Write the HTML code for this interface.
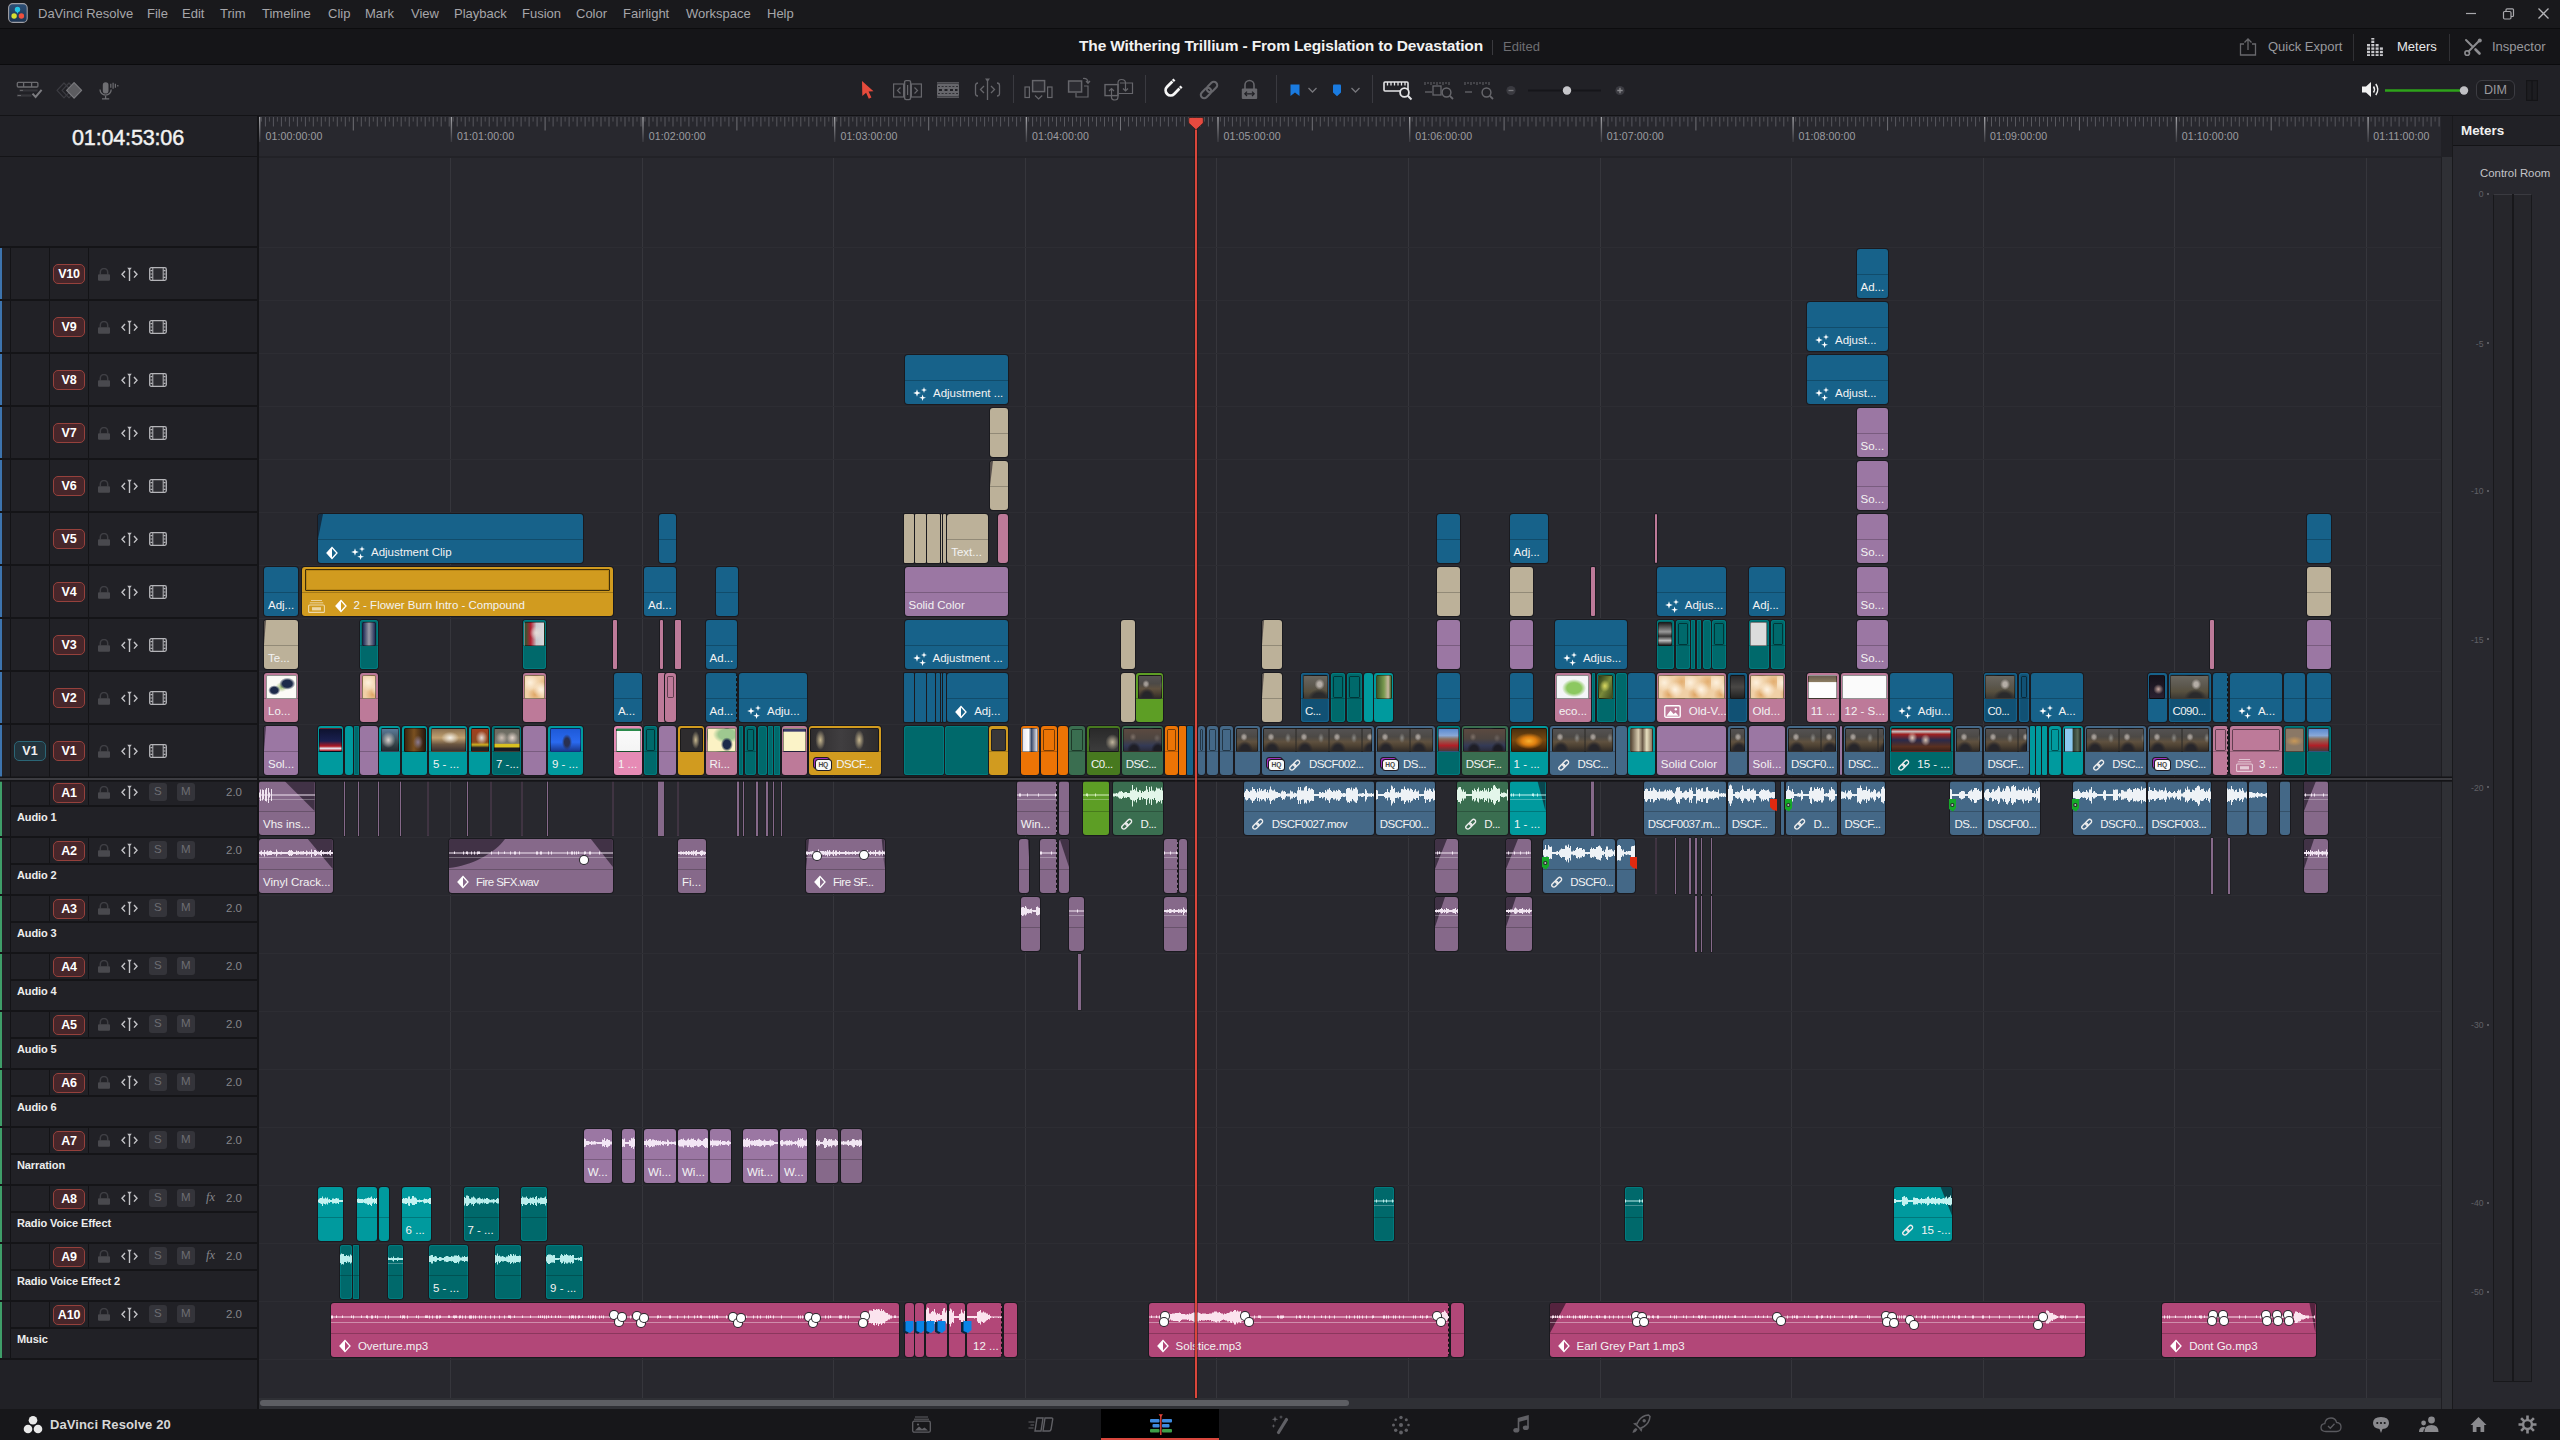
<!DOCTYPE html><html><head><meta charset="utf-8"><title>DaVinci Resolve</title><style>
*{box-sizing:border-box;margin:0;padding:0}
html,body{width:2560px;height:1440px;overflow:hidden}
body{background:#28282e;font-family:"Liberation Sans",sans-serif;position:relative;color:#d0d0d0;font-size:12px}
i{display:block;position:absolute;font-style:normal}
svg{position:absolute;overflow:visible}
#mb{position:absolute;left:0;top:0;width:2560px;height:29px;background:#19191c;border-bottom:1.5px solid #0c0c0e}
#mb span{position:absolute;top:5.5px;font-size:13px;color:#a6a6aa;white-space:nowrap}
#tb{position:absolute;left:0;top:29px;width:2560px;height:36px;background:#151518;border-bottom:1px solid #0b0b0d}
#tb span{position:absolute;white-space:nowrap}
#tool{position:absolute;left:0;top:65px;width:2560px;height:51px;background:#212126;border-bottom:1px solid #131316}
#tool .sep{position:absolute;top:10px;width:1px;height:28px;background:#3a3a40}
#rul{position:absolute;left:259px;top:116px;width:2182px;height:42px;background:#28282e;border-bottom:2px solid #222227;overflow:hidden}
#rul span{position:absolute;top:13.5px;font-size:10.6px;color:#9c9ca0;letter-spacing:0.1px}
#tc{position:absolute;left:0;top:116px;width:258px;height:42px;background:#212126;border-bottom:2px solid #141417;color:#f2f2f2;font-size:21.6px;line-height:43px;text-align:center;letter-spacing:-0.2px;padding-right:2px;-webkit-text-stroke:.45px #f2f2f2}
#hd{position:absolute;left:0;top:157px;width:258px;height:1252px;background:#212126}
#hdr{position:absolute;left:257px;top:116px;width:2px;height:1293px;background:#141417;z-index:6}
#tl{position:absolute;left:0;top:0;width:2441px;height:1398px;overflow:hidden;clip-path:inset(158px 0 0 259px)}
.gv{top:157px;width:1px;height:1241px;background:#36363c}
.gh{left:259px;width:2182px;height:1px;background:#2d2d33}
.c{position:absolute;border-radius:3px;overflow:hidden;box-shadow:0 0 0 1px #1a1a1f}
.c.dteal{box-shadow:0 0 0 1px #1a1a1f,inset 0 0 0 1px #007b7e}.c.dblue{box-shadow:0 0 0 1px #1a1a1f,inset 0 0 0 1.2px #17628a}
.v{height:49px}.a{height:54px}
.thin{border-radius:1px}.sq{border-radius:1px}
.ln{left:0;right:0;height:1px;background:rgba(0,0,0,.22)}
.v .ln{top:25px}.a .ln{top:30px}
.lb{position:absolute;left:0;right:0;white-space:nowrap;overflow:hidden;color:#f3f3f3;font-size:11.5px;padding-left:4px;line-height:17.5px;display:flex;align-items:center}
.v .lb{top:30px}.a .lb{top:34.5px}
.lb.wi{padding-left:8px}
.ic{position:static;flex:none;height:14px;margin-right:6px}
.xf{width:15px;margin-right:5px}.xk{width:12px;margin-right:7px}.xl{width:11.5px;height:12.5px;margin-right:8px}.xi{width:17px;height:13px;margin:0 8px 0 -1px}
.xc{width:17px;margin:0 6px 0 -2px}
.xk+.xf{margin-left:6px}.xc+.xk{margin-left:4px}.hq+.xl{margin-left:0px}
.lb .ic{position:static}
.hq{flex:none;position:relative;width:15px;height:10px;margin:-3px 7.5px 0 -3px;background:#a030bd;border-radius:2.5px;box-shadow:0 0 0 1px #1e1a22}
.hq b{position:absolute;left:2px;top:2.2px;width:15px;height:10px;background:#f8f8f8;border-radius:2.5px;color:#444;font-size:6.6px;line-height:10.5px;text-align:center;font-weight:bold;box-shadow:0 0 0 1px #1e1a22;letter-spacing:-0.1px}
.cx{letter-spacing:-0.55px}
.th{left:1.5px;right:1.5px;top:2px;height:23.5px;border:1.3px solid rgba(0,0,0,.42);border-radius:1.5px}
.in1{background:transparent;border:1.6px solid rgba(0,0,0,.48);left:2px;right:2px;top:2.5px;height:22.5px;border-radius:1.5px}
.in2{background:#39373a;border-color:rgba(0,0,0,.4);left:2px;right:2px;top:3px;height:21.5px}
.cmp{left:3px;right:3px;top:2px;height:22px;border:1px solid rgba(0,0,0,.7);border-radius:1px;box-shadow:inset 0 0 0 1px rgba(120,80,0,.25)}
.fd{left:0;top:0}.fd *{fill:rgba(15,10,20,.58)}
.wv{left:0;top:0}
.ds{right:0;top:0;bottom:0;width:0;border-right:1.5px dashed #111}
.dot{width:8px;height:8px;border-radius:50%;background:#fff;box-shadow:0 0 0 1px #2a2a2e;z-index:3}
.mk{z-index:4}
.tlp{height:56px;background:#86698a;box-shadow:0 0 0 .5px #1a1a1f}
.tld{height:56px;background:#1a181c;box-shadow:inset 0 0 0 .6px #5a485d;border-radius:1px}
#ph{left:1195px;top:122px;width:2px;height:1276px;background:#da463b;z-index:9;box-shadow:0 0 0 .6px rgba(30,20,20,.75)}
#phh{left:1188px;top:117px;z-index:10}
/* thumbnails */
.t-int{background:radial-gradient(ellipse 3.6px 4px at 7px 8px,#a39c96 0,#a39c96 35%,#a39c9600 100%) 0 0/33px 100%,radial-gradient(ellipse 8px 9px at 8px 21px,#26252a 0,#26252a 55%,#26252a00 100%) 0 0/33px 100%,radial-gradient(ellipse 3px 5px at 24px 9px,#8a8884 0,#8a888400 100%) 0 0/33px 100%,linear-gradient(90deg,#0000 0,#0000 94%,#2a2826 97%,#0000 100%) 0 0/33px 100%,linear-gradient(#545252 0,#4c4946 35%,#5f513f 58%,#4f4334 75%,#322c28 100%)}
.t-int2{background:radial-gradient(ellipse 5px 5.5px at 68% 38%,#b4ada6 0,#b4ada6 40%,#b4ada600 100%),radial-gradient(ellipse 11px 9px at 66% 100%,#2a2a2c 0,#2a2a2c 55%,#2a2a2c00 100%),linear-gradient(#6a675f 0,#5d5950 40%,#57503f 70%,#3d3a34 100%)}
.t-int3{background:radial-gradient(ellipse 3.4px 4px at 9px 8px,#7d7068 0,#7d706800 100%) 0 0/47px 100%,radial-gradient(ellipse 3.4px 4px at 33px 9px,#6b625d 0,#6b625d00 100%) 0 0/47px 100%,radial-gradient(ellipse 7px 8px at 10px 21px,#1e1e26 0,#1e1e26 55%,#1e1e2600 100%) 0 0/47px 100%,radial-gradient(ellipse 7px 8px at 34px 21px,#1c1c24 0,#1c1c24 55%,#1c1c2400 100%) 0 0/47px 100%,linear-gradient(#5b4a40 0,#4d4540 45%,#343a55 75%,#2a2c3c 100%)}
.t-news{background:linear-gradient(#0e1330 0,#1a2050 55%,#b01822 78%,#e8e8f0 88%,#b01822 100%)}
.t-suit{background:linear-gradient(90deg,#1c2a55,#9a9aa5 50%,#20305a)}
.t-man2{background:radial-gradient(ellipse 7px 7px at 60% 45%,#e6dcd6 0,#e6dcd600 100%),linear-gradient(90deg,#2a5a30,#b02030 30%,#c8c8cc 60%,#d8d8dc)}
.t-bw{background:linear-gradient(#222,#999 40%,#333 60%,#bbb 80%,#222)}
.t-paper{background:#dcdcdc}
.t-logo{background:radial-gradient(ellipse 8px 6px at 70% 35%,#1d2a4a 0,#1d2a4a 60%,#1d2a4a00 100%),radial-gradient(ellipse 6px 5px at 25% 65%,#1d2a4a 0,#1d2a4a 60%,#1d2a4a00 100%),radial-gradient(ellipse 6px 5px at 50% 50%,#9ab86a 0,#9ab86a00 100%),#fbfbf6}
.t-parch{background:radial-gradient(circle at 20% 30%,#fdf0dc 0,#fdf0dc00 34%) 0 0/26px 100%,radial-gradient(circle at 62% 62%,#fff3e2 0,#fff3e200 38%) 0 0/26px 100%,radial-gradient(circle at 88% 25%,#e3ae70 0,#e3ae7000 32%) 0 0/26px 100%,radial-gradient(circle at 38% 85%,#dfa666 0,#dfa66600 30%) 0 0/26px 100%,#f0d0a6}
.t-leaf{background:linear-gradient(90deg,#3a5a2a,#7a9a50 50%,#c8b8a0 80%,#4a6a30)}
.t-map{background:radial-gradient(ellipse 12px 9px at 55% 55%,#8cc860 0,#8cc860 60%,#8cc86000 100%),#f4f6f8}
.t-flower{background:radial-gradient(ellipse 5px 6px at 45% 45%,#d8d860 0,#d8d86000 100%),linear-gradient(120deg,#2a3a18,#7a8a3a 50%,#3a4a20)}
.t-dark{background:linear-gradient(#2a2a2c,#4a4846 50%,#222)}
.t-doc{background:linear-gradient(#6a5f50 0,#8a7a60 25%,#fdfdfd 30%,#fdfdfd 100%)}
.t-white{background:#fbfbfb}
.t-hands{background:radial-gradient(ellipse 5px 5px at 60% 60%,#c8a8a0 0,#c8a8a000 100%),linear-gradient(#15121a,#2a2030)}
.t-man1{background:radial-gradient(ellipse 7px 8px at 40% 50%,#d8d0cc 0,#d8d0cc00 100%),linear-gradient(#5a7a98,#3a4a50 60%,#222a30)}
.t-hall{background:radial-gradient(ellipse 5px 7px at 65% 60%,#8a7a90 0,#8a7a9000 100%),linear-gradient(90deg,#3a2410,#7a5020 45%,#2a1a10)}
.t-corr{background:radial-gradient(ellipse 9px 6px at 55% 40%,#f4f0e8 0,#f4f0e800 100%),linear-gradient(#8a7050,#c0a070 40%,#6a5540 70%,#3a3030)}
.t-podium{background:radial-gradient(ellipse 6px 7px at 60% 40%,#e8dcd6 0,#e8dcd600 100%),linear-gradient(#a04020 0,#8a4a20 60%,#d0b020 72%,#222 85%)}
.t-news2{background:radial-gradient(ellipse 6px 6px at 28% 40%,#cdbfb4 0,#cdbfb400 100%),radial-gradient(ellipse 6px 6px at 72% 40%,#e6d6cc 0,#e6d6cc00 100%),linear-gradient(#6a6a60 0,#7a7870 65%,#d8c020 70%,#d8c020 82%,#1a1a20 86%)}
.t-bluestage{background:radial-gradient(ellipse 5px 8px at 55% 60%,#2a3050 0,#2a3050 50%,#2a305000 100%),linear-gradient(#1e5ad8,#2a6af0 60%,#1a3a90)}
.t-web{background:linear-gradient(#2a8a4a 0,#2a8a4a 8%,#fafafa 10%,#f4f4f4 100%)}
.t-darkfl{background:radial-gradient(ellipse 4px 9px at 70% 50%,#c8b890 0,#c8b89000 100%),#2e2c2e}
.t-darkfl2{background:radial-gradient(ellipse 5px 10px at 14% 50%,#c8b890 0,#c8b89000 100%),radial-gradient(ellipse 5px 10px at 72% 50%,#c8b890 0,#c8b89000 100%),linear-gradient(90deg,#2e2c2e,#403e40 45%,#2e2c2e)}
.t-cmap{background:radial-gradient(ellipse 6px 7px at 70% 70%,#1d2a4a 0,#1d2a4a 60%,#1d2a4a00 100%),radial-gradient(ellipse 14px 9px at 70% 25%,#9ec890 0,#9ec890 60%,#9ec89000 100%),#fbf2c4}
.t-cream{background:linear-gradient(#3a3a6a 0,#3a3a6a 10%,#fbf3c8 14%)}
.t-whiteb{background:linear-gradient(90deg,#e8e8f0,#fff 40%,#3a4a6a 60%,#e0e0e8)}
.t-dark2{background:radial-gradient(ellipse 7px 8px at 80% 60%,#c0b49c 0,#c0b49c00 100%),linear-gradient(#2a2a2a,#3c3c3c)}
.t-crowd{background:linear-gradient(#5a8ad0 0,#88a8d8 30%,#8a7060 45%,#b02028 75%,#4a3a3a)}
.t-fire{background:radial-gradient(ellipse 14px 8px at 50% 55%,#f8b030 0,#e08010 50%,#e0801000 100%),linear-gradient(#4a3010,#7a4a10 50%,#3a2008)}
.t-bark{background:linear-gradient(90deg,#5a4a38,#d8ccb0 35%,#6a5a48 55%,#e8e0c0 75%,#8a7a60)}
.t-congress{background:radial-gradient(ellipse 5px 6px at 35% 40%,#e0c8b8 0,#e0c8b800 100%),radial-gradient(ellipse 5px 6px at 58% 50%,#d8c0b0 0,#d8c0b000 100%),linear-gradient(#a02020 0,#c8c0c0 12%,#a02020 24%,#2a2a4a 50%,#5a3020 80%,#3a2018)}
.t-lblue{background:linear-gradient(90deg,#8cc8f0 0,#8cc8f0 45%,#2a3a30 50%,#5a6a58 80%,#1a2018)}
.t-tan{background:radial-gradient(ellipse 9px 5px at 50% 55%,#c89858 0,#c8985800 100%),#8a7866}
/* headers */
.hr{position:absolute;left:0;width:258px;border-top:2px solid #141417;margin-top:-1px}
.hr .strip{left:0;top:0;bottom:0;width:2px}
.hr .c1{left:10px;top:0;bottom:0;width:1px;background:#131316}
.hr .c2{left:49px;top:0;width:1px;background:#131316}
.hr .c3{left:88px;top:0;width:1px;background:#131316}
.bd{position:absolute;left:53px;width:32px;height:20px;border:1px solid #96413c;background:#47262a;border-radius:5px;color:#fff;font-weight:bold;font-size:12.5px;text-align:center;line-height:18px;letter-spacing:-0.2px}
.bs{position:absolute;left:14px;width:32px;height:20px;border:1px solid #2b6676;background:#22333c;border-radius:5px;color:#f0f0f0;font-weight:bold;font-size:12.5px;text-align:center;line-height:18px}
.sm{position:absolute;width:17.5px;height:17.5px;background:#34343a;border-radius:3px;color:#6d6d72;font-size:11.5px;text-align:center;line-height:17.5px}
.vol{position:absolute;left:226px;font-size:11.5px;color:#85858a}
.fx{position:absolute;left:206px;font-size:12.5px;color:#85858a;font-style:italic;font-family:"Liberation Serif",serif}
.nm{position:absolute;left:17px;font-size:11px;font-weight:bold;color:#ededed;white-space:nowrap;letter-spacing:-0.1px}
.sub{left:11px;right:0;height:2px;background:#141417}
/* meters */
#mt{position:absolute;left:2452px;top:116px;width:108px;height:1293px;background:#28282e;border-left:1px solid #19191c}
#mth{position:absolute;left:0;top:0;width:108px;height:30px;background:#212126;border-bottom:1px solid #131316;color:#f0f0f0;font-size:13.4px;font-weight:bold;line-height:29px;padding-left:8px}
#mt .sc{position:absolute;right:71.5px;font-size:8.6px;color:#606066;white-space:nowrap}
#vs{position:absolute;left:2441px;top:157px;width:11px;height:1252px;background:#2f3035;border-left:1px solid #1e1e22}
#vs0{position:absolute;left:2441px;top:116px;width:11px;height:41px;background:#212126}
#hs{position:absolute;left:259px;top:1398px;width:2182px;height:11px;background:#2f3035}
#hs i{left:1px;top:2px;width:1089px;height:6px;border-radius:3px;background:#5d5e63}
#bb{position:absolute;left:0;top:1409px;width:2560px;height:31px;background:#17171a}
#bb span{position:absolute;left:50px;top:7.5px;font-size:13px;font-weight:bold;color:#d8d8d8;letter-spacing:0.1px}
.blue{background:#17628a}.dblue{background:#115174}.teal{background:#009a9e}.dteal{background:#00696b}.lav{background:#9b77a3}.pink{background:#bd7a99}.bpink{background:#e68bb5}.beige{background:#bcb199}.gold{background:#d19b1f}.orange{background:#ec7405}.lime{background:#5d9e25}.olive{background:#47791f}.sgreen{background:#3a6e50}.sblue{background:#446887}.apurp{background:#86698a}.mag{background:#b24778}</style></head><body><svg width="0" height="0" style="position:absolute"><defs>
<symbol id="sf" viewBox="0 0 15 14"><path d="M4,2.2 4.9,5.1 7.8,6 4.9,6.9 4,9.8 3.1,6.9 0.2,6 3.1,5.1Z M11,0 11.7,2.3 14,3 11.7,3.7 11,6 10.3,3.7 8,3 10.3,2.3Z M9.6,7.4 10.4,10 13,10.8 10.4,11.6 9.6,14 8.8,11.6 6.2,10.8 8.8,10Z" fill="#fff"/></symbol>
<symbol id="sk" viewBox="0 0 12 14"><path d="M6,1.5 11,7 6,12.5 1,7Z" fill="none" stroke="#fff" stroke-width="1.3"/><path d="M6,1.5V12.5L1,7Z" fill="#fff"/></symbol>
<symbol id="sl" viewBox="0 0 13 14"><g fill="none" stroke="#ececec" stroke-width="1.6" transform="rotate(-45 6.5 7)"><rect x="-0.4" y="4.7" width="7.8" height="4.6" rx="2.3"/><rect x="5.6" y="4.7" width="7.8" height="4.6" rx="2.3"/></g></symbol>
<symbol id="sc" viewBox="0 0 17 14"><path d="M3,1.5H14M1.8,3.8H15.2" stroke="rgba(255,255,255,.55)" stroke-width="1" fill="none"/><rect x="0.6" y="6" width="15.8" height="7.4" rx="1" fill="none" stroke="rgba(255,255,255,.62)" stroke-width="1.1"/><rect x="4" y="8.2" width="9" height="3.2" fill="rgba(255,255,255,.6)"/></symbol>
<symbol id="si" viewBox="0 0 17 13"><rect x="0.8" y="0.8" width="15.4" height="11.4" rx="1.2" fill="none" stroke="#fff" stroke-width="1.4"/><path d="M2.5,10.8 6.5,5.5 9.6,9 11.6,7.4 14.6,10.8Z" fill="#fff"/><circle cx="11.8" cy="4.2" r="1.2" fill="#fff"/></symbol>
<symbol id="lock" viewBox="0 0 12 13"><path d="M2.3,6.5V4.2 a3.7,3.7 0 0 1 7.4,0 V6.5" fill="none" stroke="#3f3f44" stroke-width="1.5"/><rect x="0" y="6.3" width="12" height="6.4" rx="1" fill="#49494e"/></symbol>
<symbol id="asel" viewBox="0 0 17 14"><path d="M4,4 1,7.3 4,10.6 M13,4 16,7.3 13,10.6" fill="none" stroke="#c4c4c8" stroke-width="1.4"/><path d="M8.5,2V14" stroke="#c4c4c8" stroke-width="1.4"/><path d="M6.2,0.8H10.8L8.5,3.5Z" fill="#c4c4c8"/></symbol>
<symbol id="film" viewBox="0 0 18 14"><rect x="0.7" y="0.7" width="16.6" height="12.6" rx="1.5" fill="#2c2c31" stroke="#b4b4b8" stroke-width="1.3"/><path d="M3.8,1V13M14.2,1V13" stroke="#b4b4b8" stroke-width="1"/><path d="M1.5,3.6H3.5M1.5,7H3.5M1.5,10.4H3.5M14.5,3.6H16.5M14.5,7H16.5M14.5,10.4H16.5" stroke="#b4b4b8" stroke-width="1.2"/></symbol>
</defs></svg><div id="mb"><svg style="left:8px;top:3px" width="20" height="20"><defs><linearGradient id="lg" x1="0" y1="0" x2="0" y2="1"><stop offset="0" stop-color="#2d5078"/><stop offset="1" stop-color="#1c3350"/></linearGradient></defs><rect x="0.6" y="0.6" width="18.6" height="18.8" rx="4.2" fill="url(#lg)" stroke="#a0a0a6" stroke-width="1.1"/><circle cx="9.5" cy="6.5" r="2.7" fill="#25c6e6"/><path d="M8.4,8.6 9.5,10.8 10.6,8.6Z" fill="#25c6e6"/><circle cx="6.1" cy="13" r="2.7" fill="#d6de32"/><circle cx="13.4" cy="13" r="2.7" fill="#f0503e"/></svg><span style="left:38px">DaVinci Resolve</span><span style="left:147px">File</span><span style="left:182px">Edit</span><span style="left:220px">Trim</span><span style="left:262px">Timeline</span><span style="left:328px">Clip</span><span style="left:365px">Mark</span><span style="left:411px">View</span><span style="left:454px">Playback</span><span style="left:522px">Fusion</span><span style="left:576px">Color</span><span style="left:623px">Fairlight</span><span style="left:686px">Workspace</span><span style="left:767px">Help</span><svg style="left:2464px;top:6px" width="90" height="16"><path d="M2,7.5H12" stroke="#a8a8ac" stroke-width="1.2"/><rect x="39.5" y="5.5" width="7.5" height="7.5" rx="1.2" fill="none" stroke="#a8a8ac" stroke-width="1.2"/><path d="M42,5.5V3.8 a1,1 0 0 1 1,-1 H48.5 a1,1 0 0 1 1,1 V9.5 a1,1 0 0 1 -1,1 H47" fill="none" stroke="#a8a8ac" stroke-width="1.2"/><path d="M74.5,2.5 84.5,12.5M84.5,2.5 74.5,12.5" stroke="#b4b4b8" stroke-width="1.3"/></svg></div><div id="tb"><span id="ttl" style="left:1079px;top:8px;font-size:15.5px;font-weight:bold;color:#f2f2f2;letter-spacing:-0.15px">The Withering Trillium - From Legislation to Devastation</span><i style="left:1492px;top:11px;width:1px;height:15px;background:#3a3a3e"></i><span style="left:1503px;top:10px;font-size:13px;color:#6e6e72">Edited</span><svg style="left:2238px;top:8px" width="20" height="20"><path d="M6,7H2.5V18H17.5V7H14" fill="none" stroke="#68686c" stroke-width="1.3"/><path d="M10,13V2.5M6.5,5.5 10,2 13.5,5.5" fill="none" stroke="#68686c" stroke-width="1.3"/></svg><span style="left:2268px;top:10px;font-size:13px;color:#98989c">Quick Export</span><i style="left:2353px;top:5px;width:1px;height:27px;background:#303034"></i><svg style="left:2367px;top:9px" width="18" height="18"><g fill="#c8c8cc"><rect x="0" y="6" width="3" height="2.4"/><rect x="0" y="9.4" width="3" height="2.4"/><rect x="0" y="12.8" width="3" height="2.4"/><rect x="0" y="16.2" width="3" height="1.8"/><rect x="4.3" y="0" width="3" height="1.6"/><rect x="4.3" y="2.6" width="3" height="2.4"/><rect x="4.3" y="6" width="3" height="2.4"/><rect x="4.3" y="9.4" width="3" height="2.4"/><rect x="4.3" y="12.8" width="3" height="2.4"/><rect x="4.3" y="16.2" width="3" height="1.8"/><rect x="8.6" y="6" width="3" height="2.4"/><rect x="8.6" y="9.4" width="3" height="2.4"/><rect x="8.6" y="12.8" width="3" height="2.4"/><rect x="8.6" y="16.2" width="3" height="1.8"/><rect x="12.9" y="9.4" width="3" height="2.4"/><rect x="12.9" y="12.8" width="3" height="2.4"/><rect x="12.9" y="16.2" width="3" height="1.8"/></g></svg><span style="left:2397px;top:10px;font-size:13px;color:#e8e8e8">Meters</span><i style="left:2449px;top:5px;width:1px;height:27px;background:#303034"></i><svg style="left:2464px;top:9px" width="19" height="18"><g stroke="#8c8c90" stroke-width="2" stroke-linecap="round" fill="none"><path d="M2,2 8,8M16,2 4.5,13.5"/><path d="M11.5,11.5 15.5,15.5" stroke-width="2.6"/></g><circle cx="3.2" cy="15" r="2.3" fill="none" stroke="#8c8c90" stroke-width="1.6"/><circle cx="15.8" cy="2.6" r="2" fill="#8c8c90"/></svg><span style="left:2492px;top:10px;font-size:13px;color:#98989c">Inspector</span></div><div id="tool"><svg style="left:0;top:0" width="130" height="50"><g fill="none" stroke="#6c6c70" stroke-width="1.3"><rect x="17.3" y="17.4" width="20.6" height="4.6" rx="1"/><path d="M23.6,17.4V22M31.6,17.4V22"/></g><rect x="19.3" y="24.4" width="18.3" height="2.1" fill="#35353a"/><rect x="17" y="29.4" width="14.5" height="2.3" fill="#35353a"/><path d="M20,25.4H23M17.6,30.5H21" stroke="#66666a" stroke-width="1"/><path d="M32.5,28.6 35.6,32 41.6,24.9" fill="none" stroke="#7c7c80" stroke-width="2"/><g fill="none" stroke="#3c3c42" stroke-width="1.2" stroke-linejoin="round"><path d="M64,18 71,25.4 64,32.8 57,25.4Z"/><path d="M69,18 76,25.4 69,32.8 62,25.4Z"/></g><path d="M74.1,17.6 81.6,25.4 74.1,33.2 66.6,25.4Z" fill="#5c5c60" stroke="#7a7a7e" stroke-width="1.2" stroke-linejoin="round"/><rect x="102.8" y="17.2" width="5.7" height="11.4" rx="2.85" fill="#6e6e72"/><path d="M100,24.5 a5.6,5.6 0 0 0 11.2,0M105.6,31V33.4M102,33.8H109.2" fill="none" stroke="#6e6e72" stroke-width="1.3"/><path d="M110.8,18.8V22.8M113.1,17.8V23.8M115.4,18.8V22.8" stroke="#6e6e72" stroke-width="1.2"/><path d="M117.8,20V21.6" stroke="#6e6e72" stroke-width="1.2"/></svg><svg style="left:860px;top:14px" width="16" height="22"><path d="M2,2 13.5,12.2 8.6,12.6 11.4,18.6 8.8,19.8 6.1,13.8 2.3,17Z" fill="#e64b3c"/></svg><svg style="left:893px;top:14px" width="30" height="22"><g fill="none" stroke="#66666b" stroke-width="1.2"><rect x="0.6" y="5" width="10" height="13"/><rect x="18.4" y="5" width="10" height="13"/><rect x="11.6" y="1.6" width="6" height="19" rx="1.5" fill="#212126" stroke-width="1.4"/><path d="M14.6,6V16"/><path d="M7.5,8.5 4.5,11.5 7.5,14.5M21.5,8.5 24.5,11.5 21.5,14.5"/></g></svg><svg style="left:936px;top:17px" width="24" height="16"><rect x="1" y="2" width="22" height="12" rx="1" fill="#66666b"/><path d="M1,0.8H23M1,15.2H23" stroke="#66666b" stroke-width="1.2"/><path d="M3,8H6M8.5,8H11.5M14,8H17M19,8H21.5" stroke="#212126" stroke-width="2.2"/><path d="M2,4.5H22M2,11.5H22" stroke="#212126" stroke-width=".8" stroke-dasharray="2 1.6"/></svg><svg style="left:974px;top:12px" width="28" height="24"><g fill="none" stroke="#66666b" stroke-width="1.3"><path d="M13.5,2V23"/><path d="M4,6 Q1.5,6 1.5,8.5V16.5Q1.5,19 4,19M23,6Q25.5,6 25.5,8.5V16.5Q25.5,19 23,19"/><path d="M10,9 6.5,12.5 10,16M17,9 20.5,12.5 17,16"/></g><path d="M11,1.5H16L13.5,5Z" fill="#66666b"/></svg><i class="sep" style="left:1013px"></i><svg style="left:1024px;top:14px" width="30" height="24"><g fill="none" stroke="#66666b" stroke-width="1.2"><rect x="1" y="8" width="4.4" height="10.5"/><rect x="23.6" y="8" width="4.4" height="10.5"/><rect x="8.6" y="1.6" width="12" height="11" fill="#2c2c32" stroke-width="1.5"/><path d="M11,16.5 14.6,20 18.2,16.5"/></g></svg><svg style="left:1067px;top:12px" width="26" height="24"><g fill="none" stroke="#66666b" stroke-width="1.2"><path d="M9,16V20H21V9H17"/><rect x="1.6" y="4" width="13" height="11" fill="#2c2c32" stroke-width="1.5"/><path d="M16,1.5Q21,1 21,5.5M19,4 21,6.3 23,4"/></g></svg><svg style="left:1103px;top:13px" width="32" height="24"><g fill="none" stroke="#66666b" stroke-width="1.2"><rect x="2" y="6.6" width="13" height="11" stroke-width="1.4"/><path d="M17,5H29.5V15.5H16"/><path d="M8.5,20V11M6,13 8.5,10.5 11,13"/><path d="M8.5,20Q9,22 12,22 15,22 15,19V5Q15,1.5 18.5,1.5 22.5,1.5 22.5,5V12.5M20,10.5 22.5,13 25,10.5"/></g></svg><i class="sep" style="left:1145px"></i><svg style="left:1159px;top:13px" width="24" height="24"><g transform="rotate(45 12 12)"><path d="M7,5V12.5 a5,5 0 0 0 10,0V5" fill="none" stroke="#f6f6f6" stroke-width="2.8"/><path d="M5.6,3.2H8.4M15.6,3.2H18.4" stroke="#f6f6f6" stroke-width="2.2"/></g></svg><svg style="left:1198px;top:14px" width="22" height="22"><g fill="none" stroke="#66666b" stroke-width="2.1" transform="rotate(-45 11 11)"><rect x="0.8" y="7.6" width="12" height="6.8" rx="3.4"/><rect x="9.2" y="7.6" width="12" height="6.8" rx="3.4"/></g></svg><svg style="left:1241px;top:14px" width="17" height="22"><path d="M4,10V6 a4.5,4.5 0 0 1 9,0V10" fill="none" stroke="#66666b" stroke-width="1.6"/><rect x="0.8" y="9.6" width="15.4" height="10.4" rx="1" fill="#66666b"/><path d="M4,14.8H13M6,12.6 3.8,14.8 6,17M11,12.6 13.2,14.8 11,17" fill="none" stroke="#212126" stroke-width="1.2"/></svg><i class="sep" style="left:1276px"></i><svg style="left:1289px;top:19px" width="30" height="13"><path d="M1.5,0.5H10.5V12L6,8.6 1.5,12Z" fill="#1a7be0"/><path d="M19.5,4 23.5,8 27.5,4" fill="none" stroke="#77777c" stroke-width="1.3"/></svg><svg style="left:1332px;top:19px" width="30" height="13"><path d="M1,1.5Q1,0.5 2,0.5H8Q9,0.5 9,1.5V8.5L5,12.2 1,8.5Z" fill="#1a7be0"/><path d="M19.5,4 23.5,8 27.5,4" fill="none" stroke="#77777c" stroke-width="1.3"/></svg><i class="sep" style="left:1372px"></i><svg style="left:1383px;top:14px" width="32" height="22"><g fill="none" stroke="#e4e4e6" stroke-width="1.3"><rect x="1" y="3" width="24" height="9" rx="1" stroke-width="1.6"/><path d="M4.5,3V6.5M8,3V6.5M11.5,3V6.5M15,3V6.5M18.5,3V6.5M22,3V6.5"/><circle cx="21.5" cy="13.5" r="4.4" fill="#212126" stroke-width="1.8"/><path d="M24.8,16.8 28.5,20.5" stroke-width="2"/></g></svg><svg style="left:1424px;top:14px" width="32" height="22"><g fill="none" stroke="#66666b" stroke-width="1.3"><path d="M1,3V6M4,3V5M7,3V6M10,3V5M13,3V6M16,3V5M19,3V6M22,3V5M25,3V6" stroke-width="1"/><path d="M1,13H8"/><rect x="9" y="7" width="8" height="9"/><circle cx="22.5" cy="13.5" r="4.4" stroke-width="1.5"/><path d="M25.8,16.8 29,20" stroke-width="1.8"/></g></svg><svg style="left:1464px;top:14px" width="32" height="22"><g fill="none" stroke="#66666b" stroke-width="1.3"><path d="M1,3V6M4,3V5M7,3V6M10,3V5M13,3V6M16,3V5M19,3V6M22,3V5M25,3V6" stroke-width="1"/><path d="M1,13H8"/><circle cx="22.5" cy="13.5" r="4.4" stroke-width="1.5"/><path d="M25.8,16.8 29,20" stroke-width="1.8"/></g></svg><svg style="left:1505px;top:19px" width="122" height="13"><circle cx="6" cy="6.5" r="4.6" fill="#3a3a40"/><path d="M3.5,6.5H8.5" stroke="#77777c" stroke-width="1.3"/><path d="M23,6.5H96" stroke="#16161a" stroke-width="2"/><circle cx="62" cy="6.5" r="4.2" fill="#c6c6ca"/><circle cx="115" cy="6.5" r="4.6" fill="#3a3a40"/><path d="M112.3,6.5H117.7M115,3.8V9.2" stroke="#88888c" stroke-width="1.3"/></svg><svg style="left:2361px;top:16px" width="20" height="17"><path d="M1,5.5H5L10,1V16L5,11.5H1Z" fill="#f0f0f0"/><path d="M12.5,5.5Q14.5,8.5 12.5,11.5M14.8,3Q18.8,8.5 14.8,14" fill="none" stroke="#f0f0f0" stroke-width="1.5"/></svg><svg style="left:2384px;top:19px" width="88" height="13"><path d="M1,6.5H76" stroke="#2ea31a" stroke-width="2.4"/><circle cx="80" cy="6.5" r="4.2" fill="#c0c0c4"/></svg><i style="left:2476px;top:15px;width:39px;height:20px;border:1px solid #3c3c42;border-radius:6px;color:#9a9a9e;font-size:12.5px;text-align:center;line-height:18px;background:#1d1d21">DIM</i><svg style="left:2526px;top:15px" width="12" height="21"><rect x="0.6" y="0.6" width="10.8" height="19.8" fill="#1d1d21" stroke="#141417" stroke-width="1.2"/><path d="M6,1V20" stroke="#141417" stroke-width="1.2"/></svg></div><div id="tc">01:04:53:06</div><div id="rul"><svg style="left:0;top:0" width="2182" height="40"><defs><linearGradient id="mj" x1="0" y1="0" x2="0" y2="26" gradientUnits="userSpaceOnUse"><stop offset="0" stop-color="#a8a8ac"/><stop offset=".45" stop-color="#77777c"/><stop offset="1" stop-color="#3a3a40"/></linearGradient></defs><g stroke-width="1"><path d="M2.4,1V5.6" stroke="#505056"/><path d="M6.4,1V10.5" stroke="#58585e"/><path d="M10.4,1V5.6" stroke="#505056"/><path d="M14.4,1V10.5" stroke="#58585e"/><path d="M18.4,1V5.6" stroke="#505056"/><path d="M22.4,1V10.5" stroke="#58585e"/><path d="M26.4,1V5.6" stroke="#505056"/><path d="M30.4,1V10.5" stroke="#58585e"/><path d="M34.4,1V5.6" stroke="#505056"/><path d="M38.4,1V10.5" stroke="#58585e"/><path d="M42.4,1V5.6" stroke="#505056"/><path d="M46.4,1V10.5" stroke="#58585e"/><path d="M50.3,1V5.6" stroke="#505056"/><path d="M54.3,1V10.5" stroke="#58585e"/><path d="M58.3,1V5.6" stroke="#505056"/><path d="M62.3,1V10.5" stroke="#58585e"/><path d="M66.3,1V5.6" stroke="#505056"/><path d="M70.3,1V10.5" stroke="#58585e"/><path d="M74.3,1V5.6" stroke="#505056"/><path d="M78.3,1V10.5" stroke="#58585e"/><path d="M82.3,1V5.6" stroke="#505056"/><path d="M86.3,1V10.5" stroke="#58585e"/><path d="M90.3,1V5.6" stroke="#505056"/><path d="M94.3,1V14.5" stroke="#707076"/><path d="M98.3,1V5.6" stroke="#505056"/><path d="M102.3,1V10.5" stroke="#58585e"/><path d="M106.3,1V5.6" stroke="#505056"/><path d="M110.3,1V10.5" stroke="#58585e"/><path d="M114.3,1V5.6" stroke="#505056"/><path d="M118.3,1V10.5" stroke="#58585e"/><path d="M122.3,1V5.6" stroke="#505056"/><path d="M126.3,1V10.5" stroke="#58585e"/><path d="M130.3,1V5.6" stroke="#505056"/><path d="M134.3,1V10.5" stroke="#58585e"/><path d="M138.3,1V5.6" stroke="#505056"/><path d="M142.2,1V10.5" stroke="#58585e"/><path d="M146.2,1V5.6" stroke="#505056"/><path d="M150.2,1V10.5" stroke="#58585e"/><path d="M154.2,1V5.6" stroke="#505056"/><path d="M158.2,1V10.5" stroke="#58585e"/><path d="M162.2,1V5.6" stroke="#505056"/><path d="M166.2,1V10.5" stroke="#58585e"/><path d="M170.2,1V5.6" stroke="#505056"/><path d="M174.2,1V10.5" stroke="#58585e"/><path d="M178.2,1V5.6" stroke="#505056"/><path d="M182.2,1V10.5" stroke="#58585e"/><path d="M186.2,1V5.6" stroke="#505056"/><path d="M190.2,1V10.5" stroke="#58585e"/><path d="M194.2,1V5.6" stroke="#505056"/><path d="M198.2,1V10.5" stroke="#58585e"/><path d="M202.2,1V5.6" stroke="#505056"/><path d="M206.2,1V10.5" stroke="#58585e"/><path d="M210.2,1V5.6" stroke="#505056"/><path d="M214.2,1V10.5" stroke="#58585e"/><path d="M218.2,1V5.6" stroke="#505056"/><path d="M222.2,1V10.5" stroke="#58585e"/><path d="M226.2,1V5.6" stroke="#505056"/><path d="M230.2,1V10.5" stroke="#58585e"/><path d="M234.2,1V5.6" stroke="#505056"/><path d="M238.1,1V10.5" stroke="#58585e"/><path d="M242.1,1V5.6" stroke="#505056"/><path d="M246.1,1V10.5" stroke="#58585e"/><path d="M250.1,1V5.6" stroke="#505056"/><path d="M254.1,1V10.5" stroke="#58585e"/><path d="M258.1,1V5.6" stroke="#505056"/><path d="M262.1,1V10.5" stroke="#58585e"/><path d="M266.1,1V5.6" stroke="#505056"/><path d="M270.1,1V10.5" stroke="#58585e"/><path d="M274.1,1V5.6" stroke="#505056"/><path d="M278.1,1V10.5" stroke="#58585e"/><path d="M282.1,1V5.6" stroke="#505056"/><path d="M286.1,1V14.5" stroke="#707076"/><path d="M290.1,1V5.6" stroke="#505056"/><path d="M294.1,1V10.5" stroke="#58585e"/><path d="M298.1,1V5.6" stroke="#505056"/><path d="M302.1,1V10.5" stroke="#58585e"/><path d="M306.1,1V5.6" stroke="#505056"/><path d="M310.1,1V10.5" stroke="#58585e"/><path d="M314.1,1V5.6" stroke="#505056"/><path d="M318.1,1V10.5" stroke="#58585e"/><path d="M322.1,1V5.6" stroke="#505056"/><path d="M326.1,1V10.5" stroke="#58585e"/><path d="M330.0,1V5.6" stroke="#505056"/><path d="M334.0,1V10.5" stroke="#58585e"/><path d="M338.0,1V5.6" stroke="#505056"/><path d="M342.0,1V10.5" stroke="#58585e"/><path d="M346.0,1V5.6" stroke="#505056"/><path d="M350.0,1V10.5" stroke="#58585e"/><path d="M354.0,1V5.6" stroke="#505056"/><path d="M358.0,1V10.5" stroke="#58585e"/><path d="M362.0,1V5.6" stroke="#505056"/><path d="M366.0,1V10.5" stroke="#58585e"/><path d="M370.0,1V5.6" stroke="#505056"/><path d="M374.0,1V10.5" stroke="#58585e"/><path d="M378.0,1V5.6" stroke="#505056"/><path d="M382.0,1V10.5" stroke="#58585e"/><path d="M386.0,1V5.6" stroke="#505056"/><path d="M390.0,1V10.5" stroke="#58585e"/><path d="M394.0,1V5.6" stroke="#505056"/><path d="M398.0,1V10.5" stroke="#58585e"/><path d="M402.0,1V5.6" stroke="#505056"/><path d="M406.0,1V10.5" stroke="#58585e"/><path d="M410.0,1V5.6" stroke="#505056"/><path d="M414.0,1V10.5" stroke="#58585e"/><path d="M418.0,1V5.6" stroke="#505056"/><path d="M421.9,1V10.5" stroke="#58585e"/><path d="M425.9,1V5.6" stroke="#505056"/><path d="M429.9,1V10.5" stroke="#58585e"/><path d="M433.9,1V5.6" stroke="#505056"/><path d="M437.9,1V10.5" stroke="#58585e"/><path d="M441.9,1V5.6" stroke="#505056"/><path d="M445.9,1V10.5" stroke="#58585e"/><path d="M449.9,1V5.6" stroke="#505056"/><path d="M453.9,1V10.5" stroke="#58585e"/><path d="M457.9,1V5.6" stroke="#505056"/><path d="M461.9,1V10.5" stroke="#58585e"/><path d="M465.9,1V5.6" stroke="#505056"/><path d="M469.9,1V10.5" stroke="#58585e"/><path d="M473.9,1V5.6" stroke="#505056"/><path d="M477.9,1V14.5" stroke="#707076"/><path d="M481.9,1V5.6" stroke="#505056"/><path d="M485.9,1V10.5" stroke="#58585e"/><path d="M489.9,1V5.6" stroke="#505056"/><path d="M493.9,1V10.5" stroke="#58585e"/><path d="M497.9,1V5.6" stroke="#505056"/><path d="M501.9,1V10.5" stroke="#58585e"/><path d="M505.9,1V5.6" stroke="#505056"/><path d="M509.9,1V10.5" stroke="#58585e"/><path d="M513.8,1V5.6" stroke="#505056"/><path d="M517.8,1V10.5" stroke="#58585e"/><path d="M521.8,1V5.6" stroke="#505056"/><path d="M525.8,1V10.5" stroke="#58585e"/><path d="M529.8,1V5.6" stroke="#505056"/><path d="M533.8,1V10.5" stroke="#58585e"/><path d="M537.8,1V5.6" stroke="#505056"/><path d="M541.8,1V10.5" stroke="#58585e"/><path d="M545.8,1V5.6" stroke="#505056"/><path d="M549.8,1V10.5" stroke="#58585e"/><path d="M553.8,1V5.6" stroke="#505056"/><path d="M557.8,1V10.5" stroke="#58585e"/><path d="M561.8,1V5.6" stroke="#505056"/><path d="M565.8,1V10.5" stroke="#58585e"/><path d="M569.8,1V5.6" stroke="#505056"/><path d="M573.8,1V10.5" stroke="#58585e"/><path d="M577.8,1V5.6" stroke="#505056"/><path d="M581.8,1V10.5" stroke="#58585e"/><path d="M585.8,1V5.6" stroke="#505056"/><path d="M589.8,1V10.5" stroke="#58585e"/><path d="M593.8,1V5.6" stroke="#505056"/><path d="M597.8,1V10.5" stroke="#58585e"/><path d="M601.8,1V5.6" stroke="#505056"/><path d="M605.8,1V10.5" stroke="#58585e"/><path d="M609.7,1V5.6" stroke="#505056"/><path d="M613.7,1V10.5" stroke="#58585e"/><path d="M617.7,1V5.6" stroke="#505056"/><path d="M621.7,1V10.5" stroke="#58585e"/><path d="M625.7,1V5.6" stroke="#505056"/><path d="M629.7,1V10.5" stroke="#58585e"/><path d="M633.7,1V5.6" stroke="#505056"/><path d="M637.7,1V10.5" stroke="#58585e"/><path d="M641.7,1V5.6" stroke="#505056"/><path d="M645.7,1V10.5" stroke="#58585e"/><path d="M649.7,1V5.6" stroke="#505056"/><path d="M653.7,1V10.5" stroke="#58585e"/><path d="M657.7,1V5.6" stroke="#505056"/><path d="M661.7,1V10.5" stroke="#58585e"/><path d="M665.7,1V5.6" stroke="#505056"/><path d="M669.7,1V14.5" stroke="#707076"/><path d="M673.7,1V5.6" stroke="#505056"/><path d="M677.7,1V10.5" stroke="#58585e"/><path d="M681.7,1V5.6" stroke="#505056"/><path d="M685.7,1V10.5" stroke="#58585e"/><path d="M689.7,1V5.6" stroke="#505056"/><path d="M693.7,1V10.5" stroke="#58585e"/><path d="M697.7,1V5.6" stroke="#505056"/><path d="M701.6,1V10.5" stroke="#58585e"/><path d="M705.6,1V5.6" stroke="#505056"/><path d="M709.6,1V10.5" stroke="#58585e"/><path d="M713.6,1V5.6" stroke="#505056"/><path d="M717.6,1V10.5" stroke="#58585e"/><path d="M721.6,1V5.6" stroke="#505056"/><path d="M725.6,1V10.5" stroke="#58585e"/><path d="M729.6,1V5.6" stroke="#505056"/><path d="M733.6,1V10.5" stroke="#58585e"/><path d="M737.6,1V5.6" stroke="#505056"/><path d="M741.6,1V10.5" stroke="#58585e"/><path d="M745.6,1V5.6" stroke="#505056"/><path d="M749.6,1V10.5" stroke="#58585e"/><path d="M753.6,1V5.6" stroke="#505056"/><path d="M757.6,1V10.5" stroke="#58585e"/><path d="M761.6,1V5.6" stroke="#505056"/><path d="M769.6,1V5.6" stroke="#505056"/><path d="M773.6,1V10.5" stroke="#58585e"/><path d="M777.6,1V5.6" stroke="#505056"/><path d="M781.6,1V10.5" stroke="#58585e"/><path d="M785.6,1V5.6" stroke="#505056"/><path d="M789.6,1V10.5" stroke="#58585e"/><path d="M793.5,1V5.6" stroke="#505056"/><path d="M797.5,1V10.5" stroke="#58585e"/><path d="M801.5,1V5.6" stroke="#505056"/><path d="M805.5,1V10.5" stroke="#58585e"/><path d="M809.5,1V5.6" stroke="#505056"/><path d="M813.5,1V10.5" stroke="#58585e"/><path d="M817.5,1V5.6" stroke="#505056"/><path d="M821.5,1V10.5" stroke="#58585e"/><path d="M825.5,1V5.6" stroke="#505056"/><path d="M829.5,1V10.5" stroke="#58585e"/><path d="M833.5,1V5.6" stroke="#505056"/><path d="M837.5,1V10.5" stroke="#58585e"/><path d="M841.5,1V5.6" stroke="#505056"/><path d="M845.5,1V10.5" stroke="#58585e"/><path d="M849.5,1V5.6" stroke="#505056"/><path d="M853.5,1V10.5" stroke="#58585e"/><path d="M857.5,1V5.6" stroke="#505056"/><path d="M861.5,1V14.5" stroke="#707076"/><path d="M865.5,1V5.6" stroke="#505056"/><path d="M869.5,1V10.5" stroke="#58585e"/><path d="M873.5,1V5.6" stroke="#505056"/><path d="M877.5,1V10.5" stroke="#58585e"/><path d="M881.5,1V5.6" stroke="#505056"/><path d="M885.4,1V10.5" stroke="#58585e"/><path d="M889.4,1V5.6" stroke="#505056"/><path d="M893.4,1V10.5" stroke="#58585e"/><path d="M897.4,1V5.6" stroke="#505056"/><path d="M901.4,1V10.5" stroke="#58585e"/><path d="M905.4,1V5.6" stroke="#505056"/><path d="M909.4,1V10.5" stroke="#58585e"/><path d="M913.4,1V5.6" stroke="#505056"/><path d="M917.4,1V10.5" stroke="#58585e"/><path d="M921.4,1V5.6" stroke="#505056"/><path d="M925.4,1V10.5" stroke="#58585e"/><path d="M929.4,1V5.6" stroke="#505056"/><path d="M933.4,1V10.5" stroke="#58585e"/><path d="M937.4,1V5.6" stroke="#505056"/><path d="M941.4,1V10.5" stroke="#58585e"/><path d="M945.4,1V5.6" stroke="#505056"/><path d="M949.4,1V10.5" stroke="#58585e"/><path d="M953.4,1V5.6" stroke="#505056"/><path d="M961.4,1V5.6" stroke="#505056"/><path d="M965.4,1V10.5" stroke="#58585e"/><path d="M969.4,1V5.6" stroke="#505056"/><path d="M973.4,1V10.5" stroke="#58585e"/><path d="M977.4,1V5.6" stroke="#505056"/><path d="M981.3,1V10.5" stroke="#58585e"/><path d="M985.3,1V5.6" stroke="#505056"/><path d="M989.3,1V10.5" stroke="#58585e"/><path d="M993.3,1V5.6" stroke="#505056"/><path d="M997.3,1V10.5" stroke="#58585e"/><path d="M1001.3,1V5.6" stroke="#505056"/><path d="M1005.3,1V10.5" stroke="#58585e"/><path d="M1009.3,1V5.6" stroke="#505056"/><path d="M1013.3,1V10.5" stroke="#58585e"/><path d="M1017.3,1V5.6" stroke="#505056"/><path d="M1021.3,1V10.5" stroke="#58585e"/><path d="M1025.3,1V5.6" stroke="#505056"/><path d="M1029.3,1V10.5" stroke="#58585e"/><path d="M1033.3,1V5.6" stroke="#505056"/><path d="M1037.3,1V10.5" stroke="#58585e"/><path d="M1041.3,1V5.6" stroke="#505056"/><path d="M1045.3,1V10.5" stroke="#58585e"/><path d="M1049.3,1V5.6" stroke="#505056"/><path d="M1053.3,1V14.5" stroke="#707076"/><path d="M1057.3,1V5.6" stroke="#505056"/><path d="M1061.3,1V10.5" stroke="#58585e"/><path d="M1065.3,1V5.6" stroke="#505056"/><path d="M1069.3,1V10.5" stroke="#58585e"/><path d="M1073.2,1V5.6" stroke="#505056"/><path d="M1077.2,1V10.5" stroke="#58585e"/><path d="M1081.2,1V5.6" stroke="#505056"/><path d="M1085.2,1V10.5" stroke="#58585e"/><path d="M1089.2,1V5.6" stroke="#505056"/><path d="M1093.2,1V10.5" stroke="#58585e"/><path d="M1097.2,1V5.6" stroke="#505056"/><path d="M1101.2,1V10.5" stroke="#58585e"/><path d="M1105.2,1V5.6" stroke="#505056"/><path d="M1109.2,1V10.5" stroke="#58585e"/><path d="M1113.2,1V5.6" stroke="#505056"/><path d="M1117.2,1V10.5" stroke="#58585e"/><path d="M1121.2,1V5.6" stroke="#505056"/><path d="M1125.2,1V10.5" stroke="#58585e"/><path d="M1129.2,1V5.6" stroke="#505056"/><path d="M1133.2,1V10.5" stroke="#58585e"/><path d="M1137.2,1V5.6" stroke="#505056"/><path d="M1141.2,1V10.5" stroke="#58585e"/><path d="M1145.2,1V5.6" stroke="#505056"/><path d="M1153.2,1V5.6" stroke="#505056"/><path d="M1157.2,1V10.5" stroke="#58585e"/><path d="M1161.2,1V5.6" stroke="#505056"/><path d="M1165.1,1V10.5" stroke="#58585e"/><path d="M1169.1,1V5.6" stroke="#505056"/><path d="M1173.1,1V10.5" stroke="#58585e"/><path d="M1177.1,1V5.6" stroke="#505056"/><path d="M1181.1,1V10.5" stroke="#58585e"/><path d="M1185.1,1V5.6" stroke="#505056"/><path d="M1189.1,1V10.5" stroke="#58585e"/><path d="M1193.1,1V5.6" stroke="#505056"/><path d="M1197.1,1V10.5" stroke="#58585e"/><path d="M1201.1,1V5.6" stroke="#505056"/><path d="M1205.1,1V10.5" stroke="#58585e"/><path d="M1209.1,1V5.6" stroke="#505056"/><path d="M1213.1,1V10.5" stroke="#58585e"/><path d="M1217.1,1V5.6" stroke="#505056"/><path d="M1221.1,1V10.5" stroke="#58585e"/><path d="M1225.1,1V5.6" stroke="#505056"/><path d="M1229.1,1V10.5" stroke="#58585e"/><path d="M1233.1,1V5.6" stroke="#505056"/><path d="M1237.1,1V10.5" stroke="#58585e"/><path d="M1241.1,1V5.6" stroke="#505056"/><path d="M1245.1,1V14.5" stroke="#707076"/><path d="M1249.1,1V5.6" stroke="#505056"/><path d="M1253.1,1V10.5" stroke="#58585e"/><path d="M1257.0,1V5.6" stroke="#505056"/><path d="M1261.0,1V10.5" stroke="#58585e"/><path d="M1265.0,1V5.6" stroke="#505056"/><path d="M1269.0,1V10.5" stroke="#58585e"/><path d="M1273.0,1V5.6" stroke="#505056"/><path d="M1277.0,1V10.5" stroke="#58585e"/><path d="M1281.0,1V5.6" stroke="#505056"/><path d="M1285.0,1V10.5" stroke="#58585e"/><path d="M1289.0,1V5.6" stroke="#505056"/><path d="M1293.0,1V10.5" stroke="#58585e"/><path d="M1297.0,1V5.6" stroke="#505056"/><path d="M1301.0,1V10.5" stroke="#58585e"/><path d="M1305.0,1V5.6" stroke="#505056"/><path d="M1309.0,1V10.5" stroke="#58585e"/><path d="M1313.0,1V5.6" stroke="#505056"/><path d="M1317.0,1V10.5" stroke="#58585e"/><path d="M1321.0,1V5.6" stroke="#505056"/><path d="M1325.0,1V10.5" stroke="#58585e"/><path d="M1329.0,1V5.6" stroke="#505056"/><path d="M1333.0,1V10.5" stroke="#58585e"/><path d="M1337.0,1V5.6" stroke="#505056"/><path d="M1345.0,1V5.6" stroke="#505056"/><path d="M1349.0,1V10.5" stroke="#58585e"/><path d="M1352.9,1V5.6" stroke="#505056"/><path d="M1356.9,1V10.5" stroke="#58585e"/><path d="M1360.9,1V5.6" stroke="#505056"/><path d="M1364.9,1V10.5" stroke="#58585e"/><path d="M1368.9,1V5.6" stroke="#505056"/><path d="M1372.9,1V10.5" stroke="#58585e"/><path d="M1376.9,1V5.6" stroke="#505056"/><path d="M1380.9,1V10.5" stroke="#58585e"/><path d="M1384.9,1V5.6" stroke="#505056"/><path d="M1388.9,1V10.5" stroke="#58585e"/><path d="M1392.9,1V5.6" stroke="#505056"/><path d="M1396.9,1V10.5" stroke="#58585e"/><path d="M1400.9,1V5.6" stroke="#505056"/><path d="M1404.9,1V10.5" stroke="#58585e"/><path d="M1408.9,1V5.6" stroke="#505056"/><path d="M1412.9,1V10.5" stroke="#58585e"/><path d="M1416.9,1V5.6" stroke="#505056"/><path d="M1420.9,1V10.5" stroke="#58585e"/><path d="M1424.9,1V5.6" stroke="#505056"/><path d="M1428.9,1V10.5" stroke="#58585e"/><path d="M1432.9,1V5.6" stroke="#505056"/><path d="M1436.9,1V14.5" stroke="#707076"/><path d="M1440.9,1V5.6" stroke="#505056"/><path d="M1444.8,1V10.5" stroke="#58585e"/><path d="M1448.8,1V5.6" stroke="#505056"/><path d="M1452.8,1V10.5" stroke="#58585e"/><path d="M1456.8,1V5.6" stroke="#505056"/><path d="M1460.8,1V10.5" stroke="#58585e"/><path d="M1464.8,1V5.6" stroke="#505056"/><path d="M1468.8,1V10.5" stroke="#58585e"/><path d="M1472.8,1V5.6" stroke="#505056"/><path d="M1476.8,1V10.5" stroke="#58585e"/><path d="M1480.8,1V5.6" stroke="#505056"/><path d="M1484.8,1V10.5" stroke="#58585e"/><path d="M1488.8,1V5.6" stroke="#505056"/><path d="M1492.8,1V10.5" stroke="#58585e"/><path d="M1496.8,1V5.6" stroke="#505056"/><path d="M1500.8,1V10.5" stroke="#58585e"/><path d="M1504.8,1V5.6" stroke="#505056"/><path d="M1508.8,1V10.5" stroke="#58585e"/><path d="M1512.8,1V5.6" stroke="#505056"/><path d="M1516.8,1V10.5" stroke="#58585e"/><path d="M1520.8,1V5.6" stroke="#505056"/><path d="M1524.8,1V10.5" stroke="#58585e"/><path d="M1528.8,1V5.6" stroke="#505056"/><path d="M1536.7,1V5.6" stroke="#505056"/><path d="M1540.7,1V10.5" stroke="#58585e"/><path d="M1544.7,1V5.6" stroke="#505056"/><path d="M1548.7,1V10.5" stroke="#58585e"/><path d="M1552.7,1V5.6" stroke="#505056"/><path d="M1556.7,1V10.5" stroke="#58585e"/><path d="M1560.7,1V5.6" stroke="#505056"/><path d="M1564.7,1V10.5" stroke="#58585e"/><path d="M1568.7,1V5.6" stroke="#505056"/><path d="M1572.7,1V10.5" stroke="#58585e"/><path d="M1576.7,1V5.6" stroke="#505056"/><path d="M1580.7,1V10.5" stroke="#58585e"/><path d="M1584.7,1V5.6" stroke="#505056"/><path d="M1588.7,1V10.5" stroke="#58585e"/><path d="M1592.7,1V5.6" stroke="#505056"/><path d="M1596.7,1V10.5" stroke="#58585e"/><path d="M1600.7,1V5.6" stroke="#505056"/><path d="M1604.7,1V10.5" stroke="#58585e"/><path d="M1608.7,1V5.6" stroke="#505056"/><path d="M1612.7,1V10.5" stroke="#58585e"/><path d="M1616.7,1V5.6" stroke="#505056"/><path d="M1620.7,1V10.5" stroke="#58585e"/><path d="M1624.7,1V5.6" stroke="#505056"/><path d="M1628.6,1V14.5" stroke="#707076"/><path d="M1632.6,1V5.6" stroke="#505056"/><path d="M1636.6,1V10.5" stroke="#58585e"/><path d="M1640.6,1V5.6" stroke="#505056"/><path d="M1644.6,1V10.5" stroke="#58585e"/><path d="M1648.6,1V5.6" stroke="#505056"/><path d="M1652.6,1V10.5" stroke="#58585e"/><path d="M1656.6,1V5.6" stroke="#505056"/><path d="M1660.6,1V10.5" stroke="#58585e"/><path d="M1664.6,1V5.6" stroke="#505056"/><path d="M1668.6,1V10.5" stroke="#58585e"/><path d="M1672.6,1V5.6" stroke="#505056"/><path d="M1676.6,1V10.5" stroke="#58585e"/><path d="M1680.6,1V5.6" stroke="#505056"/><path d="M1684.6,1V10.5" stroke="#58585e"/><path d="M1688.6,1V5.6" stroke="#505056"/><path d="M1692.6,1V10.5" stroke="#58585e"/><path d="M1696.6,1V5.6" stroke="#505056"/><path d="M1700.6,1V10.5" stroke="#58585e"/><path d="M1704.6,1V5.6" stroke="#505056"/><path d="M1708.6,1V10.5" stroke="#58585e"/><path d="M1712.6,1V5.6" stroke="#505056"/><path d="M1716.6,1V10.5" stroke="#58585e"/><path d="M1720.6,1V5.6" stroke="#505056"/><path d="M1728.5,1V5.6" stroke="#505056"/><path d="M1732.5,1V10.5" stroke="#58585e"/><path d="M1736.5,1V5.6" stroke="#505056"/><path d="M1740.5,1V10.5" stroke="#58585e"/><path d="M1744.5,1V5.6" stroke="#505056"/><path d="M1748.5,1V10.5" stroke="#58585e"/><path d="M1752.5,1V5.6" stroke="#505056"/><path d="M1756.5,1V10.5" stroke="#58585e"/><path d="M1760.5,1V5.6" stroke="#505056"/><path d="M1764.5,1V10.5" stroke="#58585e"/><path d="M1768.5,1V5.6" stroke="#505056"/><path d="M1772.5,1V10.5" stroke="#58585e"/><path d="M1776.5,1V5.6" stroke="#505056"/><path d="M1780.5,1V10.5" stroke="#58585e"/><path d="M1784.5,1V5.6" stroke="#505056"/><path d="M1788.5,1V10.5" stroke="#58585e"/><path d="M1792.5,1V5.6" stroke="#505056"/><path d="M1796.5,1V10.5" stroke="#58585e"/><path d="M1800.5,1V5.6" stroke="#505056"/><path d="M1804.5,1V10.5" stroke="#58585e"/><path d="M1808.5,1V5.6" stroke="#505056"/><path d="M1812.5,1V10.5" stroke="#58585e"/><path d="M1816.4,1V5.6" stroke="#505056"/><path d="M1820.4,1V14.5" stroke="#707076"/><path d="M1824.4,1V5.6" stroke="#505056"/><path d="M1828.4,1V10.5" stroke="#58585e"/><path d="M1832.4,1V5.6" stroke="#505056"/><path d="M1836.4,1V10.5" stroke="#58585e"/><path d="M1840.4,1V5.6" stroke="#505056"/><path d="M1844.4,1V10.5" stroke="#58585e"/><path d="M1848.4,1V5.6" stroke="#505056"/><path d="M1852.4,1V10.5" stroke="#58585e"/><path d="M1856.4,1V5.6" stroke="#505056"/><path d="M1860.4,1V10.5" stroke="#58585e"/><path d="M1864.4,1V5.6" stroke="#505056"/><path d="M1868.4,1V10.5" stroke="#58585e"/><path d="M1872.4,1V5.6" stroke="#505056"/><path d="M1876.4,1V10.5" stroke="#58585e"/><path d="M1880.4,1V5.6" stroke="#505056"/><path d="M1884.4,1V10.5" stroke="#58585e"/><path d="M1888.4,1V5.6" stroke="#505056"/><path d="M1892.4,1V10.5" stroke="#58585e"/><path d="M1896.4,1V5.6" stroke="#505056"/><path d="M1900.4,1V10.5" stroke="#58585e"/><path d="M1904.4,1V5.6" stroke="#505056"/><path d="M1908.3,1V10.5" stroke="#58585e"/><path d="M1912.3,1V5.6" stroke="#505056"/><path d="M1920.3,1V5.6" stroke="#505056"/><path d="M1924.3,1V10.5" stroke="#58585e"/><path d="M1928.3,1V5.6" stroke="#505056"/><path d="M1932.3,1V10.5" stroke="#58585e"/><path d="M1936.3,1V5.6" stroke="#505056"/><path d="M1940.3,1V10.5" stroke="#58585e"/><path d="M1944.3,1V5.6" stroke="#505056"/><path d="M1948.3,1V10.5" stroke="#58585e"/><path d="M1952.3,1V5.6" stroke="#505056"/><path d="M1956.3,1V10.5" stroke="#58585e"/><path d="M1960.3,1V5.6" stroke="#505056"/><path d="M1964.3,1V10.5" stroke="#58585e"/><path d="M1968.3,1V5.6" stroke="#505056"/><path d="M1972.3,1V10.5" stroke="#58585e"/><path d="M1976.3,1V5.6" stroke="#505056"/><path d="M1980.3,1V10.5" stroke="#58585e"/><path d="M1984.3,1V5.6" stroke="#505056"/><path d="M1988.3,1V10.5" stroke="#58585e"/><path d="M1992.3,1V5.6" stroke="#505056"/><path d="M1996.3,1V10.5" stroke="#58585e"/><path d="M2000.2,1V5.6" stroke="#505056"/><path d="M2004.2,1V10.5" stroke="#58585e"/><path d="M2008.2,1V5.6" stroke="#505056"/><path d="M2012.2,1V14.5" stroke="#707076"/><path d="M2016.2,1V5.6" stroke="#505056"/><path d="M2020.2,1V10.5" stroke="#58585e"/><path d="M2024.2,1V5.6" stroke="#505056"/><path d="M2028.2,1V10.5" stroke="#58585e"/><path d="M2032.2,1V5.6" stroke="#505056"/><path d="M2036.2,1V10.5" stroke="#58585e"/><path d="M2040.2,1V5.6" stroke="#505056"/><path d="M2044.2,1V10.5" stroke="#58585e"/><path d="M2048.2,1V5.6" stroke="#505056"/><path d="M2052.2,1V10.5" stroke="#58585e"/><path d="M2056.2,1V5.6" stroke="#505056"/><path d="M2060.2,1V10.5" stroke="#58585e"/><path d="M2064.2,1V5.6" stroke="#505056"/><path d="M2068.2,1V10.5" stroke="#58585e"/><path d="M2072.2,1V5.6" stroke="#505056"/><path d="M2076.2,1V10.5" stroke="#58585e"/><path d="M2080.2,1V5.6" stroke="#505056"/><path d="M2084.2,1V10.5" stroke="#58585e"/><path d="M2088.2,1V5.6" stroke="#505056"/><path d="M2092.2,1V10.5" stroke="#58585e"/><path d="M2096.1,1V5.6" stroke="#505056"/><path d="M2100.1,1V10.5" stroke="#58585e"/><path d="M2104.1,1V5.6" stroke="#505056"/><path d="M2112.1,1V5.6" stroke="#505056"/><path d="M2116.1,1V10.5" stroke="#58585e"/><path d="M2120.1,1V5.6" stroke="#505056"/><path d="M2124.1,1V10.5" stroke="#58585e"/><path d="M2128.1,1V5.6" stroke="#505056"/><path d="M2132.1,1V10.5" stroke="#58585e"/><path d="M2136.1,1V5.6" stroke="#505056"/><path d="M2140.1,1V10.5" stroke="#58585e"/><path d="M2144.1,1V5.6" stroke="#505056"/><path d="M2148.1,1V10.5" stroke="#58585e"/><path d="M2152.1,1V5.6" stroke="#505056"/><path d="M2156.1,1V10.5" stroke="#58585e"/><path d="M2160.1,1V5.6" stroke="#505056"/><path d="M2164.1,1V10.5" stroke="#58585e"/><path d="M2168.1,1V5.6" stroke="#505056"/><path d="M2172.1,1V10.5" stroke="#58585e"/><path d="M2176.1,1V5.6" stroke="#505056"/><path d="M2180.1,1V10.5" stroke="#58585e"/><path d="M0.7,1V26" stroke="url(#mj)" stroke-width="1.4"/><path d="M192.4,1V26" stroke="url(#mj)" stroke-width="1.4"/><path d="M384.0,1V26" stroke="url(#mj)" stroke-width="1.4"/><path d="M575.7,1V26" stroke="url(#mj)" stroke-width="1.4"/><path d="M767.4,1V26" stroke="url(#mj)" stroke-width="1.4"/><path d="M959.0,1V26" stroke="url(#mj)" stroke-width="1.4"/><path d="M1150.7,1V26" stroke="url(#mj)" stroke-width="1.4"/><path d="M1342.4,1V26" stroke="url(#mj)" stroke-width="1.4"/><path d="M1534.1,1V26" stroke="url(#mj)" stroke-width="1.4"/><path d="M1725.7,1V26" stroke="url(#mj)" stroke-width="1.4"/><path d="M1917.4,1V26" stroke="url(#mj)" stroke-width="1.4"/><path d="M2109.1,1V26" stroke="url(#mj)" stroke-width="1.4"/></g></svg><span style="left:6.5px">01:00:00:00</span><span style="left:198.1px">01:01:00:00</span><span style="left:389.7px">01:02:00:00</span><span style="left:581.4px">01:03:00:00</span><span style="left:773.0px">01:04:00:00</span><span style="left:964.6px">01:05:00:00</span><span style="left:1156.2px">01:06:00:00</span><span style="left:1347.8px">01:07:00:00</span><span style="left:1539.5px">01:08:00:00</span><span style="left:1731.1px">01:09:00:00</span><span style="left:1922.7px">01:10:00:00</span><span style="left:2114.3px">01:11:00:00</span></div><div id="tl"><i class="gv" style="left:450px"></i><i class="gv" style="left:642px"></i><i class="gv" style="left:833px"></i><i class="gv" style="left:1025px"></i><i class="gv" style="left:1216px"></i><i class="gv" style="left:1408px"></i><i class="gv" style="left:1600px"></i><i class="gv" style="left:1791px"></i><i class="gv" style="left:1983px"></i><i class="gv" style="left:2174px"></i><i class="gv" style="left:2366px"></i><i class="gh" style="top:247px"></i><i class="gh" style="top:300px"></i><i class="gh" style="top:353px"></i><i class="gh" style="top:406px"></i><i class="gh" style="top:459px"></i><i class="gh" style="top:512px"></i><i class="gh" style="top:565px"></i><i class="gh" style="top:618px"></i><i class="gh" style="top:671px"></i><i class="gh" style="top:724px"></i><i class="gh" style="top:837px"></i><i class="gh" style="top:895px"></i><i class="gh" style="top:953px"></i><i class="gh" style="top:1011px"></i><i class="gh" style="top:1069px"></i><i class="gh" style="top:1127px"></i><i class="gh" style="top:1185px"></i><i class="gh" style="top:1243px"></i><i class="gh" style="top:1301px"></i><i class="gh" style="top:1359px"></i><div class="c v blue" style="left:1856.5px;top:249px;width:31.8px"><i class="ln"></i><span class="lb">Ad...</span></div><div class="c v blue" style="left:1807px;top:302px;width:81.3px"><i class="ln"></i><span class="lb wi"><svg class="ic xf"><use href="#sf"/></svg>Adjust...</span></div><div class="c v blue" style="left:905px;top:355px;width:102.6px"><i class="ln"></i><span class="lb wi"><svg class="ic xf"><use href="#sf"/></svg>Adjustment ...</span></div><div class="c v blue" style="left:1807px;top:355px;width:81.3px"><i class="ln"></i><span class="lb wi"><svg class="ic xf"><use href="#sf"/></svg>Adjust...</span></div><div class="c v beige" style="left:990px;top:408px;width:17.6px"><i class="ln"></i></div><div class="c v lav" style="left:1856.5px;top:408px;width:31.8px"><i class="ln"></i><span class="lb">So...</span></div><div class="c v beige" style="left:990px;top:461px;width:17.6px"><i class="ln"></i><svg class="fd" width="17.6" height="25"><polygon points="0,0 3,0 0,25"/></svg></div><div class="c v lav" style="left:1856.5px;top:461px;width:31.8px"><i class="ln"></i><span class="lb">So...</span></div><div class="c v blue" style="left:318px;top:514px;width:265px"><i class="ln"></i><svg class="fd" width="265" height="25"><polygon points="0,0 5,0 0,25"/></svg><span class="lb wi"><svg class="ic xk"><use href="#sk"/></svg><svg class="ic xf"><use href="#sf"/></svg>Adjustment Clip</span></div><div class="c v blue" style="left:659px;top:514px;width:17.4px"><i class="ln"></i></div><div class="c v beige sq" style="left:904px;top:514px;width:10px"></div><div class="c v beige sq" style="left:915px;top:514px;width:10.5px"></div><div class="c v beige sq" style="left:926.5px;top:514px;width:13.9px"></div><div class="c v beige sq" style="left:941.2px;top:514px;width:1.2px"></div><div class="c v beige sq" style="left:943.3px;top:514px;width:3px"></div><div class="c v beige" style="left:947.2px;top:514px;width:41.3px"><i class="ln"></i><span class="lb">Text...</span></div><div class="c v pink" style="left:998.2px;top:514px;width:9.8px"></div><div class="c v blue" style="left:1436.7px;top:514px;width:23.8px"><i class="ln"></i></div><div class="c v blue" style="left:1509.6px;top:514px;width:38.8px"><i class="ln"></i><span class="lb">Adj...</span></div><div class="c v pink thin" style="left:1654.5px;top:514px;width:2.9px"></div><div class="c v lav" style="left:1856.5px;top:514px;width:31.8px"><i class="ln"></i><span class="lb">So...</span></div><div class="c v blue" style="left:2306.5px;top:514px;width:24px"><i class="ln"></i></div><div class="c v blue" style="left:264px;top:567px;width:34px"><i class="ln"></i><span class="lb">Adj...</span></div><div class="c v gold" style="left:301.5px;top:567px;width:311px"><i class="ln"></i><i class="cmp"></i><span class="lb wi"><svg class="ic xc"><use href="#sc"/></svg><svg class="ic xk"><use href="#sk"/></svg>2 - Flower Burn Intro - Compound</span></div><div class="c v blue" style="left:644px;top:567px;width:32.4px"><i class="ln"></i><span class="lb">Ad...</span></div><div class="c v blue" style="left:716px;top:567px;width:21.5px"><i class="ln"></i></div><div class="c v lav" style="left:904.5px;top:567px;width:103.1px"><i class="ln"></i><span class="lb">Solid Color</span></div><div class="c v beige" style="left:1436.7px;top:567px;width:23.8px"><i class="ln"></i></div><div class="c v beige" style="left:1509.6px;top:567px;width:23.8px"><i class="ln"></i></div><div class="c v pink thin" style="left:1590.5px;top:567px;width:4px"></div><div class="c v blue" style="left:1656.8px;top:567px;width:69.4px"><i class="ln"></i><span class="lb wi"><svg class="ic xf"><use href="#sf"/></svg>Adjus...</span></div><div class="c v blue" style="left:1748.6px;top:567px;width:36.7px"><i class="ln"></i><span class="lb">Adj...</span></div><div class="c v lav" style="left:1856.5px;top:567px;width:31.8px"><i class="ln"></i><span class="lb">So...</span></div><div class="c v beige" style="left:2306.5px;top:567px;width:24px"><i class="ln"></i></div><div class="c v beige" style="left:264px;top:620px;width:34px"><i class="ln"></i><svg class="fd" width="34" height="25"><polygon points="0,0 2,0 0,25"/></svg><span class="lb">Te...</span></div><div class="c v dteal" style="left:360px;top:620px;width:17.5px"><i class="ln"></i><i class="th t-suit"></i></div><div class="c v dteal" style="left:522.6px;top:620px;width:23.9px"><i class="ln"></i><i class="th t-man2"></i></div><div class="c v pink thin" style="left:613px;top:620px;width:3.6px"></div><div class="c v pink thin" style="left:660.3px;top:620px;width:2.4px"></div><div class="c v pink thin" style="left:675px;top:620px;width:6px"></div><div class="c v blue" style="left:705.6px;top:620px;width:31.9px"><i class="ln"></i><span class="lb">Ad...</span></div><div class="c v blue" style="left:904.5px;top:620px;width:103.1px"><i class="ln"></i><span class="lb wi"><svg class="ic xf"><use href="#sf"/></svg>Adjustment ...</span></div><div class="c v beige" style="left:1121px;top:620px;width:14.3px"></div><div class="c v beige" style="left:1261.5px;top:620px;width:20.9px"><i class="ln"></i><svg class="fd" width="20.9" height="25"><polygon points="0,0 2,0 0,25"/></svg></div><div class="c v lav" style="left:1436.7px;top:620px;width:23.8px"><i class="ln"></i></div><div class="c v lav" style="left:1509.6px;top:620px;width:23.8px"><i class="ln"></i></div><div class="c v blue" style="left:1554.9px;top:620px;width:71.7px"><i class="ln"></i><span class="lb wi"><svg class="ic xf"><use href="#sf"/></svg>Adjus...</span></div><div class="c v dteal" style="left:1656.8px;top:620px;width:17.2px"><i class="ln"></i><i class="th t-bw"></i></div><div class="c v dteal" style="left:1675.6px;top:620px;width:14px"><i class="ln"></i><i class="th in1"></i></div><div class="c v dteal sq" style="left:1691.2px;top:620px;width:4.3px"></div><div class="c v dteal sq" style="left:1696.5px;top:620px;width:4.9px"></div><div class="c v dteal" style="left:1702.7px;top:620px;width:8px"></div><div class="c v dteal" style="left:1712px;top:620px;width:14.2px"><i class="ln"></i><i class="th in1"></i></div><div class="c v dteal" style="left:1748.6px;top:620px;width:20.1px"><i class="ln"></i><i class="th t-paper"></i></div><div class="c v dteal" style="left:1770.7px;top:620px;width:14.6px"><i class="ln"></i><i class="th in1"></i></div><div class="c v lav" style="left:1856.5px;top:620px;width:31.8px"><i class="ln"></i><span class="lb">So...</span></div><div class="c v pink thin" style="left:2210px;top:620px;width:3.5px"></div><div class="c v lav" style="left:2306.5px;top:620px;width:24px"><i class="ln"></i></div><div class="c v pink" style="left:264px;top:673px;width:34px"><i class="ln"></i><i class="th t-logo"></i><span class="lb">Lo...</span></div><div class="c v pink" style="left:360px;top:673px;width:17.5px"><i class="ln"></i><i class="th t-parch"></i></div><div class="c v pink" style="left:522.6px;top:673px;width:23.9px"><i class="ln"></i><i class="th t-parch"></i></div><div class="c v blue" style="left:613.9px;top:673px;width:28.5px"><i class="ln"></i><span class="lb">A...</span></div><div class="c v pink sq" style="left:658.4px;top:673px;width:6.2px"></div><div class="c v pink" style="left:665.2px;top:673px;width:11.2px"><i class="th in1"></i></div><div class="c v blue" style="left:705.6px;top:673px;width:31.9px"><i class="ln"></i><i class="ds"></i><span class="lb">Ad...</span></div><div class="c v blue" style="left:739px;top:673px;width:68.2px"><i class="ln"></i><span class="lb wi"><svg class="ic xf"><use href="#sf"/></svg>Adju...</span></div><div class="c v blue sq" style="left:904px;top:673px;width:10px"></div><div class="c v blue sq" style="left:915px;top:673px;width:10.5px"></div><div class="c v blue sq" style="left:926.5px;top:673px;width:8.9px"></div><div class="c v blue sq" style="left:936.4px;top:673px;width:4px"></div><div class="c v blue sq" style="left:941.2px;top:673px;width:1.2px"></div><div class="c v blue sq" style="left:943.3px;top:673px;width:3px"></div><div class="c v blue" style="left:947.2px;top:673px;width:60.4px"><i class="ln"></i><span class="lb wi"><svg class="ic xk"><use href="#sk"/></svg>Adj...</span></div><div class="c v beige" style="left:1121px;top:673px;width:14.3px"></div><div class="c v lime" style="left:1136.3px;top:673px;width:27px"><i class="ln"></i><i class="th t-int"></i></div><div class="c v beige" style="left:1261.5px;top:673px;width:20.9px"><i class="ln"></i><svg class="fd" width="20.9" height="25"><polygon points="0,0 2,0 0,25"/></svg></div><div class="c v dblue" style="left:1301px;top:673px;width:28px"><i class="ln"></i><i class="th t-int2"></i><span class="lb cx">C...</span></div><div class="c v dteal" style="left:1330.9px;top:673px;width:14.1px"><i class="ln"></i><i class="th in1"></i></div><div class="c v dteal" style="left:1346.9px;top:673px;width:15.1px"><i class="ln"></i><i class="th in1"></i></div><div class="c v teal" style="left:1363.5px;top:673px;width:9.3px"></div><div class="c v teal" style="left:1374.2px;top:673px;width:19px"><i class="ln"></i><i class="th t-leaf"></i></div><div class="c v blue" style="left:1436.7px;top:673px;width:23.8px"><i class="ln"></i></div><div class="c v blue" style="left:1509.6px;top:673px;width:23.8px"><i class="ln"></i></div><div class="c v pink" style="left:1554.9px;top:673px;width:36.1px"><i class="ln"></i><i class="th t-map"></i><span class="lb">eco...</span></div><div class="c v dteal sq" style="left:1592.4px;top:673px;width:2.9px"></div><div class="c v dteal" style="left:1596.9px;top:673px;width:17.9px"><i class="ln"></i><i class="th t-flower"></i></div><div class="c v dteal" style="left:1616.4px;top:673px;width:10.2px"></div><div class="c v blue" style="left:1628.1px;top:673px;width:26.8px"><i class="ln"></i></div><div class="c v pink" style="left:1656.8px;top:673px;width:69.4px"><i class="ln"></i><i class="th t-parch"></i><span class="lb wi"><svg class="ic xi"><use href="#si"/></svg>Old-V...</span></div><div class="c v dblue" style="left:1728px;top:673px;width:18.7px"><i class="ln"></i><i class="th t-dark"></i></div><div class="c v pink" style="left:1748.6px;top:673px;width:36.7px"><i class="ln"></i><i class="th t-parch"></i><span class="lb">Old...</span></div><div class="c v pink" style="left:1806.8px;top:673px;width:31.9px"><i class="ln"></i><i class="th t-doc"></i><span class="lb">11 ...</span></div><div class="c v pink" style="left:1840.6px;top:673px;width:47.7px"><i class="ln"></i><i class="th t-white"></i><span class="lb">12 - S...</span></div><div class="c v blue" style="left:1889.8px;top:673px;width:63.1px"><i class="ln"></i><span class="lb wi"><svg class="ic xf"><use href="#sf"/></svg>Adju...</span></div><div class="c v dblue" style="left:1983.6px;top:673px;width:33.2px"><i class="ln"></i><i class="th t-int2"></i><span class="lb cx">C0...</span></div><div class="c v dblue" style="left:2018.7px;top:673px;width:10.2px"><i class="ln"></i><i class="th in1"></i></div><div class="c v blue" style="left:2030.5px;top:673px;width:52.7px"><i class="ln"></i><span class="lb wi"><svg class="ic xf"><use href="#sf"/></svg>A...</span></div><div class="c v blue" style="left:2147.6px;top:673px;width:19px"><i class="ln"></i><i class="th t-hands"></i></div><div class="c v dblue" style="left:2168.5px;top:673px;width:42.2px"><i class="ln"></i><i class="th t-int2"></i><span class="lb cx">C090...</span></div><div class="c v blue" style="left:2212.7px;top:673px;width:15px"><i class="ln"></i><i class="ds"></i></div><div class="c v blue" style="left:2229.9px;top:673px;width:52.1px"><i class="ln"></i><span class="lb wi"><svg class="ic xf"><use href="#sf"/></svg>A...</span></div><div class="c v blue" style="left:2283.6px;top:673px;width:21.5px"><i class="ln"></i></div><div class="c v blue" style="left:2306.5px;top:673px;width:24px"><i class="ln"></i></div><div class="c v lav" style="left:264px;top:726px;width:34px"><i class="ln"></i><svg class="fd" width="34" height="25"><polygon points="0,0 2,0 0,25"/></svg><span class="lb">Sol...</span></div><div class="c v teal" style="left:317.6px;top:726px;width:25.8px"><i class="ln"></i><i class="th t-news"></i></div><div class="c v teal" style="left:344.5px;top:726px;width:8.5px"></div><div class="c v dteal sq" style="left:353.7px;top:726px;width:5.3px"></div><div class="c v lav" style="left:360px;top:726px;width:17.5px"><i class="ln"></i></div><div class="c v teal" style="left:379px;top:726px;width:21px"><i class="ln"></i><i class="th t-man1"></i></div><div class="c v teal" style="left:402px;top:726px;width:25px"><i class="ln"></i><i class="th t-hall"></i></div><div class="c v teal" style="left:429px;top:726px;width:38px"><i class="ln"></i><i class="th t-corr"></i><span class="lb">5 - ...</span></div><div class="c v teal" style="left:469px;top:726px;width:21.4px"><i class="ln"></i><i class="th t-podium"></i></div><div class="c v dteal" style="left:492px;top:726px;width:29.3px"><i class="ln"></i><i class="th t-news2"></i><span class="lb">7 -...</span></div><div class="c v lav" style="left:522.6px;top:726px;width:23.9px"><i class="ln"></i></div><div class="c v teal" style="left:548px;top:726px;width:34.6px"><i class="ln"></i><i class="th t-bluestage"></i><span class="lb">9 - ...</span></div><div class="c v bpink" style="left:614px;top:726px;width:28.4px"><i class="ln"></i><i class="th t-web"></i><span class="lb">1 ...</span></div><div class="c v dteal" style="left:644.3px;top:726px;width:12.5px"><i class="ln"></i><i class="th in1"></i></div><div class="c v lav" style="left:658.8px;top:726px;width:17.6px"><i class="ln"></i></div><div class="c v gold" style="left:678px;top:726px;width:26.3px"><i class="ln"></i><i class="th t-darkfl"></i></div><div class="c v pink" style="left:705.6px;top:726px;width:31.9px"><i class="ln"></i><i class="th t-cmap"></i><span class="lb">Ri...</span></div><div class="c v dteal sq" style="left:739px;top:726px;width:4.4px"></div><div class="c v dteal" style="left:744.7px;top:726px;width:11.8px"><i class="ln"></i><i class="th in1"></i></div><div class="c v dteal" style="left:758px;top:726px;width:8.8px"></div><div class="c v dteal sq" style="left:767.8px;top:726px;width:4.8px"></div><div class="c v dteal sq" style="left:773.6px;top:726px;width:6.9px"></div><div class="c v pink" style="left:781.8px;top:726px;width:25.4px"><i class="ln"></i><i class="th t-cream"></i></div><div class="c v gold" style="left:808.8px;top:726px;width:71.9px"><i class="ln"></i><i class="th t-darkfl2"></i><span class="lb wi cx"><span class="hq"><b>HQ</b></span>DSCF...</span></div><div class="c v dteal" style="left:903.5px;top:726px;width:40px"></div><div class="c v dteal" style="left:944.5px;top:726px;width:44px"></div><div class="c v gold" style="left:989px;top:726px;width:18.6px"><i class="ln"></i><i class="th in2"></i></div><div class="c v orange" style="left:1020.7px;top:726px;width:18.6px"><i class="ln"></i><i class="th t-whiteb"></i></div><div class="c v orange" style="left:1040.8px;top:726px;width:16.4px"><i class="ln"></i><i class="th in1"></i></div><div class="c v orange" style="left:1058.2px;top:726px;width:9.4px"></div><div class="c v sgreen" style="left:1069px;top:726px;width:16px"><i class="ln"></i><i class="th in1"></i></div><div class="c v olive" style="left:1087px;top:726px;width:33px"><i class="ln"></i><i class="th t-dark2"></i><span class="lb cx">C0...</span></div><div class="c v sgreen" style="left:1121.7px;top:726px;width:41.6px"><i class="ln"></i><i class="th t-int3"></i><span class="lb cx">DSC...</span></div><div class="c v orange" style="left:1164.6px;top:726px;width:13.4px"><i class="ln"></i><i class="th in1"></i></div><div class="c v orange sq" style="left:1179.3px;top:726px;width:6.4px"></div><div class="c v blue sq" style="left:1186.7px;top:726px;width:6.8px"></div><div class="c v sblue" style="left:1197.5px;top:726px;width:7.8px"><i class="ln"></i><i class="th in1"></i></div><div class="c v sblue" style="left:1206.8px;top:726px;width:11.2px"><i class="ln"></i><i class="th in1"></i></div><div class="c v sblue" style="left:1220px;top:726px;width:13px"><i class="ln"></i><i class="th in1"></i></div><div class="c v sblue" style="left:1234.6px;top:726px;width:25.4px"><i class="ln"></i><i class="th t-int"></i></div><div class="c v sblue" style="left:1261.9px;top:726px;width:111.7px"><i class="ln"></i><i class="th t-int"></i><span class="lb wi cx"><span class="hq"><b>HQ</b></span><svg class="ic xl"><use href="#sl"/></svg>DSCF002...</span></div><div class="c v sblue" style="left:1375.6px;top:726px;width:59.2px"><i class="ln"></i><i class="th t-int"></i><span class="lb wi cx"><span class="hq"><b>HQ</b></span>DS...</span></div><div class="c v dteal" style="left:1436.7px;top:726px;width:23.4px"><i class="ln"></i><i class="th t-crowd"></i></div><div class="c v sgreen" style="left:1461.7px;top:726px;width:46.3px"><i class="ln"></i><i class="th t-int3"></i><span class="lb cx">DSCF...</span></div><div class="c v teal" style="left:1509.6px;top:726px;width:38.8px"><i class="ln"></i><i class="th t-fire"></i><span class="lb">1 - ...</span></div><div class="c v sblue" style="left:1550px;top:726px;width:64.8px"><i class="ln"></i><i class="th t-int"></i><span class="lb wi cx"><svg class="ic xl"><use href="#sl"/></svg>DSC...</span></div><div class="c v sblue" style="left:1616.4px;top:726px;width:10.2px"></div><div class="c v teal" style="left:1628.1px;top:726px;width:26.8px"><i class="ln"></i><i class="th t-bark"></i></div><div class="c v lav" style="left:1656.8px;top:726px;width:69.4px"><i class="ln"></i><span class="lb">Solid Color</span></div><div class="c v sblue" style="left:1728px;top:726px;width:18.7px"><i class="ln"></i><i class="th t-int"></i></div><div class="c v lav" style="left:1748.6px;top:726px;width:36.7px"><i class="ln"></i><span class="lb">Soli...</span></div><div class="c v sblue" style="left:1786.9px;top:726px;width:50.2px"><i class="ln"></i><i class="th t-int"></i><span class="lb cx">DSCF0...</span></div><div class="c v lav thin" style="left:1840px;top:726px;width:2.4px"></div><div class="c v sblue" style="left:1843.9px;top:726px;width:41.4px"><i class="ln"></i><i class="th t-int"></i><span class="lb cx">DSC...</span></div><div class="c v dteal" style="left:1889.8px;top:726px;width:63.1px"><i class="ln"></i><i class="th t-congress"></i><span class="lb wi"><svg class="ic xl"><use href="#sl"/></svg>15 - ...</span></div><div class="c v sblue" style="left:1954.7px;top:726px;width:26.9px"><i class="ln"></i><i class="th t-int"></i></div><div class="c v sblue" style="left:1983.6px;top:726px;width:45.3px"><i class="ln"></i><i class="th t-int"></i><span class="lb cx">DSCF...</span></div><div class="c v teal sq" style="left:2030px;top:726px;width:5.3px"></div><div class="c v teal sq" style="left:2036.3px;top:726px;width:4.9px"></div><div class="c v teal sq" style="left:2042.2px;top:726px;width:4.8px"></div><div class="c v teal" style="left:2048.6px;top:726px;width:12.1px"><i class="ln"></i><i class="th in1"></i></div><div class="c v teal" style="left:2062.7px;top:726px;width:20.5px"><i class="ln"></i><i class="th t-lblue"></i></div><div class="c v sblue" style="left:2084.8px;top:726px;width:60.9px"><i class="ln"></i><i class="th t-int"></i><span class="lb wi cx"><svg class="ic xl"><use href="#sl"/></svg>DSC...</span></div><div class="c v sblue" style="left:2147.6px;top:726px;width:63.1px"><i class="ln"></i><i class="th t-int"></i><span class="lb wi cx"><span class="hq"><b>HQ</b></span>DSC...</span></div><div class="c v pink" style="left:2212.7px;top:726px;width:15px"><i class="ln"></i><i class="th in1"></i><i class="ds"></i></div><div class="c v pink" style="left:2229.9px;top:726px;width:52.1px"><i class="ln"></i><i class="th in1"></i><span class="lb wi"><svg class="ic xc"><use href="#sc"/></svg>3 ...</span></div><div class="c v dteal" style="left:2283.6px;top:726px;width:21.5px"><i class="ln"></i><i class="th t-tan"></i></div><div class="c v dteal" style="left:2306.5px;top:726px;width:24px"><i class="ln"></i><i class="th t-crowd"></i></div><i class="tlp" style="left:343.7px;top:780px;width:1.6px"></i><i class="tlp" style="left:357.8px;top:780px;width:1.6px"></i><i class="tlp" style="left:377.7px;top:780px;width:1.6px"></i><i class="tlp" style="left:399.8px;top:780px;width:1.6px"></i><i class="tld" style="left:427px;top:780px;width:2px"></i><i class="tlp" style="left:466.8px;top:780px;width:1.6px"></i><i class="tld" style="left:489.8px;top:780px;width:2px"></i><i class="tld" style="left:521px;top:780px;width:2px"></i><i class="tlp" style="left:546.8px;top:780px;width:1.6px"></i><i class="tld" style="left:611.9px;top:780px;width:2px"></i><i class="tlp" style="left:657.5px;top:780px;width:6.5px"></i><i class="tld" style="left:677px;top:780px;width:2px"></i><i class="tlp" style="left:737.1px;top:780px;width:1.6px"></i><i class="tlp" style="left:742.9px;top:780px;width:1.6px"></i><i class="tlp" style="left:756px;top:780px;width:1.6px"></i><i class="tlp" style="left:766.4px;top:780px;width:1.6px"></i><i class="tlp" style="left:772.8px;top:780px;width:1.6px"></i><i class="tlp" style="left:780.6px;top:780px;width:1.6px"></i><i class="tlp" style="left:1591.3px;top:780px;width:2.4px"></i><i class="tld" style="left:1654.8px;top:838px;width:2.4px"></i><i class="tlp" style="left:1674.6px;top:838px;width:1.6px"></i><i class="tlp" style="left:1689.4px;top:838px;width:1.6px"></i><i class="tlp" style="left:1695.3px;top:838px;width:1.6px"></i><i class="tlp" style="left:1700.6px;top:838px;width:1.6px"></i><i class="tlp" style="left:1710.7px;top:838px;width:1.6px"></i><i class="tlp" style="left:2210.9px;top:838px;width:2.6px"></i><i class="tlp" style="left:2228.2px;top:838px;width:2.2px"></i><i class="tlp" style="left:1695.3px;top:896px;width:1.6px"></i><i class="tlp" style="left:1700.6px;top:896px;width:1.6px"></i><i class="tlp" style="left:1710.7px;top:896px;width:1.6px"></i><i class="tlp" style="left:1078.2px;top:954px;width:2.6px"></i><div class="c a apurp" style="left:259px;top:781px;width:55.6px"><i class="ln"></i><svg class="fd" width="55.6" height="30"><polygon points="25.6,0 55.6,0 55.6,30"/></svg><svg class="wv" width="55.6" height="30"><path d="M0,11.5h1v-3h1v5h1v-5h1v0.5h1v4.5h1v-5h1v-1.5h1v6.5h1v-6.5h1v4.5h1v2h1v-5.5h1v5.5h43V14.5h-43v5.5h-1v-5.5h-1v2h-1v5.5h-1v-7.5h-1v6h-1v-0.5h-1v-5.5h-1v3.5h-1v1.5h-1v-5h-1v5.5h-1v-3.5h-1Z" fill="#f1e6f2"/><path d="M0,18.5H55.6" stroke="rgba(255,255,255,.28)" stroke-width="1" fill="none"/></svg><span class="lb">Vhs ins...</span></div><div class="c a apurp" style="left:1016.8px;top:781px;width:40px"><i class="ln"></i><svg class="wv" width="40" height="30"><path d="M0,13.5h2v-1h2v1h6v-1h1v1h10v-1h1v1h16v-1h1v1h1V14.5h-1v1h-1v-1h-16v1h-1v-1h-10v1h-1v-1h-6v1h-2v-1h-2Z" fill="#f1e6f2"/><path d="M0,18.5H40" stroke="rgba(255,255,255,.28)" stroke-width="1" fill="none"/></svg><i class="ds"></i><span class="lb">Win...</span></div><div class="c a apurp" style="left:1058.8px;top:781px;width:10.7px"><i class="ln"></i></div><div class="c a lime" style="left:1082.6px;top:781px;width:26px"><i class="ln"></i><svg class="wv" width="26" height="30"><path d="M0,13.5h3v-1h2v1h7v-1h1v1h13V14.5h-13v1h-1v-1h-7v1h-1v-0.5h-1v-0.5h-3Z" fill="#d8efc0"/><path d="M0,18.5H26" stroke="rgba(255,255,255,.28)" stroke-width="1" fill="none"/></svg></div><div class="c a sgreen" style="left:1112.9px;top:781px;width:50.4px"><i class="ln"></i><svg class="wv" width="50.4" height="30"><path d="M0,12.5h3v-0.5h1v0.5h1v-1h1v-1h2v-0.5h1v1h1v1h1v-0.5h1v-0.5h2v1h3v-2.5h2v-5.5h1v5h1v-1h1v1.5h1v-3h1v4h1v0.5h1v-2h1v0.5h1v2.5h1v-2h1v1h1v-1h1v-0.5h1v-4.5h1v3.5h1v2.5h1v-5h1v4h1v-4.5h1v4h2v1h1v-1h1v-3h1v1h3v1.5h1v-2.5h1v3h1V19h-1v3.5h-1v-3h-1v1.5h-1v-1h-1v1.5h-1v1h-1v-3.5h-1v-2h-1v2h-1v-1h-1v6h-1v-5.5h-1v4h-1v-5.5h-1v1.5h-1v5.5h-1v-6h-2v-1h-1v1.5h-1v-2.5h-1v3h-2v-2.5h-1v1.5h-1v3.5h-1v-2.5h-1v1.5h-1v-1h-1v6h-1v-6.5h-1v-0.5h-1v-2h-1v-0.5h-2v1h-1v-0.5h-1v0.5h-1v-1.5h-1v1.5h-1v1h-1v-0.5h-2v-1h-1v-1h-2v-0.5h-1v0.5h-2Z" fill="#e3f6ea"/></svg><span class="lb wi cx"><svg class="ic xl"><use href="#sl"/></svg>D...</span></div><div class="c a sblue" style="left:1244.3px;top:781px;width:129.9px"><i class="ln"></i><svg class="wv" width="129.9" height="30"><path d="M0,11.5h1v-1.5h1v-2h1v0.5h1v1.5h1v1h1v-1.5h2v-3.5h1v2h2v2h1v1.5h1v-3.5h1v2.5h1v-3.5h1v2.5h1v-1.5h1v2h1v-0.5h1v-1h1v-0.5h1v3h1v-2h1v2.5h1v-3h1v-3h1v3h1v1h2v-1h1v2h1v0.5h2v1h2v0.5h1v-2h1v-1h1v1h1v-0.5h1v1h1v2h1v-0.5h3v-3h1v1h2v2h1v-1h1v0.5h1v0.5h1v-3h1v-3.5h1v3h1v-3h1v3.5h3v-3h1v-1h1v-0.5h1v5h1v-2.5h1v-0.5h1v1.5h1v-1h1v0.5h1v1h1v4h5v-2h2v1h1v-1h1v0.5h1v0.5h1v-3h1v1.5h1v-2h2v-1.5h1v2h1v1h1v1h1v-1.5h2v1h1v-1.5h1v1h1v-1.5h1v0.5h1v1h1v2h1v0.5h1v-0.5h2v0.5h1v-4.5h1v-1h3v1.5h1v-2h1v3h1v-2h1v0.5h1v-1.5h2v2h1v4.5h1v-0.5h3v-0.5h2v1h1v-5h1v1.5h1v2.5h1v0.5h3v-0.5h1v1h1v-0.5h1V15.5h-1v-0.5h-1v1h-1v-0.5h-3v0.5h-1v2.5h-1v2h-1v-5.5h-1v0.5h-1v0.5h-2v-1h-1v0.5h-1v-0.5h-1v4.5h-1v2.5h-1v-0.5h-1v-1h-1v-1h-1v-1.5h-1v2.5h-1v-0.5h-1v2h-1v-1h-1v0.5h-1v-2h-1v-4h-1v0.5h-2v-0.5h-1v0.5h-1v2h-1v1.5h-1v0.5h-1v-1.5h-1v1h-1v-2h-1v1h-2v-1.5h-2v1.5h-1v3.5h-1v-2.5h-1v-0.5h-1v-1.5h-1v2h-1v-3.5h-1v0.5h-1v1h-1v-1.5h-1v1h-2v-2h-5v5h-2v-0.5h-1v0.5h-1v1.5h-1v-2h-1v-0.5h-1v3.5h-1v-1h-1v1h-1v-4h-2v0.5h-1v4h-1v-3.5h-1v3.5h-1v-4h-1v-3.5h-1v0.5h-1v1h-1v-1h-1v1.5h-2v1h-1v-3h-3v-0.5h-1v1.5h-1v2h-1v-0.5h-1v1h-1v-2h-1v-1.5h-1v0.5h-2v1h-2v0.5h-1v2h-1v-1h-1v0.5h-1v1h-1v3h-1v-3.5h-1v-2.5h-1v1.5h-1v-1.5h-1v3.5h-1v-1h-1v-1.5h-1v0.5h-1v1h-1v-1.5h-1v2.5h-1v-3.5h-1v3h-1v-3.5h-1v1.5h-1v1.5h-1v0.5h-1v2h-1v-2.5h-1v-1h-1v-1.5h-1v0.5h-1v1.5h-1v0.5h-1v-1h-1v-2.5h-1Z" fill="#eef2f6"/></svg><span class="lb wi cx"><svg class="ic xl"><use href="#sl"/></svg>DSCF0027.mov</span></div><div class="c a sblue" style="left:1375.8px;top:781px;width:59.5px"><i class="ln"></i><svg class="wv" width="59.5" height="30"><path d="M0,9h1v0.5h1v3.5h6v-1h1v-1h2v-3h1v3h1v0.5h1v-2.5h1v-4.5h1v1h1v2.5h1v-1h1v4.5h1v-0.5h1v0.5h1v-1h1v1.5h1v-0.5h1v-3.5h2v0.5h1v-3h1v2.5h1v1h1v-1.5h2v2h1v-2h1v0.5h1v1h1v2h1v-1.5h1v-1.5h1v2.5h2v-1h1v3.5h5v-3.5h1v-3h1v3.5h1v-1.5h1v1h1v-2h1v0.5h1v2h1v1h1v-3.5h1v2h1v0.5h1V18h-1v1h-1v0.5h-1v-2h-1v0.5h-1v2.5h-1v0.5h-1v-3h-1v1h-1v-0.5h-1v3.5h-1v-4h-1v-3h-3v0.5h-1v-0.5h-1v4h-1v-2h-2v2h-1v-1h-1v-0.5h-1v2h-1v0.5h-1v1.5h-1v-2.5h-1v2.5h-1v-2h-2v1.5h-1v2h-1v-3.5h-2v0.5h-1v-4h-2v1.5h-1v-1h-1v0.5h-2v5h-1v-1.5h-1v2h-1v2h-1v-5.5h-1v-2.5h-2v3h-1v-2.5h-1v0.5h-1v-1.5h-1v-1h-6v3h-1v0.5h-1Z" fill="#eef2f6"/></svg><span class="lb cx">DSCF00...</span></div><div class="c a sgreen" style="left:1456.8px;top:781px;width:51.6px"><i class="ln"></i><svg class="wv" width="51.6" height="30"><path d="M0,8.5h1v-2h1v-0.5h2v2.5h1v2h1v-2h1v2.5h1v-0.5h1v2.5h6v-4h1v1h1v-2.5h1v1.5h1v1.5h1v-2.5h1v-1.5h1v4h1v-1h1v0.5h1v-1h1v1.5h1v-3.5h1v2.5h1v-1h1v2h1v-3.5h1v4h1v-1h1v-3h1v1.5h1v-4h1v-0.5h1v1.5h1v1.5h1v1h1v-0.5h2v5.5h1v-1.5h1v0.5h1v-0.5h2v0.5h1v0.5h1v-4h1v1h1V19h-1v0.5h-1v-4h-2v0.5h-1v0.5h-1v-0.5h-2v-1h-1v5.5h-1v0.5h-1v-2h-1v1h-1v2.5h-1v1.5h-1v-1.5h-1v-3.5h-1v2h-1v-2.5h-1v-1h-1v4h-1v-4h-1v2.5h-1v-1h-1v2h-1v-4h-1v1.5h-1v-0.5h-1v0.5h-1v-1h-1v4h-1v-1h-1v-3.5h-1v2.5h-1v1h-1v-2.5h-1v1.5h-1v-4.5h-6v2.5h-2v2h-1v-2h-1v2.5h-1v2.5h-1v-1.5h-2v-2h-1Z" fill="#e3f6ea"/></svg><span class="lb wi cx"><svg class="ic xl"><use href="#sl"/></svg>D...</span></div><div class="c a teal" style="left:1510px;top:781px;width:35.5px"><i class="ln"></i><svg class="fd" width="35.5" height="30"><polygon points="27.5,0 35.5,0 35.5,30"/></svg><svg class="wv" width="35.5" height="30"><path d="M0,13.5h1v-1h1v1h1v-1h1v1h5v-1h1v1h12v-1h2v1h3v-1h1v1h8V14.5h-8v1h-1v-1h-3v1h-1v-0.5h-1v-0.5h-12v1h-1v-1h-5v1h-1v-1h-1v1h-1v-1h-1Z" fill="#c3f3f1"/><path d="M0,18.5H35.5" stroke="rgba(255,255,255,.28)" stroke-width="1" fill="none"/></svg><span class="lb">1 - ...</span></div><div class="c a sblue" style="left:1643.7px;top:781px;width:82.5px"><i class="ln"></i><svg class="wv" width="82.5" height="30"><path d="M0,10h1v-2h1v-0.5h1v0.5h1v2h2v-3h1v3h1v-0.5h1v-3h1v1h1v1.5h1v0.5h1v1.5h1v-0.5h1v-2.5h1v2.5h4v-1h1v-1h1v2h1v-1.5h1v1h1v-1.5h1v1h1v-0.5h1v1.5h1v1.5h1v0.5h1v-2h1v-3.5h1v-1h1v0.5h1v-0.5h1v4h2v2h1v-0.5h1v-1h1v-1h2v1.5h2v-3.5h1v1.5h1v-2.5h1v3.5h1v3h3v-6.5h1v2.5h1v-1h2v1.5h1v-2h1v-0.5h1v3.5h3v-4h1v-0.5h1v3.5h1v0.5h1v0.5h2v-0.5h1v-1h1v1.5h2v0.5h2v-2.5h1v4h2v-0.5h1v0.5h1v-0.5h1v0.5h2V16h-1v-0.5h-1v0.5h-1v-0.5h-1v0.5h-1v-0.5h-2v3h-1v-1.5h-1v-0.5h-1v0.5h-1v0.5h-1v1.5h-1v-1.5h-1v0.5h-1v-0.5h-2v1h-1v3.5h-2v-5h-1v1h-1v-0.5h-1v3.5h-2v-3h-1v2h-1v-0.5h-2v3h-1v-7.5h-3v2.5h-1v4.5h-1v-3h-1v2.5h-1v-5h-1v0.5h-1v1.5h-1v0.5h-1v-1.5h-1v-1h-2v1.5h-2v4.5h-1v-1.5h-1v2h-1v-1.5h-1v-4h-1v-2h-1v0.5h-1v1h-1v1.5h-1v0.5h-1v0.5h-1v-1h-1v1h-1v-2.5h-1v1.5h-2v-1h-4v2h-1v-1.5h-1v-1h-1v2h-2v1.5h-1v1h-1v-3.5h-2v3h-1v-3h-2v1.5h-1v1.5h-1v-0.5h-1v-2.5h-1Z" fill="#eef2f6"/></svg><span class="lb cx">DSCF0037.m...</span></div><div class="c a sblue" style="left:1727.7px;top:781px;width:47.5px"><i class="ln"></i><svg class="wv" width="47.5" height="30"><path d="M0,8h1v-3.5h1v-1h1v1h1v3.5h1v5h2v-2h2v-0.5h1v0.5h1v0.5h1v-1.5h1v-1h1v-4.5h1v4h1v1.5h3v-2h2v-0.5h1v2.5h1v-1h1v-0.5h1v-1h1v2h2v3.5h3v-2h1v-1h1v-1.5h1v0.5h1v-1h1v1h1v0.5h2v-0.5h1v-0.5h1v2h1v1h2v-0.5h3v0.5h1V16.5h-1v0.5h-1v0.5h-1v-0.5h-1v-0.5h-1v0.5h-2v3.5h-1v-1h-1v-1.5h-1v1h-1v-0.5h-1v1.5h-1v-1.5h-1v2h-1v-3h-1v-1h-1v-1.5h-3v3.5h-1v0.5h-1v2.5h-1v-2.5h-1v-0.5h-1v-1h-1v2.5h-1v0.5h-1v-1h-1v-1.5h-1v-0.5h-2v2h-1v2.5h-1v-2h-1v-2h-1v-1.5h-1v1h-1v0.5h-1v-1h-1v-0.5h-1v-1.5h-2v4.5h-1v3h-1v2.5h-1v-2.5h-1v-2.5h-1Z" fill="#eef2f6"/></svg><span class="lb cx">DSCF...</span></div><svg class="mk" style="left:1769.2px;top:799px" width="8" height="13"><path d="M1,0H8V12L4,11L1,8Z" fill="#e02a10"/></svg><div class="c a sblue thin" style="left:1780.5px;top:781px;width:3.9px"></div><div class="c a sblue" style="left:1785.9px;top:781px;width:51.2px"><i class="ln"></i><svg class="wv" width="51.2" height="30"><path d="M0,10h1v-1.5h1v-3.5h1v4h1v0.5h1v1h1v-2.5h1v3h1v2h3v-0.5h1v-0.5h1v0.5h2v-3.5h1v1.5h1v2.5h6v-3h1v-3.5h1v-0.5h1v4h1v-0.5h1v-3h1v1.5h2v-2h1v2h1v-1h1v2.5h1v-2.5h1v-1h1v2h1v5h1v-0.5h1v-0.5h1v0.5h1v-0.5h1v-3.5h1v1h1v-3.5h1v2h1v0.5h1v1h1v3.5h2V15h-2v3.5h-1v1h-1v0.5h-1v1h-1v-2.5h-1v1h-1v-3.5h-1v-0.5h-3v-0.5h-1v4.5h-1v2h-2v-2.5h-1v1h-1v-0.5h-1v1.5h-1v-0.5h-1v-0.5h-1v0.5h-1v-2h-1v-1h-1v5.5h-1v-1h-1v-4h-1v-3h-6v3h-1v1.5h-1v-4h-1v0.5h-1v-0.5h-2v-0.5h-3v2h-1v3.5h-1v-3.5h-1v1.5h-2v4h-1v-2.5h-1v-2h-1Z" fill="#eef2f6"/></svg><span class="lb wi cx"><svg class="ic xl"><use href="#sl"/></svg>D...</span></div><svg class="mk" style="left:1784.7px;top:799px" width="8" height="13"><path d="M0,0H7V9L4,12.5L0,10Z" fill="#15a928"/><circle cx="3.3" cy="6" r="2.1" fill="#2a2a2e"/><circle cx="3.3" cy="6" r="1" fill="#bfc5c0"/></svg><div class="c a sblue" style="left:1840.6px;top:781px;width:44.7px"><i class="ln"></i><svg class="wv" width="44.7" height="30"><path d="M0,10.5h2v0.5h1v0.5h1v-2h1v3h1v-1h1v-2h1v0.5h1v-1h1v2.5h1v1.5h5v-6h3v-2.5h1v2.5h1v2.5h1v-0.5h3v-3.5h1v4.5h1v-1.5h1v-0.5h1v3.5h1v-1h1v0.5h1v-1.5h1v-1.5h1v1h1v3.5h1v-1h1v-1h2v2h1v-4.5h1v-2h1v-0.5h1v2h1v-1h1V22h-1v-2h-1v2.5h-1v-1h-1v-0.5h-1v-5.5h-1v1.5h-1v0.5h-1v-1.5h-1v-0.5h-1v3.5h-1v1.5h-1v-2h-1v-2h-1v1h-1v-1h-1v3h-1v0.5h-1v-1.5h-1v3.5h-1v-4h-1v1.5h-1v-1h-2v2h-1v2.5h-1v-1h-1v-1.5h-1v1h-1v-6.5h-2v0.5h-1v-0.5h-2v1.5h-1v2h-1v-0.5h-1v0.5h-1v-2h-1v-1h-1v2.5h-1v-1h-1v0.5h-2v0.5h-1Z" fill="#eef2f6"/></svg><span class="lb cx">DSCF...</span></div><div class="c a sblue" style="left:1950.4px;top:781px;width:31.6px"><i class="ln"></i><svg class="wv" width="31.6" height="30"><path d="M0,8h1v0.5h1v4.5h7v-1.5h1v-0.5h1v-1h3v0.5h1v2.5h3v-2h1v-1h1v-0.5h1v-1h1v2h1v-1.5h1v-2h3v2h1v-1h1v2h1v0.5h1v-1h1V18h-2v0.5h-1v0.5h-2v2.5h-1v0.5h-2v-3h-1v-1h-1v2.5h-1v-1.5h-1v-1.5h-1v-0.5h-1v-2h-3v2h-1v0.5h-1v0.5h-1v0.5h-1v-1h-1v-0.5h-1v-2h-7v5h-1v1h-1Z" fill="#eef2f6"/></svg><span class="lb cx">DS...</span></div><svg class="mk" style="left:1949.2px;top:799px" width="8" height="13"><path d="M0,0H7V9L4,12.5L0,10Z" fill="#15a928"/><circle cx="3.3" cy="6" r="2.1" fill="#2a2a2e"/><circle cx="3.3" cy="6" r="1" fill="#bfc5c0"/></svg><div class="c a sblue" style="left:1983.6px;top:781px;width:56.6px"><i class="ln"></i><svg class="wv" width="56.6" height="30"><path d="M0,11.5h1v-2h1v-1h1v-0.5h2v3h1v1h1v-1h1v-2.5h1v-0.5h1v2.5h1v-1h1v-0.5h1v-1.5h1v-2.5h1v1.5h1v4h1v0.5h1v-1.5h1v-2h1v2.5h1v-2.5h1v-2.5h2v0.5h1v2h1v3h1v-5h1v-0.5h1v-1h1v2h1v-1h1v4.5h2v-1h1v0.5h2v0.5h1v-1.5h1v-1.5h1v3.5h1v-2h1v-0.5h1v2h1v-4h1v3h2v0.5h1v3h2v-2h1v2.5h1v-4.5h1v2h1v-3h1v-1h1v-0.5h1V23h-1v-1.5h-1v0.5h-1v-4.5h-1v2h-1v-3.5h-1v1h-1v-1h-2v3.5h-2v0.5h-1v2h-1v-3h-1v0.5h-1v0.5h-1v-1.5h-1v4h-1v-2h-1v-2h-2v0.5h-2v-0.5h-1v-0.5h-1v3.5h-1v-0.5h-1v1.5h-1v1.5h-1v-2h-1v-5h-1v3h-1v1.5h-1v2h-1v-0.5h-1v-2h-1v-3h-1v2.5h-1v-2h-1v-1h-2v4h-1v1.5h-1v-3h-1v-1.5h-1v0.5h-1v-1h-1v2h-1v0.5h-1v-3.5h-1v-0.5h-1v0.5h-1v3h-2v-1h-1v-0.5h-1v-2h-1Z" fill="#eef2f6"/></svg><span class="lb cx">DSCF00...</span></div><div class="c a sblue" style="left:2072.8px;top:781px;width:73.3px"><i class="ln"></i><svg class="wv" width="73.3" height="30"><path d="M0,11h1v-0.5h1v-0.5h2v-0.5h1v-1.5h1v2h1v1.5h1v0.5h1v-1h1v-0.5h1v0.5h2v-2h1v1.5h1v1h1v-3h2v-2.5h1v6h1v-1.5h1v-0.5h1v1.5h1v0.5h1v1h6v-2.5h1v-1.5h1v0.5h1v3.5h7v-4.5h1v0.5h1v-0.5h3v4.5h1v-1h1v0.5h1v-3.5h2v0.5h1v1h3v-2h1v-0.5h1v-1h1v1.5h1v0.5h1v2h1v-3h2v-1h1v1.5h1v-1.5h1v0.5h1v0.5h1v1.5h1v-4h1v3.5h1v-1.5h2v-0.5h1V21h-1v-1h-1v0.5h-1v-1.5h-1v3.5h-1v-3.5h-1v1h-1v0.5h-2v-1h-1v1h-1v-0.5h-1v0.5h-1v-3h-1v1.5h-1v0.5h-1v1.5h-1v-0.5h-1v-1.5h-1v-2h-1v0.5h-2v1h-2v0.5h-1v-3.5h-1v1h-1v-1.5h-1v4h-2v1h-1v-1h-1v0.5h-1v-4.5h-7v4h-1v0.5h-1v-2h-1v-2.5h-6v1h-1v0.5h-1v1h-2v-1.5h-1v6.5h-1v-2.5h-1v-0.5h-1v-3h-1v1.5h-1v1h-1v-2h-1v-0.5h-1v0.5h-1v-0.5h-1v-0.5h-1v1h-1v1h-1v2h-1v-1h-1v-1h-1v-0.5h-1v-0.5h-2Z" fill="#eef2f6"/></svg><span class="lb wi cx"><svg class="ic xl"><use href="#sl"/></svg>DSCF0...</span></div><svg class="mk" style="left:2071.6px;top:799px" width="8" height="13"><path d="M0,0H7V9L4,12.5L0,10Z" fill="#15a928"/><circle cx="3.3" cy="6" r="2.1" fill="#2a2a2e"/><circle cx="3.3" cy="6" r="1" fill="#bfc5c0"/></svg><div class="c a sblue" style="left:2147.6px;top:781px;width:63.5px"><i class="ln"></i><svg class="wv" width="63.5" height="30"><path d="M0,10h1v-4h1v3h2v1h2v-3h1v2h1v0.5h1v1h2v-2h1v1h1v-0.5h2v1.5h1v-1h1v-3h1v3h1v2.5h1v-1h1v-1h1v1h1v1h2v-1h1v-1h1v1.5h1v0.5h1v-2h1v-1.5h1v1h1v-1h1v4h2v-1h1v-0.5h1v-3.5h1v1.5h1v-3.5h1v3h2v2.5h2v-2.5h1v0.5h1v0.5h1v-2.5h1v-0.5h1v-1.5h1v-0.5h1v1h1v3.5h1v-1h2v-0.5h1v2.5h1v1h1v-1.5h1v1h1v-2h1v-1.5h1v3.5h1v-4.5h1V22.5h-1v-4.5h-1v3.5h-1v-1.5h-1v-3h-1v2h-1v-2h-1v1h-1v1.5h-1v0.5h-2v-0.5h-1v4h-1v1.5h-1v-2.5h-1v-1.5h-2v-1.5h-1v-0.5h-1v1h-1v-2.5h-2v1.5h-1v1h-1v1.5h-1v-2h-1v1.5h-1v-4.5h-2v-1h-2v4h-1v-1.5h-1v1h-1v-1h-1v-2.5h-1v1h-1v2h-1v-1.5h-1v-1.5h-1v1h-2v2h-1v-2h-1v-1h-1v3h-1v2.5h-1v-2h-1v-1.5h-1v1h-2v0.5h-2v-2h-1v0.5h-1v0.5h-1v1.5h-1v0.5h-1v-2h-2v1h-1v-0.5h-1v2.5h-1v-2.5h-1Z" fill="#eef2f6"/></svg><span class="lb cx">DSCF003...</span></div><div class="c a sblue" style="left:2226.7px;top:781px;width:20.3px"><i class="ln"></i><svg class="wv" width="20.3" height="30"><path d="M0,7.5h1v1h1v-0.5h1v0.5h1v-3.5h1v3h1v0.5h1v2h1v-1.5h1v-0.5h1v2.5h2v-3.5h1v1h1v1.5h1v-3h1v2.5h1v2h2v-1h1V17.5h-1v-1h-2v2h-1v2.5h-1v-3h-1v1h-1v1h-1v-3h-1v0.5h-1v2h-1v-0.5h-1v-1h-1v1h-1v2h-1v3h-1v-5h-1v1.5h-1v-0.5h-1v1h-1Z" fill="#eef2f6"/></svg></div><div class="c a sblue" style="left:2248.5px;top:781px;width:18.9px"><i class="ln"></i><svg class="wv" width="18.9" height="30"><path d="M0,11h3v0.5h1v0.5h2v0.5h1v-0.5h1v-1h1v1h1v0.5h2v-0.5h1v0.5h1v0.5h2v-0.5h1v-0.5h1v-1h1V16.5h-2v-1h-1v-0.5h-2v0.5h-1v0.5h-1v-0.5h-3v1.5h-1v-1h-1v-0.5h-1v1h-3v0.5h-1v-0.5h-1v0.5h-1Z" fill="#eef2f6"/></svg></div><div class="c a sblue" style="left:2279.7px;top:781px;width:10.3px"><i class="ln"></i></div><div class="c a apurp" style="left:2303.6px;top:781px;width:24px"><i class="ln"></i><svg class="fd" width="24" height="30"><polygon points="0,0 12,0 0,30"/></svg><svg class="wv" width="24" height="30"><path d="M0,13.5h1v-1h1v1h5v-1h1v1h2v-1h1v1h8v-1h1v1h4V14.5h-4v1h-1v-1h-8v1h-1v-1h-2v1h-1v-1h-5v1h-1v-1h-1Z" fill="#f1e6f2"/><path d="M0,18.5H24" stroke="rgba(255,255,255,.28)" stroke-width="1" fill="none"/></svg></div><div class="c a apurp" style="left:259px;top:839px;width:73.8px"><i class="ln"></i><svg class="fd" width="73.8" height="30"><polygon points="48.8,0 73.8,0 73.8,30"/></svg><svg class="wv" width="73.8" height="30"><path d="M0,13h1v-0.5h1v-1h1v1.5h2v-2h1v2h1v-0.5h1v-1h1v1h1v-0.5h1v-0.5h1v0.5h1v1h4v-2.5h1v2h1v0.5h3v-0.5h1v0.5h6v-1h1v-1h1v0.5h1v-0.5h1v1h1v1h3v-1.5h1v1h1v-0.5h1v1h1v-0.5h3v-0.5h1v1h2v-1.5h1v1h1v0.5h1v-0.5h1v0.5h1v-2.5h1v2.5h2v-2h2v1h1v1h1v-0.5h1v0.5h1v-1h1v-1h1v2h1v-0.5h1v0.5h3v-0.5h1v0.5h1v-1h1v-1h1v2h2V15h-2v1.5h-1v-1h-1v-0.5h-1v0.5h-1v-0.5h-3v0.5h-1v-0.5h-1v2h-1v-1h-1v-0.5h-2v-0.5h-1v1h-1v1h-1v-0.5h-1v-1.5h-2v3h-1v-3h-1v0.5h-1v-0.5h-1v0.5h-1v1h-1v-1.5h-2v0.5h-4v-0.5h-1v0.5h-2v0.5h-1v-1h-3v1h-1v1h-1v-0.5h-1v0.5h-1v-1h-1v-1h-6v0.5h-2v-0.5h-2v0.5h-1v2h-1v-2.5h-1v0.5h-1v-0.5h-2v1h-4v0.5h-1v-1h-1v-0.5h-1v2.5h-1v-2h-1v-0.5h-1v1.5h-1v-1h-1v-0.5h-1Z" fill="#f1e6f2"/><path d="M0,18.5H73.8" stroke="rgba(255,255,255,.28)" stroke-width="1" fill="none"/></svg><span class="lb">Vinyl Crack...</span></div><div class="c a apurp" style="left:449px;top:839px;width:163.9px"><i class="ln"></i><svg class="fd" width="163.9" height="30"><path d="M0,0H56C46,14 22,27 0,29Z"/><path d="M141.9,0H163.9V28Z"/></svg><svg class="wv" width="163.9" height="30"><path d="M0,13.5h5v-1h1v1h8v-1h1v1h2v-1h2v1h3v-1h1v1h2v-1h1v1h2v-1h3v1h11v-1h1v1h6v-1h1v1h5v-1h1v1h5v-1h1v1h3v-1h2v1h3v-1h1v1h16v-1h2v1h2v-1h2v1h6v-1h1v1h2v-1h1v1h15v-1h1v1h3v-1h2v1h1v-1h1v1h1v-1h1v1h1v-1h1v1h5v-1h2v1h3v-1h2v1h8v-1h1v1h13V14.5h-13v1h-1v-1h-8v1h-2v-1h-3v0.5h-1v0.5h-1v-1h-5v0.5h-1v-0.5h-1v1h-1v-1h-1v1h-1v-1h-1v1h-2v-1h-3v1h-1v-1h-15v1h-1v-1h-2v1h-1v-1h-6v1h-2v-1h-2v1h-2v-1h-16v1h-1v-1h-3v1h-2v-1h-3v1h-1v-1h-5v0.5h-1v-0.5h-5v1h-1v-1h-6v1h-1v-1h-11v0.5h-2v0.5h-1v-1h-2v1h-1v-1h-2v1h-1v-1h-3v1h-1v-0.5h-1v-0.5h-2v1h-1v-1h-8v0.5h-1v-0.5h-5Z" fill="#f1e6f2"/><path d="M0,18.5H163.9" stroke="rgba(255,255,255,.28)" stroke-width="1" fill="none"/></svg><span class="lb wi cx"><svg class="ic xk"><use href="#sk"/></svg>Fire SFX.wav</span></div><i class="dot" style="left:579.5px;top:856px"></i><div class="c a apurp" style="left:678px;top:839px;width:28.2px"><i class="ln"></i><svg class="wv" width="28.2" height="30"><path d="M0,13h2v-0.5h2v0.5h1v-0.5h1v0.5h1v-0.5h1v-0.5h1v1h1v-1h1v0.5h1v0.5h1v-1h1v0.5h1v-1h1v1h1v-0.5h1v-1h1v2h3v-1h1v-0.5h2v1h2v0.5h1V15h-1v1h-1v-0.5h-1v0.5h-1v1h-1v-1h-1v-1h-3v1.5h-2v-1.5h-1v1.5h-1v-1h-1v0.5h-1v-1h-1v0.5h-1v0.5h-1v-1h-1v1h-1v-0.5h-1v-0.5h-1v0.5h-1v-0.5h-1v0.5h-2v-0.5h-2Z" fill="#f1e6f2"/><path d="M0,18.5H28.2" stroke="rgba(255,255,255,.28)" stroke-width="1" fill="none"/></svg><span class="lb">Fi...</span></div><div class="c a apurp" style="left:805.9px;top:839px;width:78.7px"><i class="ln"></i><svg class="fd" width="78.7" height="30"><polygon points="0,0 3,0 0,30"/><polygon points="75.7,0 78.7,0 78.7,30"/></svg><svg class="wv" width="78.7" height="30"><path d="M0,12.5h2v0.5h2v-0.5h2v-0.5h1v0.5h1v0.5h1v-0.5h1v0.5h1v-1h1v-1.5h1v2.5h1v-1h4v0.5h1v-0.5h1v0.5h1v-1.5h1v1.5h1v-1.5h1v1.5h1v0.5h1v-0.5h1v-1.5h1v2h1v-1.5h2v1.5h2v-1h1v1h5v-1h1v0.5h1v0.5h1v-0.5h1v0.5h3v-0.5h1v0.5h1v-0.5h1v-0.5h1v1h2v-0.5h4v0.5h2v-0.5h1v0.5h1v-1h1v-1h1v2h2v-1h1v1h2v-0.5h1v0.5h1v-2h1v2h2v-0.5h1v-1h1v1h1v0.5h1v-1.5h1v1h2V15.5h-1v-0.5h-1v1.5h-1v-1.5h-1v0.5h-1v1h-1v-1h-1v-0.5h-2v2h-1v-2h-1v0.5h-1v-0.5h-2v1h-1v-1h-2v2h-1v-0.5h-1v-1.5h-1v0.5h-1v-0.5h-1v0.5h-2v-0.5h-1v0.5h-1v-0.5h-3v1h-1v-1h-2v0.5h-1v-0.5h-2v0.5h-2v-0.5h-1v0.5h-1v0.5h-1v-1h-5v1h-1v-1h-2v1.5h-2v-1.5h-1v2h-1v-1.5h-1v-0.5h-1v0.5h-1v1.5h-1v-1.5h-1v2h-1v-1.5h-1v0.5h-1v-1h-1v0.5h-1v-0.5h-1v0.5h-2v-1h-1v2h-1v-1h-1v-1h-1v0.5h-3v0.5h-1v-0.5h-1v-0.5h-1v0.5h-1v-0.5h-1v1h-1v-0.5h-1Z" fill="#f1e6f2"/><path d="M0,18.5H78.7" stroke="rgba(255,255,255,.28)" stroke-width="1" fill="none"/></svg><span class="lb wi cx"><svg class="ic xk"><use href="#sk"/></svg>Fire SF...</span></div><i class="dot" style="left:813px;top:852px"></i><i class="dot" style="left:859.5px;top:851px"></i><div class="c a apurp" style="left:1018.7px;top:839px;width:10.8px"><i class="ln"></i><svg class="fd" width="10.8" height="30"><polygon points="8.8,0 10.8,0 10.8,30"/></svg></div><div class="c a apurp" style="left:1039.8px;top:839px;width:17px"><i class="ln"></i><svg class="wv" width="17" height="30"><path d="M0,12.5h2v1h9v-1h1v1h5V14.5h-5v1h-1v-1h-9v1h-2Z" fill="#f1e6f2"/><path d="M0,18.5H17" stroke="rgba(255,255,255,.28)" stroke-width="1" fill="none"/></svg><i class="ds"></i></div><div class="c a apurp" style="left:1058.8px;top:839px;width:10.7px"><i class="ln"></i><svg class="fd" width="10.7" height="30"><polygon points="0.7,0 10.7,0 10.7,30"/></svg></div><div class="c a apurp" style="left:1163.9px;top:839px;width:14px"><i class="ln"></i><svg class="wv" width="14" height="30"><path d="M0,12.5h1v1h5v-1h1v1h5v-1h1v1h1V14.5h-1v0.5h-1v-0.5h-5v1h-1v-1h-5v1h-1Z" fill="#f1e6f2"/><path d="M0,18.5H14" stroke="rgba(255,255,255,.28)" stroke-width="1" fill="none"/></svg><i class="ds"></i></div><div class="c a apurp" style="left:1179.3px;top:839px;width:7.8px"><i class="ln"></i></div><div class="c a apurp" style="left:1434.8px;top:839px;width:22.8px"><i class="ln"></i><svg class="fd" width="22.8" height="30"><polygon points="0,0 12,0 0,30"/></svg><svg class="wv" width="22.8" height="30"><path d="M0,13.5h2v-1h1v1h1v-1h1v1h12v-1h1v1h5V14.5h-5v1h-1v-1h-12v0.5h-1v-0.5h-1v1h-1v-1h-2Z" fill="#f1e6f2"/><path d="M0,18.5H22.8" stroke="rgba(255,255,255,.28)" stroke-width="1" fill="none"/></svg></div><div class="c a apurp" style="left:1506.4px;top:839px;width:25px"><i class="ln"></i><svg class="fd" width="25" height="30"><polygon points="0,0 12,0 0,30"/></svg><svg class="wv" width="25" height="30"><path d="M0,13.5h2v-1h1v1h5v-1h1v1h5v-1h1v1h5v-1h1v1h1v-1h1v1h2V14.5h-2v0.5h-1v-0.5h-1v1h-1v-1h-5v1h-1v-1h-5v1h-1v-1h-5v1h-1v-1h-2Z" fill="#f1e6f2"/><path d="M0,18.5H25" stroke="rgba(255,255,255,.28)" stroke-width="1" fill="none"/></svg></div><div class="c a sblue" style="left:1542.8px;top:839px;width:72.2px"><i class="ln"></i><svg class="wv" width="72.2" height="30"><path d="M0,11h1v-1h1v-4h1v4.5h2v-4.5h1v1.5h1v0.5h1v-0.5h1v5.5h4v-0.5h1v-0.5h1v1h1v-1.5h1v-1h1v-1h1v0.5h3v-3.5h2v1.5h1v-2.5h1v3.5h1v-2h1v5.5h2v-1h1v0.5h1v-1h1v-2h1v-1h1v2h1v-1h3v2h1v-1h1v0.5h1v2.5h5v-3h1v-1.5h1v1.5h1v-1h1v1h2v-2h2v-1h1v-0.5h1v1h1v1.5h1v3h1v-0.5h1v1.5h1v-2.5h1v-3h2v3.5h1v-0.5h2v-0.5h1v1.5h1v1h1v-1.5h1V17h-1v-1.5h-1v1.5h-1v0.5h-1v0.5h-2v-0.5h-1v3.5h-1v-1h-1v-2h-1v-3h-1v1.5h-1v-0.5h-1v3h-1v2.5h-1v-0.5h-1v-0.5h-2v-0.5h-1v-2h-1v-0.5h-1v1h-1v-0.5h-1v1h-1v-0.5h-1v-3.5h-2v0.5h-1v-0.5h-2v2.5h-1v0.5h-1v-1h-1v1.5h-2v1h-1v-1.5h-1v1.5h-1v-0.5h-1v-2.5h-1v-0.5h-1v0.5h-1v-1h-2v6h-1v-2.5h-1v4.5h-1v-3h-1v2h-1v-1.5h-1v-3h-3v1h-1v-1h-1v-1.5h-1v-1.5h-1v1h-2v-1h-4v5h-1v-0.5h-1v0.5h-1v2h-1v-4.5h-2v4h-1v-3h-1v-2h-1Z" fill="#eef2f6"/></svg><span class="lb wi cx"><svg class="ic xl"><use href="#sl"/></svg>DSCF0...</span></div><svg class="mk" style="left:1541.6px;top:857px" width="8" height="13"><path d="M0,0H7V9L4,12.5L0,10Z" fill="#15a928"/><circle cx="3.3" cy="6" r="2.1" fill="#2a2a2e"/><circle cx="3.3" cy="6" r="1" fill="#bfc5c0"/></svg><div class="c a sblue" style="left:1616.8px;top:839px;width:18.5px"><i class="ln"></i><svg class="wv" width="18.5" height="30"><path d="M0,7h1v-1h2v1h1v3h1v1.5h1v-1h1v2.5h2v-1h1v0.5h1v-0.5h3v-4.5h1v-0.5h2v-0.5h1V21.5h-1v-1h-1v-0.5h-1v-0.5h-1v-3.5h-2v-0.5h-2v0.5h-1v-0.5h-1v-0.5h-1v2.5h-1v-1h-1v1.5h-1v3.5h-2v-0.5h-1v0.5h-1Z" fill="#eef2f6"/></svg></div><svg class="mk" style="left:1629.3px;top:857px" width="8" height="13"><path d="M1,0H8V12L4,11L1,8Z" fill="#e02a10"/></svg><div class="c a apurp" style="left:2303.6px;top:839px;width:24.6px"><i class="ln"></i><svg class="fd" width="24.6" height="30"><polygon points="0,0 10,0 0,30"/></svg><svg class="wv" width="24.6" height="30"><path d="M0,13h2v-2h1v2h1v-1h1v1h1v-2h1v1.5h1v-0.5h1v1h1v-0.5h2v-0.5h1v0.5h1v-2h1v2h1v0.5h1v-0.5h1v-0.5h1v0.5h3v-2h1v2.5h2V15h-1v0.5h-1v2h-1v-2h-3v1h-1v-1h-1v-0.5h-1v0.5h-1v2.5h-1v-2.5h-1v0.5h-1v-0.5h-2v-0.5h-1v1.5h-1v-1h-1v1.5h-1v-2h-1v0.5h-1v-0.5h-1v2h-1v-2h-2Z" fill="#f1e6f2"/><path d="M0,18.5H24.6" stroke="rgba(255,255,255,.28)" stroke-width="1" fill="none"/></svg></div><div class="c a apurp" style="left:1020.7px;top:897px;width:19.5px"><i class="ln"></i><svg class="wv" width="19.5" height="30"><path d="M0,10.5h1v-0.5h2v1h1v-2h1v1.5h1v1.5h2v0.5h1v-0.5h1v-0.5h1v1.5h4v-3h1v-0.5h1v1h1v0.5h1v-0.5h1V17h-1v0.5h-1v0.5h-1v0.5h-1v-0.5h-1v-3h-3v-0.5h-1v2h-1v-0.5h-2v0.5h-1v-0.5h-1v1.5h-1v1h-1v-1h-1v1h-1v0.5h-1v-1h-1Z" fill="#f1e6f2"/></svg></div><div class="c a apurp" style="left:1068.9px;top:897px;width:15.3px"><i class="ln"></i><svg class="wv" width="15.3" height="30"><path d="M0,13.5h8v-1h1v1h6V14.5h-6v1h-1v-1h-8Z" fill="#f1e6f2"/><path d="M0,18.5H15.3" stroke="rgba(255,255,255,.28)" stroke-width="1" fill="none"/></svg></div><div class="c a apurp" style="left:1163.9px;top:897px;width:22.8px"><i class="ln"></i><svg class="wv" width="22.8" height="30"><path d="M0,13h3v-0.5h1v0.5h1v-1h2v0.5h1v0.5h1v-0.5h1v-0.5h1v1h3v-1h1v0.5h2v-0.5h1v1h1v-2.5h1v1.5h1v1h1v-0.5h1V15.5h-1v-0.5h-1v1h-1v2h-1v-3h-1v1h-1v-0.5h-2v0.5h-1v-1h-3v1h-1v-0.5h-1v-0.5h-1v0.5h-1v0.5h-2v-1h-1v0.5h-2v-0.5h-2Z" fill="#f1e6f2"/><path d="M0,18.5H22.8" stroke="rgba(255,255,255,.28)" stroke-width="1" fill="none"/></svg></div><div class="c a apurp" style="left:1434.8px;top:897px;width:23.4px"><i class="ln"></i><svg class="fd" width="23.4" height="30"><polygon points="0,0 10,0 0,30"/></svg><svg class="wv" width="23.4" height="30"><path d="M0,13h1v-0.5h1v0.5h1v-0.5h2v-0.5h1v-1h1v1h1v1h1v-1h1v1h1v-2h1v1h2v1h3v-0.5h1v-0.5h2v-1h1v2h1v-1h1V16h-1v-1h-1v2h-1v-1h-2v-0.5h-1v-0.5h-3v0.5h-1v0.5h-1v0.5h-1v-1.5h-1v1h-1v-1h-1v1h-1v0.5h-1v-1h-1v-0.5h-1v0.5h-1v-0.5h-1v0.5h-1v-0.5h-1Z" fill="#f1e6f2"/><path d="M0,18.5H23.4" stroke="rgba(255,255,255,.28)" stroke-width="1" fill="none"/></svg></div><div class="c a apurp" style="left:1506.4px;top:897px;width:26px"><i class="ln"></i><svg class="fd" width="26" height="30"><polygon points="0,0 10,0 0,30"/></svg><svg class="wv" width="26" height="30"><path d="M0,13h2v-0.5h1v0.5h1v-0.5h3v0.5h1v-1.5h1v-1h1v1h1v1h1v0.5h1v-1h3v-1h1v1.5h2v0.5h1v-1h1v1h1v-0.5h1v-1h1v1.5h2V14.5h-1v0.5h-1v1.5h-1v-0.5h-1v-1h-1v1h-1v-1h-1v0.5h-2v1.5h-1v-1h-3v-1h-1v0.5h-1v1h-1v0.5h-1v-0.5h-1v-1.5h-2v0.5h-2v-0.5h-1v1h-1v-1h-2Z" fill="#f1e6f2"/><path d="M0,18.5H26" stroke="rgba(255,255,255,.28)" stroke-width="1" fill="none"/></svg></div><div class="c a lav" style="left:583.8px;top:1129px;width:28.7px"><i class="ln"></i><svg class="wv" width="28.7" height="30"><path d="M0,9.5h1v0.5h1v2h3v0.5h1v0.5h1v-1h1v0.5h2v-0.5h1v0.5h1v0.5h6v-2.5h1v0.5h1v-2h1v3h1v-1.5h1v-0.5h1v1h2v1.5h2v-1.5h1V16.5h-1v-1h-2v1.5h-1v0.5h-1v1h-1v-0.5h-1v-2h-1v2h-1v-1h-1v0.5h-1v-2.5h-5v-0.5h-1v1h-4v0.5h-1v-1h-2v1h-3v1.5h-1v0.5h-1Z" fill="#f3e6f5"/></svg><span class="lb">W...</span></div><div class="c a lav" style="left:621.7px;top:1129px;width:13.7px"><i class="ln"></i><svg class="wv" width="13.7" height="30"><path d="M0,10h1v0.5h1v-1h1v3.5h4v-2h1v0.5h1v-2.5h1v0.5h1v-1h1v1.5h1v1.5h1V16.5h-1v1h-1v2.5h-1v-2h-1v1h-1v-2h-2v-2h-4v3h-1v-0.5h-1v0.5h-1Z" fill="#f3e6f5"/></svg></div><div class="c a lav" style="left:644.1px;top:1129px;width:31.9px"><i class="ln"></i><svg class="wv" width="31.9" height="30"><path d="M0,12h2v-1.5h1v1.5h1v-1h1v-1h2v1.5h1v-1h2v0.5h1v0.5h1v-0.5h1v1h1v-0.5h1v0.5h1v-0.5h1v1.5h1v-1h2v0.5h2v0.5h1v-2.5h1v1h1v1.5h2v-0.5h1v0.5h2v-0.5h2V16h-1v-0.5h-1v-0.5h-2v0.5h-1v-0.5h-2v1.5h-1v0.5h-1v-2h-1v0.5h-1v-0.5h-1v1.5h-1v-0.5h-1v-1h-1v1.5h-1v-0.5h-1v0.5h-1v-0.5h-1v0.5h-1v-0.5h-1v1.5h-2v0.5h-1v-1h-1v1h-1v0.5h-1v-1.5h-1v-1h-1v2h-1v-2h-2Z" fill="#f3e6f5"/></svg><span class="lb">Wi...</span></div><div class="c a lav" style="left:678px;top:1129px;width:30.2px"><i class="ln"></i><svg class="wv" width="30.2" height="30"><path d="M0,11.5h1v-0.5h1v-0.5h1v-0.5h1v0.5h1v-1h1v1.5h1v0.5h2v-1h1v-1h1v1.5h1v-0.5h1v-1h1v0.5h1v-0.5h1v1.5h2v1h1v-1.5h1v-1h1v1h1v0.5h1v1h2v-1.5h1v-0.5h1v-1h2v0.5h1V19h-1v-0.5h-1v0.5h-1v-1h-1v-1h-1v-1h-2v1h-1v0.5h-1v0.5h-1v-0.5h-1v-1h-1v0.5h-2v1.5h-1v-0.5h-1v0.5h-1v-0.5h-1v-1.5h-1v1.5h-2v-1.5h-3v2h-1v-1h-4v-1h-1Z" fill="#f3e6f5"/></svg><span class="lb">Wi...</span></div><div class="c a lav" style="left:709.8px;top:1129px;width:21.4px"><i class="ln"></i><svg class="wv" width="21.4" height="30"><path d="M0,11.5h1v0.5h1v-1.5h1v1h6v0.5h1v-1h1v2h1v-1h3v0.5h1v0.5h1v-1h1v-0.5h1v1h1v0.5h1V15h-1v0.5h-1v1.5h-1v-1h-1v-0.5h-2v0.5h-3v-1h-1v1.5h-1v-1h-1v1h-1v0.5h-2v-0.5h-3v1.5h-1v-2h-1v0.5h-1Z" fill="#f3e6f5"/></svg></div><div class="c a lav" style="left:743px;top:1129px;width:35.1px"><i class="ln"></i><svg class="wv" width="35.1" height="30"><path d="M0,10.5h1v-0.5h1v1h1v-1.5h1v-0.5h1v2h1v-1h1v2h1v-0.5h2v0.5h1v-1h1v0.5h1v-0.5h2v-0.5h1v-0.5h1v1h1v0.5h1v0.5h1v-0.5h1v-1h1v1h1v0.5h3v-0.5h1v-1h1v1h2v0.5h1v1h4V15h-4v1h-1v0.5h-2v1h-1v-1h-1v-0.5h-3v0.5h-1v1.5h-1v-1.5h-1v-0.5h-1v1h-1v0.5h-2v-0.5h-2v-0.5h-1v0.5h-2v-1h-1v0.5h-2v-1h-1v3h-1v-1.5h-1v1h-2v-0.5h-1v0.5h-1v-0.5h-1Z" fill="#f3e6f5"/></svg><span class="lb">Wit...</span></div><div class="c a lav" style="left:779.9px;top:1129px;width:27.5px"><i class="ln"></i><svg class="wv" width="27.5" height="30"><path d="M0,12h1v-1h2v1.5h2v-0.5h1v-0.5h2v0.5h1v-1h1v1h1v-0.5h1v1h1v0.5h1v-0.5h1v-0.5h1v0.5h1v-1h1v-2.5h1v2h1v-1.5h1v0.5h1v-1h1v2h1v0.5h2v-1h1v1h1V16.5h-1v0.5h-2v-0.5h-1v1h-1v1.5h-1v-1.5h-1v1h-1v-1.5h-1v1.5h-1v-2h-1v-1.5h-1v1h-1v-1h-2v0.5h-1v1h-1v-1h-1v1h-1v-0.5h-1v0.5h-2v-1h-3v1.5h-2v-1.5h-1Z" fill="#f3e6f5"/></svg><span class="lb">W...</span></div><div class="c a apurp" style="left:816px;top:1129px;width:22.1px"><i class="ln"></i><svg class="wv" width="22.1" height="30"><path d="M0,12h1v-1.5h1v1.5h1v-0.5h1v1.5h3v-1.5h1v-2.5h2v1h1v2h1v-1.5h1v-0.5h1v0.5h1v-0.5h1v1.5h3v-1.5h1v1h1v1h1V16h-1v0.5h-1v1h-1v-1h-1v-0.5h-1v0.5h-1v2h-1v-1.5h-1v0.5h-2v-1.5h-1v2h-1v1h-2v-3h-1v-1h-3v1.5h-2v1h-1v-1.5h-1Z" fill="#f1e6f2"/></svg></div><div class="c a apurp" style="left:840.6px;top:1129px;width:21.9px"><i class="ln"></i><svg class="wv" width="21.9" height="30"><path d="M0,12.5h2v-0.5h1v0.5h3v-1h1v-0.5h1v1.5h1v-0.5h1v-0.5h1v-1.5h2v0.5h1v1h1v-0.5h2v0.5h1v-1h2v1h1v-0.5h1V17h-1v-0.5h-1v0.5h-1v1h-1v-1.5h-1v0.5h-1v-0.5h-1v-0.5h-1v2h-1v0.5h-1v-1h-1v-1h-1v-0.5h-2v1h-1v-1h-1v-0.5h-3v0.5h-1v-0.5h-2Z" fill="#f1e6f2"/></svg></div><div class="c a teal" style="left:317.6px;top:1187px;width:25.8px"><i class="ln"></i><svg class="wv" width="25.8" height="30"><path d="M0,12.5h1v-1h1v-0.5h2v-1.5h1v2h2v-1h1v1h1v-1h1v2h1v-0.5h1v1h2v-1.5h2v0.5h1v-0.5h1v-0.5h1v0.5h2v1.5h5V14.5h-1v0.5h-4v2h-1v-1h-1v0.5h-2v-0.5h-1v0.5h-2v-1.5h-2v1h-1v-0.5h-1v2h-1v-1h-1v1h-1v-0.5h-1v-0.5h-1v2.5h-1v-2h-1v-0.5h-1v-0.5h-1v-0.5h-1Z" fill="#c3f3f1"/></svg></div><div class="c a teal" style="left:356.6px;top:1187px;width:20.5px"><i class="ln"></i><svg class="wv" width="20.5" height="30"><path d="M0,12h1v-0.5h1v0.5h4v0.5h1v-0.5h1v-0.5h2v-0.5h1v-0.5h1v0.5h1v-0.5h1v-1h1v2h1v0.5h1v-1h1v1h1v-1h1V17h-1v-1h-1v1h-1v-1.5h-1v1h-1v2.5h-1v-1h-1v-1h-1v1h-1v-0.5h-1v-1h-2v-0.5h-1v-0.5h-1v0.5h-5v-0.5h-1Z" fill="#c3f3f1"/></svg></div><div class="c a teal" style="left:378.7px;top:1187px;width:10.8px"><i class="ln"></i></div><div class="c a teal" style="left:401.6px;top:1187px;width:29.3px"><i class="ln"></i><svg class="wv" width="29.3" height="30"><path d="M0,12h1v-1h1v0.5h1v-0.5h2v0.5h1v-2h2v2.5h1v-0.5h1v-2.5h2v1.5h2v1h1v1.5h2v-0.5h1v0.5h3v-0.5h1v-1h1v0.5h2v0.5h1v-0.5h1v-1h2V17h-2v-1h-1v-0.5h-1v0.5h-2v0.5h-1v-1h-1v-1h-1v0.5h-2v0.5h-1v-0.5h-2v2h-2v1h-3v-1.5h-1v-0.5h-1v3h-1v-0.5h-1v-2.5h-1v1h-2v-0.5h-2v-0.5h-1Z" fill="#c3f3f1"/></svg><span class="lb">6 ...</span></div><div class="c a dteal" style="left:463.5px;top:1187px;width:35.1px"><i class="ln"></i><svg class="wv" width="35.1" height="30"><path d="M0,10h1v1h1v-2.5h2v0.5h1v2.5h1v0.5h1v-1.5h2v-1h1v1h1v1h1v1h1v-1h1v-0.5h1v-0.5h1v1h1v0.5h1v-0.5h1v1h1v-1h1v0.5h1v-1h2v1h1v0.5h1v0.5h1v-0.5h2v-0.5h1v0.5h1v0.5h1v-1h1v-1h1v0.5h1V16.5h-2v-0.5h-1v-1h-1v0.5h-1v1h-1v-1h-4v1h-1v0.5h-2v-1h-1v0.5h-1v-1h-1v1h-1v-0.5h-1v0.5h-1v1h-1v-1h-2v-1h-1v0.5h-1v1h-1v2h-1v-2h-1v0.5h-1v-1.5h-1v0.5h-1v1.5h-1v1h-2v-2.5h-1v2h-1Z" fill="#b9eeec"/></svg><span class="lb">7 - ...</span></div><div class="c a dteal" style="left:520.7px;top:1187px;width:26px"><i class="ln"></i><svg class="wv" width="26" height="30"><path d="M0,11h1v-1.5h1v1h3v-1h1v1.5h1v1h1v-0.5h1v-1h1v0.5h1v-0.5h2v1.5h1v-2h1v-1h1v3.5h1v-1.5h1v0.5h1v-1h2v0.5h2v-0.5h1v-1h1v2.5h1V16h-1v2.5h-1v-1.5h-4v0.5h-1v-1.5h-1v0.5h-1v-1h-1v3.5h-1v-1h-1v-2h-1v2h-1v-1h-1v-0.5h-1v1.5h-1v-2h-2v1h-1v1h-2v-0.5h-1v-0.5h-1v2h-1v-2h-1Z" fill="#b9eeec"/></svg></div><div class="c a dteal" style="left:1373.6px;top:1187px;width:20.1px"><i class="ln"></i><svg class="wv" width="20.1" height="30"><path d="M0,13.5h2v-1h1v1h6v-1h1v1h2v-1h1v1h5v-1h1v1h1V14.5h-1v1h-1v-1h-5v1h-1v-1h-2v1h-1v-1h-6v1h-1v-1h-2Z" fill="#b9eeec"/><path d="M0,18.5H20.1" stroke="rgba(255,255,255,.28)" stroke-width="1" fill="none"/></svg></div><div class="c a dteal" style="left:1624.6px;top:1187px;width:18.2px"><i class="ln"></i><svg class="wv" width="18.2" height="30"><path d="M0,12.5h1v1h13v-1h1v1h2v-1h1V15.5h-1v-1h-2v1h-1v-1h-13v1h-1Z" fill="#b9eeec"/><path d="M0,18.5H18.2" stroke="rgba(255,255,255,.28)" stroke-width="1" fill="none"/></svg></div><div class="c a teal" style="left:1893.7px;top:1187px;width:58.6px"><i class="ln"></i><svg class="fd" width="58.6" height="30"><polygon points="46.6,0 58.6,0 58.6,30"/></svg><svg class="wv" width="58.6" height="30"><path d="M0,12h2v1h6v-3h1v-0.5h1v-0.5h1v1.5h1v-0.5h1v1.5h1v1.5h5v-2.5h2v0.5h3v1h1v0.5h1v-0.5h1v-1h1v1h3v-0.5h2v-1.5h1v-0.5h1v2h1v0.5h1v-1h1v-0.5h1v0.5h1v0.5h1v-1.5h1v2h1v-0.5h1v-0.5h2v1h2v-0.5h1v-0.5h1v0.5h1v-1h1v-1h1v2h1v-1h1v-0.5h1v-1.5h1v2.5h1v-2h1V19h-1v-1.5h-1v1h-1v-0.5h-2v-1h-1v1h-1v-1h-1v-0.5h-1v0.5h-1v-0.5h-2v-0.5h-1v1.5h-2v-1h-2v1.5h-1v-1h-1v-0.5h-1v0.5h-2v-1h-1v0.5h-1v1.5h-1v0.5h-1v-2h-1v0.5h-1v-1h-1v0.5h-1v-0.5h-1v1.5h-1v-1h-1v-0.5h-2v1.5h-1v-0.5h-1v0.5h-3v-2.5h-5v2h-1v0.5h-2v1.5h-2v-1h-1v-3.5h-1v0.5h-5v1h-2Z" fill="#c3f3f1"/></svg><span class="lb wi"><svg class="ic xl"><use href="#sl"/></svg>15 -...</span></div><div class="c a dteal" style="left:340px;top:1245px;width:12.3px"><i class="ln"></i><svg class="wv" width="12.3" height="30"><path d="M0,9.5h1v-1h1v0.5h2v2h2v-1h1v1h1v-0.5h1v1h1v-2h1v1h1V17.5h-1v1h-1v-1.5h-1v0.5h-1v-1h-1v1.5h-1v-1h-2v2.5h-1v-0.5h-1v0.5h-1v-1.5h-1Z" fill="#b9eeec"/></svg></div><div class="c a dteal sq" style="left:353.3px;top:1245px;width:5.9px"><i class="ln"></i></div><div class="c a dteal" style="left:387.9px;top:1245px;width:15.6px"><i class="ln"></i><svg class="wv" width="15.6" height="30"><path d="M0,12.5h1v0.5h2v-0.5h1v0.5h1v-1.5h1v1.5h3v-0.5h2v0.5h5V15h-6v1h-1v-1h-3v1.5h-1v-1h-1v-0.5h-4Z" fill="#b9eeec"/><path d="M0,18.5H15.6" stroke="rgba(255,255,255,.28)" stroke-width="1" fill="none"/></svg></div><div class="c a dteal" style="left:428.9px;top:1245px;width:38.7px"><i class="ln"></i><svg class="wv" width="38.7" height="30"><path d="M0,11h1v-0.5h1v-0.5h2v2h1v-0.5h1v-0.5h1v0.5h1v1.5h2v-1h2v0.5h1v0.5h2v-1h1v-0.5h1v-0.5h2v0.5h1v0.5h2v-1h1v0.5h2v-1h3v0.5h1v-1h1v1.5h1v1h2v-1h1v0.5h1v-1h1v1h2v-0.5h1V16.5h-1v-0.5h-2v1h-1v-1h-2v-0.5h-2v1h-1v2h-1v-1.5h-1v1h-3v-1h-1v-1h-1v0.5h-1v-0.5h-2v0.5h-1v0.5h-2v-0.5h-2v-1.5h-2v0.5h-1v0.5h-2v-1h-2v1.5h-1v0.5h-1v-0.5h-1v-0.5h-1v2.5h-2v-1.5h-2Z" fill="#b9eeec"/></svg><span class="lb">5 - ...</span></div><div class="c a dteal" style="left:494.9px;top:1245px;width:26.4px"><i class="ln"></i><svg class="wv" width="26.4" height="30"><path d="M0,10h1v0.5h1v-2h1v2.5h1v-0.5h1v1h2v-0.5h1v0.5h1v0.5h1v0.5h1v-1h2v-1.5h1v1h1v-2h1v0.5h1v1.5h1v-2h1v1.5h1v-1h1v1.5h3v-0.5h1v0.5h1V16.5h-1v1h-1v-0.5h-3v1h-1v-0.5h-1v1h-1v-1.5h-1v1h-1v1h-1v-2h-1v0.5h-1v-0.5h-1v-0.5h-1v-0.5h-2v0.5h-2v-0.5h-1v1h-1v1h-1v-1.5h-1v3h-1v-2.5h-1v1h-1Z" fill="#b9eeec"/></svg></div><div class="c a dteal" style="left:546.1px;top:1245px;width:36.5px"><i class="ln"></i><svg class="wv" width="36.5" height="30"><path d="M0,11.5h1v-1.5h1v-0.5h3v0.5h1v0.5h1v-0.5h2v3h5v-2.5h1v-1.5h1v1h1v1h1v-1.5h1v0.5h1v-1h1v1h1v0.5h2v-0.5h1v1h1v-1h2v3h4v-0.5h1v0.5h1v-1h2V16h-2v-1h-1v0.5h-1v-1h-1v0.5h-2v-0.5h-1v3.5h-1v0.5h-1v-1.5h-1v1.5h-1v-1h-2v1h-2v-1h-1v1.5h-1v-2.5h-1v1.5h-1v0.5h-1v-1.5h-1v-2.5h-1v0.5h-4v3h-1v-0.5h-3v0.5h-1v1h-2v-1h-1v-1.5h-1Z" fill="#b9eeec"/></svg><span class="lb">9 - ...</span></div><div class="c a mag" style="left:330.9px;top:1303px;width:568.1px"><i class="ln"></i><svg class="wv" width="568.1" height="30"><path d="M0,12.5h2v1h3v-1h1v1h5v-1h1v1h8v-1h1v1h1v-1h1v1h7v-1h1v1h4v-1h2v1h3v-1h2v1h2v-1h1v1h1v-1h1v1h7v-1h1v1h2v-1h1v1h11v-1h1v1h1v-1h3v1h2v-1h1v1h8v-1h1v1h1v-1h1v1h6v-1h3v1h1v-1h1v1h2v-1h1v1h3v-1h2v1h1v-1h2v1h7v-1h2v1h3v-1h4v1h2v-1h2v1h1v-1h1v1h2v-1h1v1h3v-1h3v1h1v-1h1v1h1v-1h1v1h3v-1h1v1h1v-1h1v1h3v-1h1v1h4v-1h1v1h3v-1h1v1h4v-1h1v1h4v-1h1v1h3v-1h3v1h3v-1h1v1h7v-1h1v1h7v-1h1v1h7v-1h1v1h1v-1h1v1h1v-1h1v1h1v-1h1v1h1v-1h1v1h1v-1h1v1h2v-1h1v1h3v-1h1v1h2v-1h1v1h1v-1h1v1h8v-1h1v1h1v-1h3v1h1v-1h1v1h2v-1h2v1h2v-1h1v1h5v-1h1v1h1v-1h1v1h1v-1h2v1h1v-1h1v1h3v-1h1v1h1v-1h1v1h1v-1h1v1h5v-1h1v1h3v-1h2v1h5v-1h3v1h7v-1h1v1h2v-1h1v1h1v-1h3v1h1v-1h1v1h1v-1h1v1h2v-1h1v1h2v-1h1v1h9v-1h2v1h1v-1h1v1h8v-1h2v1h6v-1h1v1h6v-1h1v1h3v-1h1v1h5v-1h1v1h2v-1h1v1h2v-1h2v1h7v-1h1v1h2v-1h1v1h1v-1h1v1h1v-1h2v1h8v-1h1v1h3v-1h1v1h4v-1h1v1h3v-1h1v1h6v-1h1v1h6v-1h1v1h3v-1h1v1h2v-1h1v1h5v-1h1v1h1v-1h1v1h1v-1h1v1h2v-1h1v1h7v-1h1v1h16v-1h1v1h1v-1h1v1h1v-1h1v1h6v-1h1v1h1v-1h1v1h1v-1h1v1h1v-1h5v1h5v-1h1v1h2v-1h1v1h1v-1h1v1h8v-1h3v1h3v-1h1v1h2v-1h1v1h11v-1h1v1h2v-1h1v1h3v-0.5h1v-2.5h1v-3h3v0.5h1v-2h1v0.5h1v0.5h1v-1h1v0.5h1v-0.5h1v0.5h1v1.5h1v-2h1v2h1v-1h1v1.5h1v1h1v0.5h2v1.5h2v1h2v1h2v-1h2v1h3V14.5h-3v0.5h-2v-0.5h-2v1h-2v1h-2v1h-1v0.5h-1v0.5h-1v2h-1v-0.5h-1v0.5h-1v1.5h-1v-1.5h-1v0.5h-1v2h-1v-2.5h-1v1.5h-1v-2h-1v2.5h-1v-0.5h-1v-2h-1v0.5h-1v-0.5h-2v-2.5h-1v-2.5h-1v-0.5h-3v1h-1v-1h-2v1h-1v-1h-11v1h-1v-1h-2v1h-1v-1h-3v1h-3v-1h-8v0.5h-1v-0.5h-1v1h-1v-1h-2v1h-1v-1h-5v1h-1v-0.5h-1v0.5h-1v-0.5h-1v0.5h-1v-1h-1v0.5h-1v-0.5h-1v1h-1v-1h-1v0.5h-1v-0.5h-6v1h-1v-1h-1v1h-1v-1h-1v1h-1v-1h-16v1h-1v-1h-7v1h-1v-1h-2v0.5h-1v-0.5h-1v1h-1v-1h-1v1h-1v-1h-5v1h-1v-1h-2v1h-1v-1h-3v1h-1v-1h-6v0.5h-1v-0.5h-6v1h-1v-1h-3v0.5h-1v-0.5h-4v0.5h-1v-0.5h-3v1h-1v-1h-8v1h-1v-0.5h-1v-0.5h-1v1h-1v-1h-1v1h-1v-1h-2v1h-1v-1h-7v1h-1v-0.5h-1v-0.5h-2v0.5h-1v-0.5h-2v1h-1v-1h-5v1h-1v-1h-3v1h-1v-1h-6v1h-1v-1h-6v1h-2v-1h-8v0.5h-1v-0.5h-1v0.5h-1v0.5h-1v-1h-9v0.5h-1v-0.5h-2v1h-1v-1h-2v0.5h-1v-0.5h-1v0.5h-1v-0.5h-1v1h-2v-0.5h-1v-0.5h-1v1h-1v-1h-2v1h-1v-1h-7v1h-3v-1h-5v1h-2v-1h-3v0.5h-1v-0.5h-5v1h-1v-1h-1v0.5h-1v-0.5h-1v1h-1v-1h-3v1h-1v-1h-1v0.5h-1v0.5h-1v-1h-1v1h-1v-1h-1v0.5h-1v-0.5h-5v0.5h-1v-0.5h-2v0.5h-1v0.5h-1v-1h-2v1h-1v-1h-1v1h-1v-0.5h-1v0.5h-1v-1h-1v1h-1v-1h-8v0.5h-1v-0.5h-1v0.5h-1v-0.5h-2v0.5h-1v-0.5h-3v0.5h-1v-0.5h-2v0.5h-1v-0.5h-1v1h-1v-1h-1v1h-1v-1h-1v0.5h-1v-0.5h-1v0.5h-1v-0.5h-1v0.5h-1v-0.5h-7v0.5h-1v-0.5h-7v0.5h-1v-0.5h-7v0.5h-1v-0.5h-3v1h-1v-0.5h-2v-0.5h-3v1h-1v-1h-4v1h-1v-1h-4v1h-1v-1h-3v1h-1v-1h-4v1h-1v-1h-3v1h-1v-1h-1v1h-1v-1h-3v1h-1v-1h-1v1h-1v-1h-1v1h-3v-1h-3v1h-1v-1h-2v1h-1v-1h-1v0.5h-1v0.5h-1v-1h-2v0.5h-2v0.5h-1v-0.5h-1v-0.5h-3v0.5h-2v-0.5h-7v0.5h-1v0.5h-1v-1h-1v1h-2v-1h-3v1h-1v-1h-2v1h-1v-1h-1v0.5h-3v-0.5h-6v1h-1v-1h-1v0.5h-1v-0.5h-8v1h-1v-1h-2v1h-1v-0.5h-1v0.5h-1v-1h-1v0.5h-1v-0.5h-11v1h-1v-1h-2v1h-1v-1h-7v1h-1v-1h-1v0.5h-1v-0.5h-2v1h-2v-1h-3v1h-1v-0.5h-1v-0.5h-4v0.5h-1v-0.5h-7v1h-1v-1h-1v0.5h-1v-0.5h-8v0.5h-1v-0.5h-5v0.5h-1v-0.5h-3v1h-2Z" fill="#fbe3ee"/><path d="M0,19.5H568.1" stroke="rgba(255,255,255,.38)" stroke-width="1" fill="none"/></svg><span class="lb wi"><svg class="ic xk"><use href="#sk"/></svg>Overture.mp3</span></div><i class="dot" style="left:610px;top:1311px"></i><i class="dot" style="left:615px;top:1318px"></i><i class="dot" style="left:618px;top:1313px"></i><i class="dot" style="left:633px;top:1312px"></i><i class="dot" style="left:637px;top:1319px"></i><i class="dot" style="left:640px;top:1314px"></i><i class="dot" style="left:729px;top:1313px"></i><i class="dot" style="left:734px;top:1319px"></i><i class="dot" style="left:737px;top:1314px"></i><i class="dot" style="left:805px;top:1313px"></i><i class="dot" style="left:809px;top:1319px"></i><i class="dot" style="left:812px;top:1314px"></i><i class="dot" style="left:861px;top:1312px"></i><i class="dot" style="left:859px;top:1319px"></i><div class="c a mag" style="left:904.5px;top:1303px;width:9.2px"><i class="ln"></i></div><div class="c a mag" style="left:915.2px;top:1303px;width:8.8px"><i class="ln"></i></div><div class="c a mag" style="left:926px;top:1303px;width:21px"><i class="ln"></i><svg class="wv" width="21" height="30"><path d="M0,6.5h1v-2h1v0.5h1v5.5h2v-1.5h1v-1h1v0.5h1v-2.5h1v3.5h1v2h1v-1.5h1v1h1v-0.5h1v1.5h2v-4h1v-2.5h1v-0.5h1v4.5h1v-2h1V20.5h-1v-1.5h-1v4.5h-1v-1.5h-1v-1h-1v-5h-1v0.5h-1v0.5h-2v1.5h-1v-1.5h-1v2h-1v2h-1v-1.5h-1v0.5h-1v-0.5h-1v-2.5h-1v1h-1v4h-1v1h-1v-1h-1Z" fill="#fbe3ee"/></svg></div><div class="c a mag" style="left:948.8px;top:1303px;width:16.2px"><i class="ln"></i><svg class="wv" width="16.2" height="30"><path d="M0,8h1v-2.5h1v1h1v3h1v-1.5h1v5h5v-2h1v-0.5h1v-4h1v3h1v1h1v-2.5h1V20.5h-1v-3h-1v1.5h-1v2h-1v-4h-2v-2h-5v5h-1v-1h-1v1.5h-1v3h-1v-2.5h-1Z" fill="#fbe3ee"/></svg></div><div class="c a mag" style="left:967px;top:1303px;width:35px"><i class="ln"></i><svg class="wv" width="35" height="30"><path d="M0,13h10v-4h1v-0.5h1v-0.5h1v-1h1v2.5h2v-1h1v1h2v1h2v1.5h1v-0.5h1v1.5h1v0.5h11V14.5h-1v0.5h-1v-0.5h-1v0.5h-1v-0.5h-4v0.5h-1v-0.5h-2v0.5h-1v1.5h-1v-0.5h-1v1h-1v0.5h-1v1h-1v1h-1v0.5h-1v-1h-1v-0.5h-1v3h-1v-1.5h-2v-1.5h-1v-3.5h-2v0.5h-1v-0.5h-7Z" fill="#fbe3ee"/></svg><i class="ds"></i><span class="lb" style="padding-left:6px">12 ...</span></div><div class="c a mag" style="left:1004px;top:1303px;width:13.4px"><i class="ln"></i></div><div class="c a mag" style="left:1148.6px;top:1303px;width:300.4px"><i class="ln"></i><svg class="wv" width="300.4" height="30"><path d="M0,13.5h2v-1h1v1h4v-1h1v1h2v-1h2v1h1v-1h2v1h3v-2h1v-0.5h1v-0.5h1v0.5h2v-0.5h3v-0.5h4v-0.5h1v0.5h1v1h4v0.5h2v-0.5h1v0.5h1v-1h1v0.5h1v-0.5h1v-0.5h1v-0.5h2v0.5h1v-0.5h3v0.5h1v0.5h1v0.5h1v-0.5h4v0.5h3v-0.5h3v-1h2v-1h3v1h2v-0.5h1v1h1v0.5h2v1h1v-1h1v0.5h1v-0.5h1v-0.5h2v-0.5h1v-1h2v0.5h1v-1h1v-1h2v1.5h1v-1h1v1h2v-0.5h1v2h1v-0.5h1v1.5h2v0.5h2v2h7v-1h1v1h3v-1h3v1h16v-1h2v1h1v-1h4v1h12v-1h1v1h2v-1h2v1h3v-1h1v1h3v-1h1v1h5v-1h1v1h6v-1h1v1h3v-1h1v1h3v-1h1v1h4v-1h1v1h11v-1h1v1h2v-1h1v1h4v-1h1v1h2v-1h1v1h1v-1h1v1h2v-1h1v1h3v-1h1v1h5v-1h2v1h9v-1h2v1h1v-1h1v1h1v-1h1v1h4v-1h1v1h1v-1h1v1h3v-1h1v1h3v-1h1v1h9v-1h1v1h1v-1h1v1h4v-1h1v1h1v-1h1v1h3v-1h2v1h4v-1h1v0.5h2v-1h1v-0.5h1v-0.5h1v-0.5h1v-0.5h1v-0.5h1v0.5h1v-1h2v-1.5h1v1h1v1.5h1v1.5h1v1h1V15.5h-1v1h-1v1.5h-1v2h-1v0.5h-1v-1h-1v-1h-2v-0.5h-1v0.5h-1v-1h-1v-0.5h-1v-0.5h-1v-0.5h-1v-1h-2v0.5h-1v-1h-4v0.5h-1v0.5h-1v-1h-3v1h-1v-1h-1v0.5h-1v-0.5h-4v1h-1v-1h-1v1h-1v-1h-9v1h-1v-1h-3v1h-1v-1h-3v1h-1v-1h-1v1h-1v-1h-4v1h-1v-1h-1v1h-1v-1h-1v1h-2v-1h-9v0.5h-1v0.5h-1v-1h-5v1h-1v-1h-3v1h-1v-1h-2v1h-1v-1h-1v1h-1v-1h-2v1h-1v-1h-4v1h-1v-1h-2v1h-1v-1h-11v1h-1v-1h-4v1h-1v-1h-3v1h-1v-1h-3v0.5h-1v-0.5h-6v1h-1v-1h-5v1h-1v-1h-3v0.5h-1v-0.5h-3v1h-1v-0.5h-1v-0.5h-2v1h-1v-1h-12v0.5h-1v0.5h-3v-1h-1v1h-1v-0.5h-1v-0.5h-16v1h-1v-0.5h-2v-0.5h-3v1h-1v-1h-7v2h-2v0.5h-1v0.5h-1v0.5h-1v0.5h-1v1.5h-1v-1h-2v1.5h-1v-1.5h-1v2.5h-2v-2h-1v-1h-1v1.5h-1v-0.5h-1v-1.5h-1v0.5h-2v-1h-2v-0.5h-1v-0.5h-1v0.5h-1v0.5h-1v0.5h-1v1.5h-1v-1h-2v1h-1v-0.5h-1v-0.5h-2v-0.5h-1v0.5h-1v-1.5h-1v0.5h-1v-0.5h-2v0.5h-1v-0.5h-1v0.5h-3v-0.5h-1v1h-1v-0.5h-1v1h-2v-0.5h-2v1h-1v-0.5h-1v-0.5h-1v-0.5h-2v0.5h-1v-1.5h-1v0.5h-1v-0.5h-5v0.5h-1v1h-1v1h-1v-0.5h-1v-0.5h-5v-0.5h-2v-1h-1v1h-1v-1h-2v-2h-3v0.5h-2v-0.5h-1v1h-2v-1h-2v0.5h-1v-0.5h-4v0.5h-1v-0.5h-2Z" fill="#fbe3ee"/><path d="M0,19.5H300.4" stroke="rgba(255,255,255,.38)" stroke-width="1" fill="none"/></svg><i class="ds"></i><span class="lb wi"><svg class="ic xk"><use href="#sk"/></svg>Solstice.mp3</span></div><i class="dot" style="left:1161px;top:1312px"></i><i class="dot" style="left:1160px;top:1318px"></i><i class="dot" style="left:1241px;top:1312px"></i><i class="dot" style="left:1245px;top:1318px"></i><i class="dot" style="left:1433px;top:1312px"></i><i class="dot" style="left:1437px;top:1318px"></i><div class="c a mag" style="left:1451px;top:1303px;width:13px"><i class="ln"></i></div><div class="c a mag" style="left:1549.6px;top:1303px;width:535.5px"><i class="ln"></i><svg class="fd" width="535.5" height="30"><polygon points="0,0 16,0 0,30"/></svg><svg class="wv" width="535.5" height="30"><path d="M0,13.5h2v-1h2v1h1v-1h1v1h1v-1h1v1h1v-1h2v1h1v-1h1v1h4v-1h1v1h1v-1h1v1h3v-1h1v1h1v-1h1v1h3v-1h2v1h1v-1h1v1h1v-1h2v1h1v-1h1v1h3v-1h1v1h4v-1h2v1h1v-1h1v1h4v-1h2v1h3v-1h1v1h3v-1h1v1h4v-1h1v1h3v-1h1v1h5v-1h1v1h1v-1h1v1h2v-1h1v1h2v-1h1v1h5v-1h1v1h4v-1h3v1h2v-1h2v1h3v-1h2v1h11v-1h1v1h3v-1h1v1h1v-1h1v1h6v-1h1v1h2v-1h1v1h6v-1h1v1h4v-1h2v1h1v-1h2v1h2v-1h1v1h7v-1h1v1h2v-1h1v1h2v-1h2v1h1v-1h1v1h2v-1h1v1h2v-1h1v1h5v-1h2v1h6v-1h1v1h2v-1h1v1h9v-1h1v1h2v-1h1v1h4v-1h1v1h3v-1h1v1h8v-1h1v1h1v-1h1v1h1v-1h2v1h5v-1h1v1h4v-1h1v1h1v-1h1v1h1v-1h2v1h6v-1h1v1h3v-1h1v1h7v-1h2v1h3v-1h2v1h4v-1h1v1h2v-1h1v1h3v-1h1v1h7v-1h1v1h6v-1h1v1h1v-1h2v1h2v-1h2v1h10v-1h1v1h1v-1h1v1h17v-1h1v1h9v-1h1v1h1v-1h1v1h1v-1h1v1h1v-1h3v1h5v-1h2v1h3v-1h1v1h4v-1h1v1h2v-1h2v1h6v-1h1v1h1v-1h1v1h2v-1h1v1h5v-1h1v1h4v-1h1v1h3v-1h1v1h1v-1h1v1h3v-1h2v1h5v-1h1v1h6v-1h2v1h8v-1h2v1h5v-1h1v1h9v-1h1v1h9v-1h1v1h9v-1h1v1h2v-1h1v1h5v-1h1v1h3v-1h1v1h9v-1h3v-1h1v-4h2v0.5h1v1.5h1v0.5h3v1.5h2v0.5h1v0.5h1v0.5h1v0.5h2v-1h4v1h1v-1h1v1h10v-1h2v1h8V14.5h-8v0.5h-1v0.5h-1v-1h-10v1h-1v-1h-1v0.5h-1v0.5h-2v-0.5h-1v-0.5h-2v0.5h-1v0.5h-1v0.5h-1v0.5h-2v1.5h-1v-0.5h-1v1h-1v0.5h-1v1.5h-3v-4h-1v-1.5h-2v0.5h-1v-1h-9v0.5h-1v-0.5h-3v1h-1v-1h-5v0.5h-1v-0.5h-2v1h-1v-1h-9v1h-1v-1h-9v1h-1v-1h-9v1h-1v-1h-5v1h-2v-1h-8v1h-2v-1h-6v0.5h-1v-0.5h-5v1h-2v-1h-3v1h-1v-1h-1v0.5h-1v-0.5h-3v1h-1v-1h-4v1h-1v-1h-5v1h-1v-1h-2v1h-1v-1h-1v1h-1v-1h-6v1h-2v-1h-2v1h-1v-1h-4v0.5h-1v-0.5h-3v0.5h-1v0.5h-1v-1h-5v1h-3v-1h-1v1h-1v-1h-1v1h-1v-1h-1v0.5h-1v-0.5h-9v1h-1v-1h-17v1h-1v-1h-1v0.5h-1v-0.5h-10v0.5h-2v-0.5h-2v0.5h-1v0.5h-1v-1h-1v1h-1v-1h-6v0.5h-1v-0.5h-7v0.5h-1v-0.5h-3v1h-1v-1h-2v0.5h-1v-0.5h-4v0.5h-1v0.5h-1v-1h-3v1h-2v-1h-7v0.5h-1v-0.5h-3v0.5h-1v-0.5h-6v1h-2v-1h-1v0.5h-1v-0.5h-1v1h-1v-1h-4v1h-1v-1h-5v0.5h-1v0.5h-1v-1h-1v0.5h-1v-0.5h-1v1h-1v-1h-8v0.5h-1v-0.5h-3v0.5h-1v-0.5h-4v0.5h-1v-0.5h-2v0.5h-1v-0.5h-9v0.5h-1v-0.5h-2v0.5h-1v-0.5h-6v0.5h-2v-0.5h-5v0.5h-1v-0.5h-2v1h-1v-1h-2v1h-1v-1h-1v0.5h-1v0.5h-1v-1h-2v1h-1v-1h-2v1h-1v-1h-7v1h-1v-1h-2v0.5h-1v0.5h-1v-1h-1v1h-1v-0.5h-1v-0.5h-4v0.5h-1v-0.5h-6v1h-1v-1h-2v0.5h-1v-0.5h-6v1h-1v-1h-1v1h-1v-1h-3v0.5h-1v-0.5h-11v1h-2v-1h-3v1h-1v-0.5h-1v-0.5h-2v1h-1v-0.5h-1v0.5h-1v-1h-4v1h-1v-1h-5v1h-1v-1h-2v0.5h-1v-0.5h-2v1h-1v-1h-1v0.5h-1v-0.5h-5v1h-1v-1h-3v1h-1v-1h-4v1h-1v-1h-3v1h-1v-1h-3v1h-2v-1h-4v0.5h-1v-0.5h-1v1h-1v-0.5h-1v-0.5h-4v1h-1v-1h-3v0.5h-1v-0.5h-1v0.5h-1v0.5h-1v-1h-1v1h-1v-1h-1v1h-1v-0.5h-1v-0.5h-3v1h-1v-1h-1v1h-1v-1h-3v0.5h-1v-0.5h-1v0.5h-1v-0.5h-4v0.5h-1v-0.5h-1v1h-1v-0.5h-1v-0.5h-1v0.5h-1v-0.5h-1v0.5h-1v-0.5h-1v0.5h-1v0.5h-1v-1h-2Z" fill="#fbe3ee"/><path d="M0,19.5H535.5" stroke="rgba(255,255,255,.38)" stroke-width="1" fill="none"/></svg><span class="lb wi"><svg class="ic xk"><use href="#sk"/></svg>Earl Grey Part 1.mp3</span></div><i class="dot" style="left:1632px;top:1312px"></i><i class="dot" style="left:1638px;top:1313px"></i><i class="dot" style="left:1633px;top:1318px"></i><i class="dot" style="left:1640px;top:1318px"></i><i class="dot" style="left:1773px;top:1313px"></i><i class="dot" style="left:1777px;top:1317px"></i><i class="dot" style="left:1882px;top:1312px"></i><i class="dot" style="left:1888px;top:1313px"></i><i class="dot" style="left:1883px;top:1318px"></i><i class="dot" style="left:1890px;top:1319px"></i><i class="dot" style="left:1906px;top:1316px"></i><i class="dot" style="left:1910px;top:1321px"></i><i class="dot" style="left:2039px;top:1313px"></i><i class="dot" style="left:2034px;top:1321px"></i><div class="c a mag" style="left:2162.2px;top:1303px;width:153.4px"><i class="ln"></i><svg class="fd" width="153.4" height="30"><polygon points="147.4,0 153.4,0 153.4,30"/></svg><svg class="wv" width="153.4" height="30"><path d="M0,13.5h2v-1h1v1h2v-1h1v1h1v-1h1v1h5v-1h1v1h9v-1h1v1h2v-1h1v1h1v-1h1v1h4v-1h1v1h3v-1h3v1h2v-1h1v1h3v-1h1v1h1v-1h1v1h1v-1h1v1h6v-1h1v1h1v-1h3v1h1v-1h1v1h13v-1h1v1h5v-1h1v1h10v-1h1v1h3v-1h1v1h5v-1h1v1h9v-1h1v1h4v-1h3v1h7v-1h2v1h1v-3h1v-2h2v0.5h1v1h1v-0.5h1v0.5h1v1h1v0.5h1v0.5h2v0.5h4v1h5v-1h1V15.5h-1v-1h-5v1h-2v-0.5h-1v0.5h-1v0.5h-1v0.5h-3v1.5h-1v0.5h-2v1h-1v0.5h-2v-2.5h-1v-3h-1v1h-2v-1h-7v0.5h-2v0.5h-1v-1h-4v1h-1v-1h-9v1h-1v-1h-5v1h-1v-1h-3v0.5h-1v-0.5h-10v1h-1v-1h-5v1h-1v-1h-13v1h-1v-1h-1v0.5h-1v0.5h-1v-0.5h-1v-0.5h-1v1h-1v-1h-6v1h-1v-1h-1v1h-1v-1h-1v1h-1v-1h-3v0.5h-1v-0.5h-2v1h-2v-0.5h-1v-0.5h-3v0.5h-1v-0.5h-4v0.5h-1v-0.5h-1v1h-1v-1h-2v1h-1v-1h-9v0.5h-1v-0.5h-5v1h-1v-1h-1v1h-1v-1h-2v1h-1v-1h-2Z" fill="#fbe3ee"/><path d="M0,19.5H153.4" stroke="rgba(255,255,255,.38)" stroke-width="1" fill="none"/></svg><span class="lb wi"><svg class="ic xk"><use href="#sk"/></svg>Dont Go.mp3</span></div><i class="dot" style="left:2209px;top:1311px"></i><i class="dot" style="left:2219px;top:1311px"></i><i class="dot" style="left:2208px;top:1317px"></i><i class="dot" style="left:2220px;top:1317px"></i><i class="dot" style="left:2262px;top:1311px"></i><i class="dot" style="left:2273px;top:1311px"></i><i class="dot" style="left:2284px;top:1311px"></i><i class="dot" style="left:2263px;top:1317px"></i><i class="dot" style="left:2274px;top:1317px"></i><i class="dot" style="left:2285px;top:1317px"></i><svg class="mk" style="left:903.4px;top:1321px" width="12" height="13"><path d="M0,1H7V10L4,13L0,11Z" fill="#0a2740"/><path d="M2.5,0H10.5V9L7,12L2.5,10Z" fill="#0a84e6"/></svg><svg class="mk" style="left:914.1px;top:1321px" width="12" height="13"><path d="M0,1H7V10L4,13L0,11Z" fill="#0a2740"/><path d="M2.5,0H10.5V9L7,12L2.5,10Z" fill="#0a84e6"/></svg><svg class="mk" style="left:923.9px;top:1321px" width="12" height="13"><path d="M0,1H7V10L4,13L0,11Z" fill="#0a2740"/><path d="M2.5,0H10.5V9L7,12L2.5,10Z" fill="#0a84e6"/></svg><svg class="mk" style="left:934.6px;top:1321px" width="12" height="13"><path d="M0,1H7V10L4,13L0,11Z" fill="#0a2740"/><path d="M2.5,0H10.5V9L7,12L2.5,10Z" fill="#0a84e6"/></svg><svg class="mk" style="left:961px;top:1321px" width="12" height="13"><path d="M0,1H7V10L4,13L0,11Z" fill="#0a2740"/><path d="M2.5,0H10.5V9L7,12L2.5,10Z" fill="#0a84e6"/></svg></div><div id="hd"></div><i id="hdr"></i><div class="hr" style="top:247px;height:54px"><i class="strip" style="background:#3d74ae"></i><i class="c1"></i><i class="c2" style="bottom:0"></i><i class="c3" style="bottom:0"></i><div class="bd" style="top:15.5px">V10</div><svg style="left:97.6px;top:19.5px" width="12" height="13"><use href="#lock"/></svg><svg style="left:121px;top:18.5px" width="17" height="14"><use href="#asel"/></svg><svg style="left:148.6px;top:19.3px" width="18" height="14"><use href="#film"/></svg></div><div class="hr" style="top:300px;height:54px"><i class="strip" style="background:#3d74ae"></i><i class="c1"></i><i class="c2" style="bottom:0"></i><i class="c3" style="bottom:0"></i><div class="bd" style="top:15.5px">V9</div><svg style="left:97.6px;top:19.5px" width="12" height="13"><use href="#lock"/></svg><svg style="left:121px;top:18.5px" width="17" height="14"><use href="#asel"/></svg><svg style="left:148.6px;top:19.3px" width="18" height="14"><use href="#film"/></svg></div><div class="hr" style="top:353px;height:54px"><i class="strip" style="background:#3d74ae"></i><i class="c1"></i><i class="c2" style="bottom:0"></i><i class="c3" style="bottom:0"></i><div class="bd" style="top:15.5px">V8</div><svg style="left:97.6px;top:19.5px" width="12" height="13"><use href="#lock"/></svg><svg style="left:121px;top:18.5px" width="17" height="14"><use href="#asel"/></svg><svg style="left:148.6px;top:19.3px" width="18" height="14"><use href="#film"/></svg></div><div class="hr" style="top:406px;height:54px"><i class="strip" style="background:#3d74ae"></i><i class="c1"></i><i class="c2" style="bottom:0"></i><i class="c3" style="bottom:0"></i><div class="bd" style="top:15.5px">V7</div><svg style="left:97.6px;top:19.5px" width="12" height="13"><use href="#lock"/></svg><svg style="left:121px;top:18.5px" width="17" height="14"><use href="#asel"/></svg><svg style="left:148.6px;top:19.3px" width="18" height="14"><use href="#film"/></svg></div><div class="hr" style="top:459px;height:54px"><i class="strip" style="background:#3d74ae"></i><i class="c1"></i><i class="c2" style="bottom:0"></i><i class="c3" style="bottom:0"></i><div class="bd" style="top:15.5px">V6</div><svg style="left:97.6px;top:19.5px" width="12" height="13"><use href="#lock"/></svg><svg style="left:121px;top:18.5px" width="17" height="14"><use href="#asel"/></svg><svg style="left:148.6px;top:19.3px" width="18" height="14"><use href="#film"/></svg></div><div class="hr" style="top:512px;height:54px"><i class="strip" style="background:#3d74ae"></i><i class="c1"></i><i class="c2" style="bottom:0"></i><i class="c3" style="bottom:0"></i><div class="bd" style="top:15.5px">V5</div><svg style="left:97.6px;top:19.5px" width="12" height="13"><use href="#lock"/></svg><svg style="left:121px;top:18.5px" width="17" height="14"><use href="#asel"/></svg><svg style="left:148.6px;top:19.3px" width="18" height="14"><use href="#film"/></svg></div><div class="hr" style="top:565px;height:54px"><i class="strip" style="background:#3d74ae"></i><i class="c1"></i><i class="c2" style="bottom:0"></i><i class="c3" style="bottom:0"></i><div class="bd" style="top:15.5px">V4</div><svg style="left:97.6px;top:19.5px" width="12" height="13"><use href="#lock"/></svg><svg style="left:121px;top:18.5px" width="17" height="14"><use href="#asel"/></svg><svg style="left:148.6px;top:19.3px" width="18" height="14"><use href="#film"/></svg></div><div class="hr" style="top:618px;height:54px"><i class="strip" style="background:#3d74ae"></i><i class="c1"></i><i class="c2" style="bottom:0"></i><i class="c3" style="bottom:0"></i><div class="bd" style="top:15.5px">V3</div><svg style="left:97.6px;top:19.5px" width="12" height="13"><use href="#lock"/></svg><svg style="left:121px;top:18.5px" width="17" height="14"><use href="#asel"/></svg><svg style="left:148.6px;top:19.3px" width="18" height="14"><use href="#film"/></svg></div><div class="hr" style="top:671px;height:54px"><i class="strip" style="background:#3d74ae"></i><i class="c1"></i><i class="c2" style="bottom:0"></i><i class="c3" style="bottom:0"></i><div class="bd" style="top:15.5px">V2</div><svg style="left:97.6px;top:19.5px" width="12" height="13"><use href="#lock"/></svg><svg style="left:121px;top:18.5px" width="17" height="14"><use href="#asel"/></svg><svg style="left:148.6px;top:19.3px" width="18" height="14"><use href="#film"/></svg></div><div class="hr" style="top:724px;height:54px"><i class="strip" style="background:#3d74ae"></i><i class="c1"></i><i class="c2" style="bottom:0"></i><i class="c3" style="bottom:0"></i><div class="bs" style="top:15.5px">V1</div><div class="bd" style="top:15.5px">V1</div><svg style="left:97.6px;top:19.5px" width="12" height="13"><use href="#lock"/></svg><svg style="left:121px;top:18.5px" width="17" height="14"><use href="#asel"/></svg><svg style="left:148.6px;top:19.3px" width="18" height="14"><use href="#film"/></svg></div><i style="left:0;top:776px;width:2452px;height:6px;background:linear-gradient(rgba(20,20,23,.55) 0,rgba(20,20,23,.55) 1px,#141417 1px,#141417 2px,#3c3c41 2px,#3c3c41 4px,#141417 4px,#141417 5px,rgba(20,20,23,.7) 5px);z-index:5"></i><div class="hr" style="top:779px;height:59px"><i class="strip" style="background:#3f9e69"></i><i class="c1"></i><i class="c2" style="height:26px"></i><i class="c3" style="height:26px"></i><i class="sub" style="top:25px"></i><div class="bd" style="top:2.8px">A1</div><svg style="left:97.6px;top:5.6px" width="12" height="13"><use href="#lock"/></svg><svg style="left:121px;top:4.6px" width="17" height="14"><use href="#asel"/></svg><div class="sm" style="left:149px;top:3.4px">S</div><div class="sm" style="left:177px;top:3.4px">M</div><span class="vol" style="top:5.6px">2.0</span><span class="nm" style="top:30.5px">Audio 1</span></div><div class="hr" style="top:837px;height:59px"><i class="strip" style="background:#3f9e69"></i><i class="c1"></i><i class="c2" style="height:26px"></i><i class="c3" style="height:26px"></i><i class="sub" style="top:25px"></i><div class="bd" style="top:2.8px">A2</div><svg style="left:97.6px;top:5.6px" width="12" height="13"><use href="#lock"/></svg><svg style="left:121px;top:4.6px" width="17" height="14"><use href="#asel"/></svg><div class="sm" style="left:149px;top:3.4px">S</div><div class="sm" style="left:177px;top:3.4px">M</div><span class="vol" style="top:5.6px">2.0</span><span class="nm" style="top:30.5px">Audio 2</span></div><div class="hr" style="top:895px;height:59px"><i class="strip" style="background:#3f9e69"></i><i class="c1"></i><i class="c2" style="height:26px"></i><i class="c3" style="height:26px"></i><i class="sub" style="top:25px"></i><div class="bd" style="top:2.8px">A3</div><svg style="left:97.6px;top:5.6px" width="12" height="13"><use href="#lock"/></svg><svg style="left:121px;top:4.6px" width="17" height="14"><use href="#asel"/></svg><div class="sm" style="left:149px;top:3.4px">S</div><div class="sm" style="left:177px;top:3.4px">M</div><span class="vol" style="top:5.6px">2.0</span><span class="nm" style="top:30.5px">Audio 3</span></div><div class="hr" style="top:953px;height:59px"><i class="strip" style="background:#3f9e69"></i><i class="c1"></i><i class="c2" style="height:26px"></i><i class="c3" style="height:26px"></i><i class="sub" style="top:25px"></i><div class="bd" style="top:2.8px">A4</div><svg style="left:97.6px;top:5.6px" width="12" height="13"><use href="#lock"/></svg><svg style="left:121px;top:4.6px" width="17" height="14"><use href="#asel"/></svg><div class="sm" style="left:149px;top:3.4px">S</div><div class="sm" style="left:177px;top:3.4px">M</div><span class="vol" style="top:5.6px">2.0</span><span class="nm" style="top:30.5px">Audio 4</span></div><div class="hr" style="top:1011px;height:59px"><i class="strip" style="background:#3f9e69"></i><i class="c1"></i><i class="c2" style="height:26px"></i><i class="c3" style="height:26px"></i><i class="sub" style="top:25px"></i><div class="bd" style="top:2.8px">A5</div><svg style="left:97.6px;top:5.6px" width="12" height="13"><use href="#lock"/></svg><svg style="left:121px;top:4.6px" width="17" height="14"><use href="#asel"/></svg><div class="sm" style="left:149px;top:3.4px">S</div><div class="sm" style="left:177px;top:3.4px">M</div><span class="vol" style="top:5.6px">2.0</span><span class="nm" style="top:30.5px">Audio 5</span></div><div class="hr" style="top:1069px;height:59px"><i class="strip" style="background:#3f9e69"></i><i class="c1"></i><i class="c2" style="height:26px"></i><i class="c3" style="height:26px"></i><i class="sub" style="top:25px"></i><div class="bd" style="top:2.8px">A6</div><svg style="left:97.6px;top:5.6px" width="12" height="13"><use href="#lock"/></svg><svg style="left:121px;top:4.6px" width="17" height="14"><use href="#asel"/></svg><div class="sm" style="left:149px;top:3.4px">S</div><div class="sm" style="left:177px;top:3.4px">M</div><span class="vol" style="top:5.6px">2.0</span><span class="nm" style="top:30.5px">Audio 6</span></div><div class="hr" style="top:1127px;height:59px"><i class="strip" style="background:#3f9e69"></i><i class="c1"></i><i class="c2" style="height:26px"></i><i class="c3" style="height:26px"></i><i class="sub" style="top:25px"></i><div class="bd" style="top:2.8px">A7</div><svg style="left:97.6px;top:5.6px" width="12" height="13"><use href="#lock"/></svg><svg style="left:121px;top:4.6px" width="17" height="14"><use href="#asel"/></svg><div class="sm" style="left:149px;top:3.4px">S</div><div class="sm" style="left:177px;top:3.4px">M</div><span class="vol" style="top:5.6px">2.0</span><span class="nm" style="top:30.5px">Narration</span></div><div class="hr" style="top:1185px;height:59px"><i class="strip" style="background:#3f9e69"></i><i class="c1"></i><i class="c2" style="height:26px"></i><i class="c3" style="height:26px"></i><i class="sub" style="top:25px"></i><div class="bd" style="top:2.8px">A8</div><svg style="left:97.6px;top:5.6px" width="12" height="13"><use href="#lock"/></svg><svg style="left:121px;top:4.6px" width="17" height="14"><use href="#asel"/></svg><div class="sm" style="left:149px;top:3.4px">S</div><div class="sm" style="left:177px;top:3.4px">M</div><span class="fx" style="top:3.6px">fx</span><span class="vol" style="top:5.6px">2.0</span><span class="nm" style="top:30.5px">Radio Voice Effect</span></div><div class="hr" style="top:1243px;height:59px"><i class="strip" style="background:#3f9e69"></i><i class="c1"></i><i class="c2" style="height:26px"></i><i class="c3" style="height:26px"></i><i class="sub" style="top:25px"></i><div class="bd" style="top:2.8px">A9</div><svg style="left:97.6px;top:5.6px" width="12" height="13"><use href="#lock"/></svg><svg style="left:121px;top:4.6px" width="17" height="14"><use href="#asel"/></svg><div class="sm" style="left:149px;top:3.4px">S</div><div class="sm" style="left:177px;top:3.4px">M</div><span class="fx" style="top:3.6px">fx</span><span class="vol" style="top:5.6px">2.0</span><span class="nm" style="top:30.5px">Radio Voice Effect 2</span></div><div class="hr" style="top:1301px;height:59px"><i class="strip" style="background:#3f9e69"></i><i class="c1"></i><i class="c2" style="height:26px"></i><i class="c3" style="height:26px"></i><i class="sub" style="top:25px"></i><div class="bd" style="top:2.8px">A10</div><svg style="left:97.6px;top:5.6px" width="12" height="13"><use href="#lock"/></svg><svg style="left:121px;top:4.6px" width="17" height="14"><use href="#asel"/></svg><div class="sm" style="left:149px;top:3.4px">S</div><div class="sm" style="left:177px;top:3.4px">M</div><span class="vol" style="top:5.6px">2.0</span><span class="nm" style="top:30.5px">Music</span></div><div class="hr" style="top:1359px;height:2px"></div><i id="vs0"></i><i id="vs"></i><div id="hs"><i></i></div><div id="mt"><div id="mth">Meters</div><span style="position:absolute;left:27px;top:51px;font-size:11.4px;color:#c4c4c8;white-space:nowrap">Control Room</span><span class="sc" style="top:73.0px">0<b style="display:inline-block;width:2px;height:2px;background:#5a5a60;margin:0 0 2.5px 3px"></b></span><span class="sc" style="top:222.5px">-5<b style="display:inline-block;width:2px;height:2px;background:#5a5a60;margin:0 0 2.5px 3px"></b></span><span class="sc" style="top:370.0px">-10<b style="display:inline-block;width:2px;height:2px;background:#5a5a60;margin:0 0 2.5px 3px"></b></span><span class="sc" style="top:518.5px">-15<b style="display:inline-block;width:2px;height:2px;background:#5a5a60;margin:0 0 2.5px 3px"></b></span><span class="sc" style="top:666.5px">-20<b style="display:inline-block;width:2px;height:2px;background:#5a5a60;margin:0 0 2.5px 3px"></b></span><span class="sc" style="top:904.0px">-30<b style="display:inline-block;width:2px;height:2px;background:#5a5a60;margin:0 0 2.5px 3px"></b></span><span class="sc" style="top:1082.0px">-40<b style="display:inline-block;width:2px;height:2px;background:#5a5a60;margin:0 0 2.5px 3px"></b></span><span class="sc" style="top:1171.0px">-50<b style="display:inline-block;width:2px;height:2px;background:#5a5a60;margin:0 0 2.5px 3px"></b></span><i style="left:40px;top:78px;width:39px;height:1188px;background:#26262b;border:1px solid #18181b;border-top-color:#3a3a40"></i><i style="left:59px;top:78px;width:1.5px;height:1188px;background:#18181b"></i></div><div id="bb"><svg style="left:23px;top:6px" width="20" height="20"><circle cx="10" cy="5.2" r="4.3" fill="#e8e8e8"/><circle cx="5" cy="14" r="4.3" fill="#e8e8e8"/><circle cx="15" cy="14" r="4.3" fill="#e8e8e8"/></svg><span>DaVinci Resolve 20</span><i style="left:1101px;top:0;width:118px;height:31px;background:#000"></i><i style="left:1101px;top:29px;width:118px;height:2px;background:#d8463c"></i><svg style="left:912px;top:7px" width="19" height="17"><path d="M3,1H16M2,3.2H17" stroke="#606065" stroke-width="1"/><rect x="0.7" y="5.2" width="17.6" height="11" rx="1.5" fill="none" stroke="#606065" stroke-width="1.3"/><path d="M3,14.5 7,10.5 10,13 12.5,11.5 16,14.5Z" fill="#606065"/><circle cx="6" cy="8.5" r="1.1" fill="#606065"/></svg><svg style="left:1028px;top:7px" width="26" height="17"><g fill="none" stroke="#606065" stroke-width="1.4"><path d="M9,2H15L13,15H7Z"/><path d="M17,2H23.5Q25,2 24.7,3.5L23,13.5Q22.7,15 21.2,15H15Z"/><path d="M0.5,6H6.5M2.5,9H6M0.5,12H5.5" stroke-width="1.2"/></g></svg><svg style="left:1150px;top:5px" width="22" height="21"><rect x="0" y="5" width="9.5" height="3.6" rx="1" fill="#3d8ae0"/><rect x="12" y="5" width="10" height="3.6" rx="1" fill="#3d8ae0"/><rect x="2.5" y="10" width="7" height="3.6" rx="1" fill="#3d8ae0"/><rect x="12" y="10" width="7.5" height="3.6" rx="1" fill="#3d8ae0"/><rect x="0" y="15" width="9.5" height="3.4" rx="1" fill="#3d9e48"/><rect x="12" y="15" width="10" height="3.4" rx="1" fill="#3d9e48"/><path d="M10.8,2V21" stroke="#e0453a" stroke-width="1.4"/><path d="M8.6,0.3H13L10.8,3.2Z" fill="#e0453a"/></svg><svg style="left:1271px;top:6px" width="20" height="20"><path d="M15.5,4.5 7.5,17.5" stroke="#606065" stroke-width="3.2" stroke-linecap="round"/><path d="M4,1 4.8,3.5 7.3,4.3 4.8,5.1 4,7.6 3.2,5.1 0.7,4.3 3.2,3.5Z M10,0 10.5,1.6 12.1,2.1 10.5,2.6 10,4.2 9.5,2.6 7.9,2.1 9.5,1.6Z M2.5,9 3,10.5 4.5,11 3,11.5 2.5,13 2,11.5 0.5,11 2,10.5Z" fill="#606065"/></svg><svg style="left:1391px;top:6px" width="20" height="20"><g fill="#606065"><circle cx="10" cy="2.5" r="1.7"/><circle cx="15.3" cy="4.7" r="1.5"/><circle cx="17.5" cy="10" r="1.3"/><circle cx="15.3" cy="15.3" r="1.7"/><circle cx="10" cy="17.5" r="1.9"/><circle cx="4.7" cy="15.3" r="1.7"/><circle cx="2.5" cy="10" r="1.5"/><circle cx="4.7" cy="4.7" r="1.3"/><circle cx="10" cy="10" r="2"/></g></svg><svg style="left:1513px;top:6px" width="17" height="19"><path d="M5.5,15V3.5L15,1V12.5" fill="none" stroke="#606065" stroke-width="1.6"/><path d="M5.5,3.5 15,1V4.5L5.5,7Z" fill="#606065"/><ellipse cx="3.3" cy="15.3" rx="3" ry="2.3" fill="#606065"/><ellipse cx="12.8" cy="12.8" rx="3" ry="2.3" fill="#606065"/></svg><svg style="left:1631px;top:5px" width="20" height="21"><path d="M17.5,1Q11,1.5 7.5,7L5.5,11 9,14.5 13,12.5Q18.5,9 19,2.5Z" fill="none" stroke="#606065" stroke-width="1.5"/><circle cx="13.2" cy="6.8" r="1.7" fill="#606065"/><path d="M6,8.5 2,9.5 4.5,11.5ZM11.5,14 10.5,18 8.5,15.5ZM5,14Q2,15 1.5,19Q5,18.5 6.5,15.5Z" fill="#606065"/></svg><svg style="left:2320px;top:7px" width="22" height="17"><path d="M6,15.5Q1,15.5 1,11.5 1,8 4.8,7.6 5.5,2 11,2 15.5,2 16.6,6.5 21,6.8 21,11 21,15.5 16.5,15.5Z" fill="none" stroke="#5a5a5f" stroke-width="1.3"/><path d="M8,10 10.3,12.3 14.5,7.8" fill="none" stroke="#5a5a5f" stroke-width="1.3"/></svg><svg style="left:2372px;top:7px" width="18" height="18"><path d="M9,1Q17,1 17,7 17,12.5 10.5,12.9L9,17 7.5,12.9Q1,12.4 1,7 1,1 9,1Z" fill="#8a8a8e"/><circle cx="5.3" cy="7" r="1.1" fill="#17171a"/><circle cx="9" cy="7" r="1.1" fill="#17171a"/><circle cx="12.7" cy="7" r="1.1" fill="#17171a"/></svg><svg style="left:2419px;top:7px" width="20" height="17"><circle cx="12.5" cy="4" r="3.4" fill="#8a8a8e"/><path d="M5.5,16Q5.5,9 12.5,9 19.5,9 19.5,16Z" fill="#8a8a8e"/><circle cx="4.6" cy="7" r="2.4" fill="#8a8a8e"/><path d="M0,16Q0,11 4.6,11 6,11 6.6,11.5 4.3,13 4.2,16Z" fill="#8a8a8e"/></svg><svg style="left:2470px;top:7px" width="17" height="17"><path d="M8.5,1 16.5,9H14.2V16H10.5V11H6.5V16H2.8V9H0.5Z" fill="#8a8a8e"/></svg><svg style="left:2518px;top:6px" width="19" height="19"><g stroke="#8a8a8e" stroke-width="2.6"><path d="M9.5,0.5V18.5M0.5,9.5H18.5M3.1,3.1 15.9,15.9M15.9,3.1 3.1,15.9"/></g><circle cx="9.5" cy="9.5" r="5.6" fill="#8a8a8e"/><circle cx="9.5" cy="9.5" r="3.2" fill="#17171a"/></svg></div><i id="ph"></i><svg id="phh" width="16" height="14"><path d="M2,0.5H14Q15.3,0.5 15.3,1.8V6L8,12.8 0.7,6V1.8Q0.7,0.5 2,0.5Z" fill="#e64a3f" stroke="#2a1c1c" stroke-width=".7"/></svg></body></html>
